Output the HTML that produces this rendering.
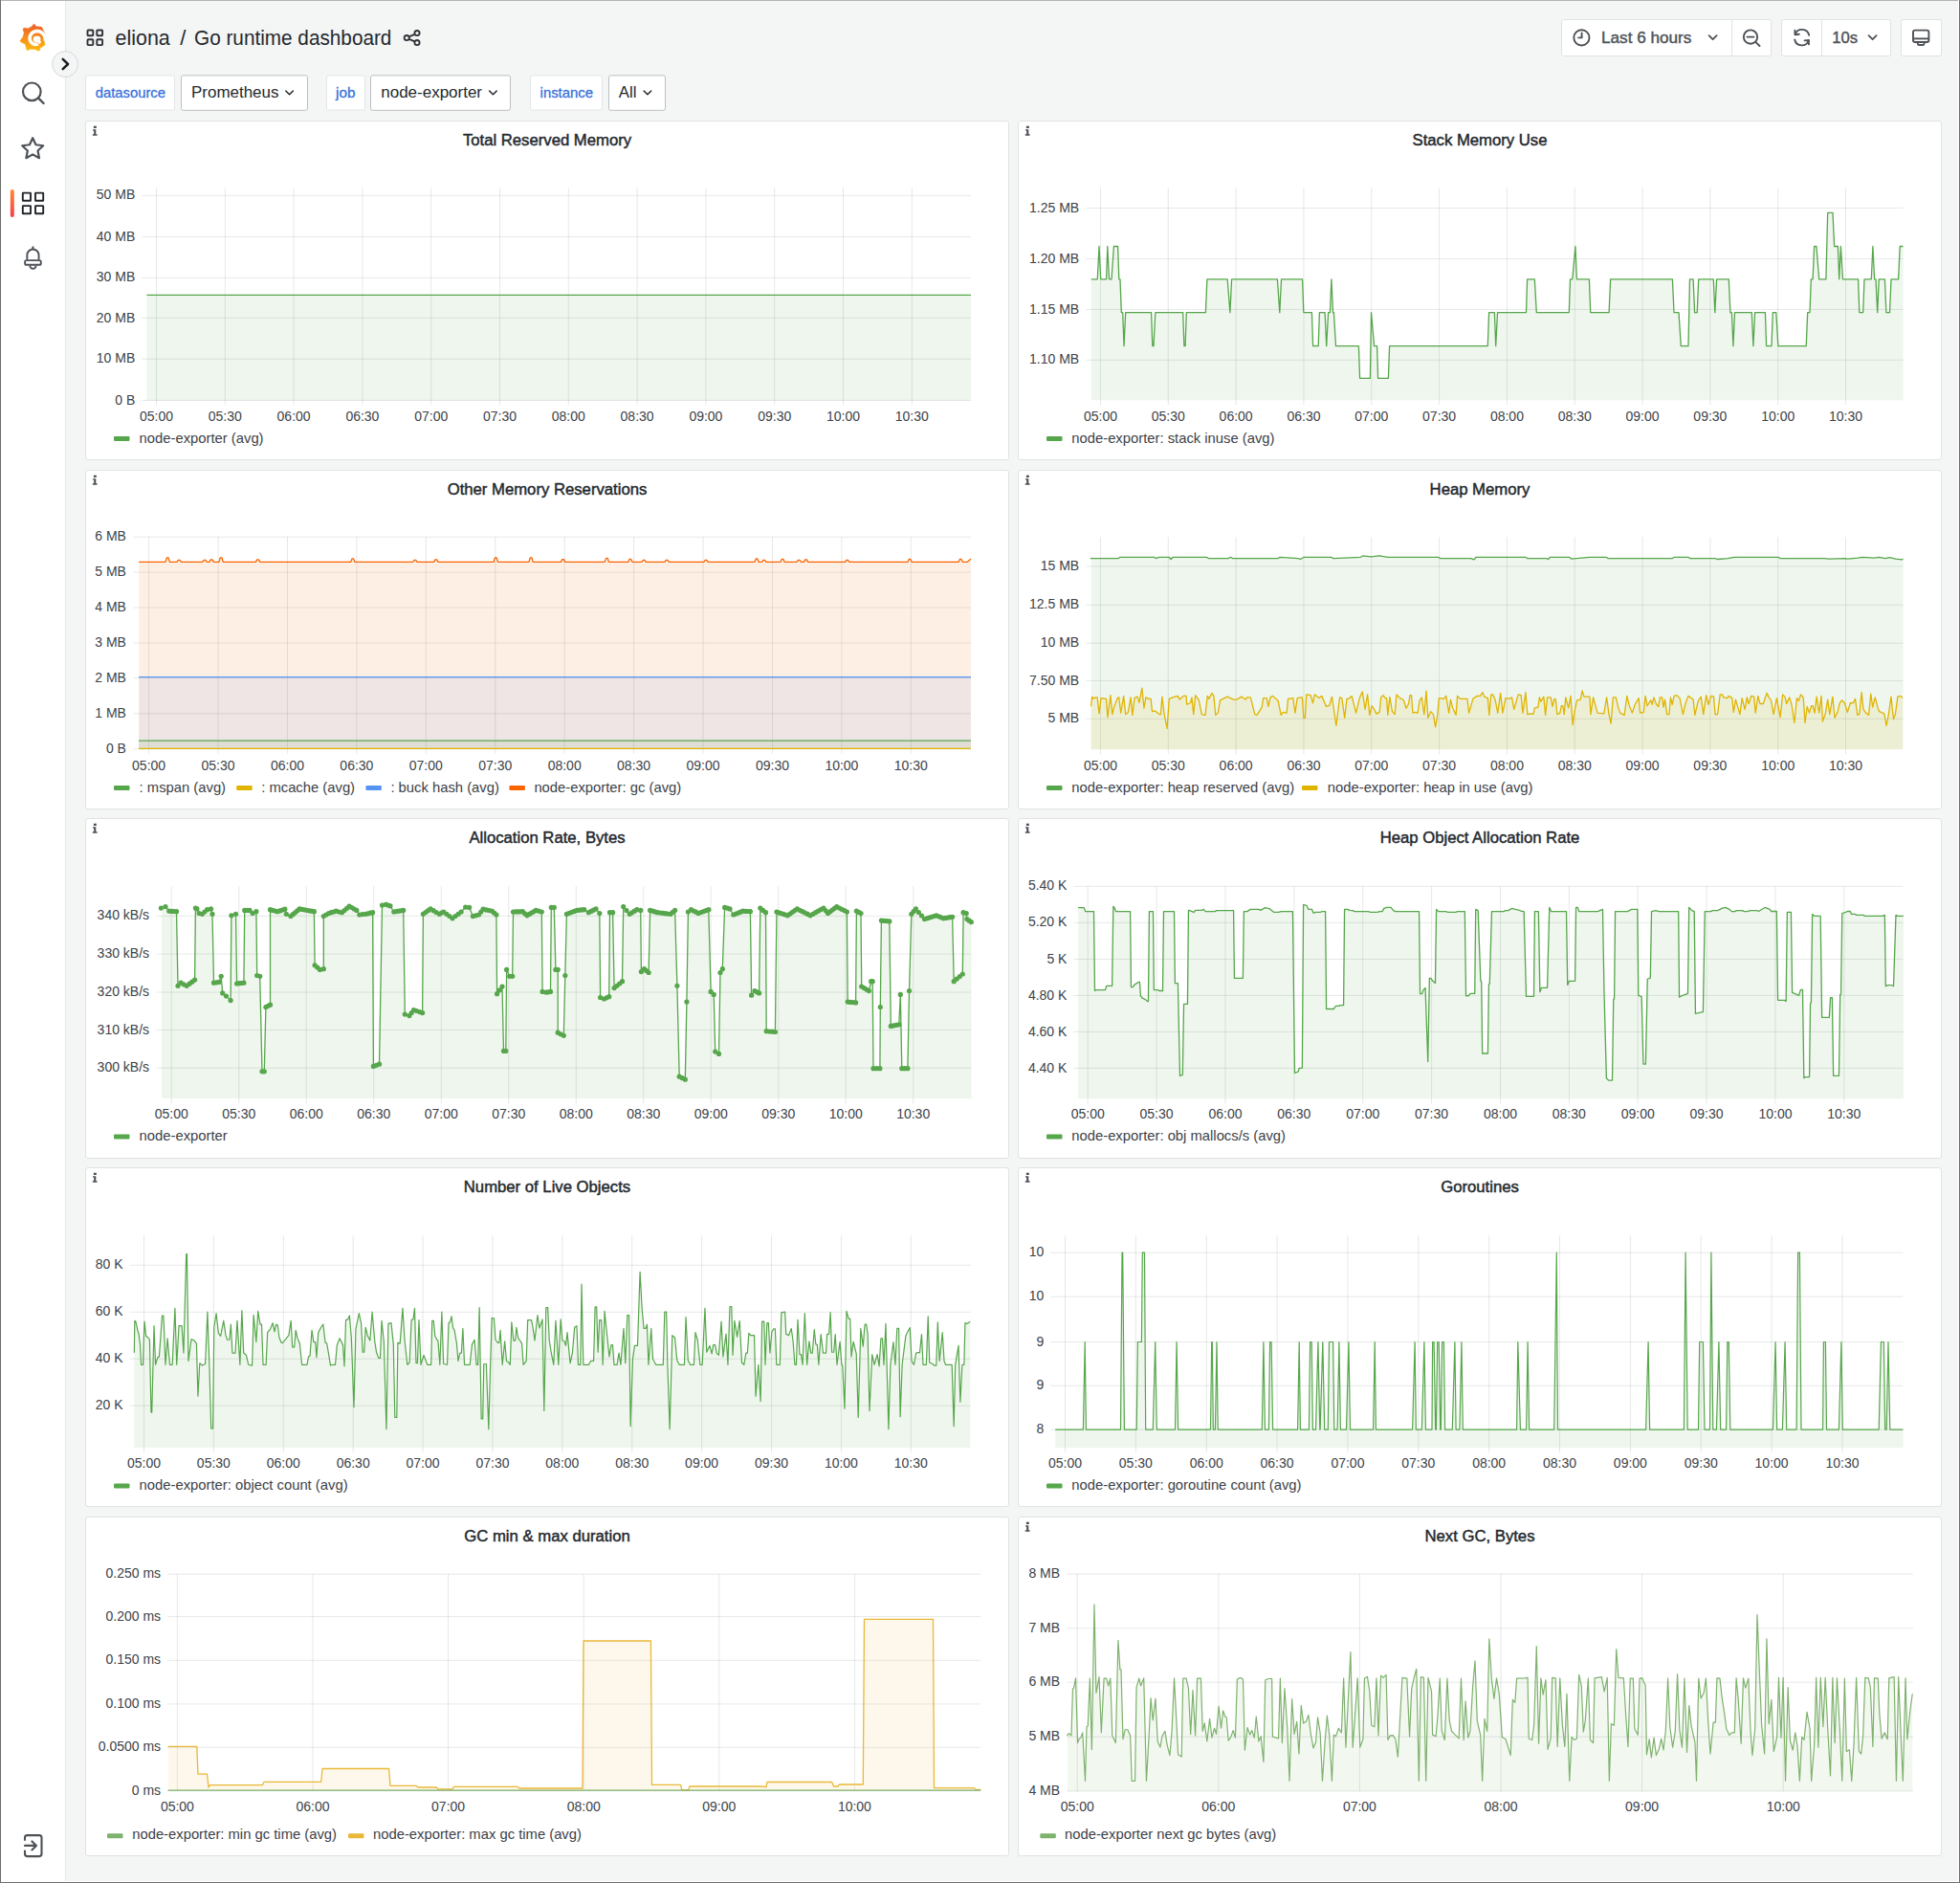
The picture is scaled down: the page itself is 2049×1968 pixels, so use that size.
<!DOCTYPE html>
<html><head><meta charset="utf-8"><title>Go runtime dashboard</title>
<style>html,body{margin:0;padding:0;background:#f4f5f5;width:2049px;height:1968px;overflow:hidden}svg{display:block}</style>
</head><body><svg width="2049" height="1968" viewBox="0 0 2049 1968" shape-rendering="auto">
<rect x="0" y="0" width="2049" height="1968" fill="#f4f5f5"/>
<rect x="0" y="0" width="68" height="1968" fill="#ffffff"/>
<rect x="68" y="0" width="1" height="1968" fill="#e4e6e9"/>
<defs><linearGradient id="lg" x1="0" y1="1" x2="0" y2="0"><stop offset="0" stop-color="#fcbc0c"/><stop offset="1" stop-color="#f05a28"/></linearGradient></defs>
<polygon points="35.5,24.9 37.9,27.8 42.4,28.1 43.8,28.5 44.7,31 46.5,34.3 47.7,38.0 47.4,40.6 46.2,44.2 47.1,46.4 45,48.5 42,50 41.5,52.7 39.3,53 37,51.6 31.9,51.2 28.3,52.7 27.4,50.2 26.5,46.2 21.6,43.7 21.1,42.4 24,38.8 25.2,34.6 24,30.1 25.8,29.2 29.2,29.9 33.3,27.8" fill="url(#lg)" stroke="url(#lg)" stroke-width="0.6" stroke-linejoin="round"/>
<path d="M47.22 43.00 L47.30 42.37 L47.34 41.75 L47.34 41.12 L47.29 40.51 L47.21 39.89 L47.08 39.29 L46.92 38.71 L46.72 38.13 L46.48 37.58 L46.21 37.05 L45.90 36.53 L45.56 36.05 L45.20 35.58 L44.80 35.15 L44.38 34.75 L43.94 34.38 L43.47 34.04 L42.99 33.73 L42.49 33.46 L41.98 33.22 L41.45 33.02 L40.92 32.86 L40.38 32.73 L39.83 32.64 L39.28 32.59 L38.74 32.57 L38.20 32.59 L37.66 32.65 L37.14 32.74 L36.62 32.87 L36.11 33.02 L35.63 33.22 L35.15 33.44 L34.70 33.69 L34.27 33.97 L33.86 34.27 L33.47 34.60 L33.11 34.96 L32.78 35.33 L32.47 35.72 L32.19 36.13 L31.95 36.56 L31.73 36.99 L31.54 37.44 L31.39 37.89 L31.27 38.36 L31.18 38.82 L31.12 39.29 L31.09 39.75 L31.09 40.22 L31.13 40.68 L31.19 41.13 L31.29 41.57 L31.41 42.00 L31.56 42.43 L31.74 42.83 L31.94 43.22 L32.17 43.60 L32.42 43.95 L32.69 44.28 L32.98 44.60 L33.28 44.89 L33.61 45.15 L33.95 45.40 L34.30 45.61 L34.66 45.80 L35.03 45.97 L35.41 46.11 L35.79 46.22 L36.18 46.31 L36.57 46.36 L36.95 46.40 L37.34 46.40 L37.72 46.38 L38.10 46.34 L38.47 46.27 L38.83 46.17 L39.18 46.05 L39.52 45.91 L39.84 45.75" fill="none" stroke="#fff" stroke-width="3.6" stroke-linecap="butt"/>
<ellipse cx="38.55" cy="40.9" rx="3.9" ry="3.35" fill="#fff"/>
<path d="M41.0 45.6 L41.8 42.6" fill="none" stroke="#fff" stroke-width="2.4"/>
<circle cx="68.05" cy="67.0" r="13.5" fill="#f4f5f5" stroke="#d6d8db" stroke-width="1"/>
<path d="M65.7 61.9 L71.1 67 L65.7 72.1" fill="none" stroke="#1b1e22" stroke-width="2.5" stroke-linecap="round" stroke-linejoin="round"/>
<circle cx="33.3" cy="95.8" r="9.3" fill="none" stroke="#4d5257" stroke-width="2.2"/>
<path d="M40.2 102.6 L45.6 108" stroke="#4d5257" stroke-width="2.4" stroke-linecap="round"/>
<polygon points="34.20,144.20 37.49,151.27 45.23,152.22 39.53,157.53 41.02,165.18 34.20,161.40 27.38,165.18 28.87,157.53 23.17,152.22 30.91,151.27" fill="none" stroke="#4d5257" stroke-width="2.2" stroke-linejoin="round"/>
<rect x="23.8" y="201.6" width="8.2" height="8.2" rx="0.4" fill="none" stroke="#202428" stroke-width="1.9"/>
<rect x="37.0" y="201.6" width="8.2" height="8.2" rx="0.4" fill="none" stroke="#202428" stroke-width="1.9"/>
<rect x="23.8" y="215.1" width="8.2" height="8.2" rx="0.4" fill="none" stroke="#202428" stroke-width="1.9"/>
<rect x="37.0" y="215.1" width="8.2" height="8.2" rx="0.4" fill="none" stroke="#202428" stroke-width="1.9"/>
<defs><linearGradient id="ab" x1="0" y1="0" x2="0" y2="1"><stop offset="0" stop-color="#ff8833"/><stop offset="1" stop-color="#f53e4c"/></linearGradient></defs>
<rect x="10.8" y="198" width="4" height="29" rx="2" fill="url(#ab)"/>
<path d="M34.45 258.2 L34.45 260.2" stroke="#4d5257" stroke-width="1.9" stroke-linecap="round"/>
<path d="M28.35 271.4 L28.35 266.6 A6.1 6.1 0 0 1 40.55 266.6 L40.55 271.4" fill="none" stroke="#4d5257" stroke-width="1.9"/>
<rect x="26.1" y="272.1" width="16.7" height="4.7" rx="1.6" fill="none" stroke="#4d5257" stroke-width="1.9"/>
<path d="M31.2 277.6 A3.25 3.25 0 0 0 37.7 277.6" fill="none" stroke="#4d5257" stroke-width="1.9"/>
<path d="M26 1923 L26 1920.6 A2.5 2.5 0 0 1 28.5 1918.1 L41 1918.1 A2.5 2.5 0 0 1 43.5 1920.6 L43.5 1937.6 A2.5 2.5 0 0 1 41 1940.1 L28.5 1940.1 A2.5 2.5 0 0 1 26 1937.6 L26 1934.6" fill="none" stroke="#4d5257" stroke-width="2.1" stroke-linecap="round"/>
<path d="M26 1928.9 L38 1928.9 M33.4 1924.4 L38 1928.9 L33.4 1933.4" fill="none" stroke="#4d5257" stroke-width="2.1" stroke-linecap="round" stroke-linejoin="round"/>
<rect x="91.5" y="31.5" width="5.8" height="5.8" rx="0.8" fill="none" stroke="#2f3338" stroke-width="1.9"/>
<rect x="101.3" y="31.5" width="5.8" height="5.8" rx="0.8" fill="none" stroke="#2f3338" stroke-width="1.9"/>
<rect x="91.5" y="41.3" width="5.8" height="5.8" rx="0.8" fill="none" stroke="#2f3338" stroke-width="1.9"/>
<rect x="101.3" y="41.3" width="5.8" height="5.8" rx="0.8" fill="none" stroke="#2f3338" stroke-width="1.9"/>
<text x="120.60" y="46.70" font-family='"Liberation Sans", sans-serif' font-size="22" font-weight="400" fill="#24292e" text-anchor="start" textLength="57.2" lengthAdjust="spacingAndGlyphs">eliona</text>
<text x="188.30" y="46.70" font-family='"Liberation Sans", sans-serif' font-size="22" font-weight="400" fill="#24292e" text-anchor="start">/</text>
<text x="203.00" y="46.70" font-family='"Liberation Sans", sans-serif' font-size="22" font-weight="400" fill="#24292e" text-anchor="start" textLength="206.4" lengthAdjust="spacingAndGlyphs">Go runtime dashboard</text>
<circle cx="436" cy="34.6" r="2.6" fill="none" stroke="#2f3338" stroke-width="1.8"/>
<circle cx="436" cy="44.6" r="2.6" fill="none" stroke="#2f3338" stroke-width="1.8"/>
<circle cx="425.2" cy="39.6" r="2.6" fill="none" stroke="#2f3338" stroke-width="1.8"/>
<path d="M427.6 38.4 L433.6 35.8 M427.6 40.8 L433.6 43.4" stroke="#2f3338" stroke-width="1.8"/>
<rect x="1632.5" y="20.5" width="219.0" height="38.0" rx="2" fill="#fff" stroke="#dfe1e4" stroke-width="1"/>
<rect x="1810" y="21" width="1" height="37" fill="#dfe1e4"/>
<circle cx="1653.4" cy="39.4" r="8.1" fill="none" stroke="#4d5257" stroke-width="1.9"/>
<path d="M1653.6 34.4 L1653.6 39.4 L1650.2 39.4" fill="none" stroke="#4d5257" stroke-width="1.9" stroke-linecap="round"/>
<text x="1674.00" y="45.20" font-family='"Liberation Sans", sans-serif' font-size="17.2" font-weight="400" fill="#4d5257" text-anchor="start" textLength="94.4" lengthAdjust="spacingAndGlyphs" stroke="#4d5257" stroke-width="0.4">Last 6 hours</text>
<path d="M1786.6 37.2 L1790.6 41.2 L1794.6 37.2" fill="none" stroke="#4d5257" stroke-width="1.8" stroke-linecap="round" stroke-linejoin="round"/>
<circle cx="1830" cy="38.6" r="7.2" fill="none" stroke="#4d5257" stroke-width="1.9"/>
<path d="M1826.4 38.6 L1833.6 38.6 M1835.3 43.9 L1839.5 48" stroke="#4d5257" stroke-width="1.9" stroke-linecap="round"/>
<rect x="1862.5" y="20.5" width="114.0" height="38.0" rx="2" fill="#fff" stroke="#dfe1e4" stroke-width="1"/>
<rect x="1904" y="21" width="1" height="37" fill="#dfe1e4"/>
<path d="M1876.2 41.5 A7.6 7.6 0 0 0 1890.8 42.2 M1891.2 36.8 A7.6 7.6 0 0 0 1876.6 36" fill="none" stroke="#4d5257" stroke-width="1.9" stroke-linecap="round"/>
<path d="M1876.4 31.8 L1876.6 36.2 L1880.8 35.8 M1891 46.4 L1890.8 42 L1886.6 42.4" fill="none" stroke="#4d5257" stroke-width="1.9" stroke-linecap="round" stroke-linejoin="round"/>
<text x="1915.30" y="45.20" font-family='"Liberation Sans", sans-serif' font-size="17.2" font-weight="400" fill="#4d5257" text-anchor="start" textLength="26.8" lengthAdjust="spacingAndGlyphs" stroke="#4d5257" stroke-width="0.4">10s</text>
<path d="M1953.6 37.2 L1957.6 41.2 L1961.6 37.2" fill="none" stroke="#4d5257" stroke-width="1.8" stroke-linecap="round" stroke-linejoin="round"/>
<rect x="1987.5" y="20.5" width="42.0" height="38.0" rx="2" fill="#fff" stroke="#dfe1e4" stroke-width="1"/>
<rect x="2000" y="31.6" width="16.4" height="12.4" rx="2" fill="none" stroke="#4d5257" stroke-width="1.9"/>
<path d="M2000 40.4 L2016.4 40.4" stroke="#4d5257" stroke-width="1.9"/>
<rect x="2004.8" y="44" width="6.8" height="3" rx="1.2" fill="none" stroke="#4d5257" stroke-width="1.8"/>
<rect x="89.5" y="79.0" width="93.0" height="36.0" rx="2" fill="#fff" stroke="#e3e5e8" stroke-width="1"/>
<text x="99.80" y="101.80" font-family='"Liberation Sans", sans-serif' font-size="14.8" font-weight="400" fill="#3871dc" text-anchor="start" textLength="73.2" lengthAdjust="spacingAndGlyphs" stroke="#3871dc" stroke-width="0.3">datasource</text>
<rect x="189.5" y="78.9" width="132" height="36.4" rx="2" fill="#fff" stroke="#bcbfc3" stroke-width="1"/>
<text x="200.00" y="102.00" font-family='"Liberation Sans", sans-serif' font-size="17" font-weight="400" fill="#24292e" text-anchor="start" textLength="91.4" lengthAdjust="spacingAndGlyphs">Prometheus</text>
<path d="M298.8 95 L302.6 98.8 L306.4 95" fill="none" stroke="#24292e" stroke-width="1.5" stroke-linecap="round" stroke-linejoin="round"/>
<rect x="341.5" y="79.0" width="40.0" height="36.0" rx="2" fill="#fff" stroke="#e3e5e8" stroke-width="1"/>
<text x="351.10" y="101.80" font-family='"Liberation Sans", sans-serif' font-size="14.8" font-weight="400" fill="#3871dc" text-anchor="start" textLength="20.4" lengthAdjust="spacingAndGlyphs" stroke="#3871dc" stroke-width="0.3">job</text>
<rect x="387.5" y="78.9" width="146" height="36.4" rx="2" fill="#fff" stroke="#bcbfc3" stroke-width="1"/>
<text x="398.30" y="102.00" font-family='"Liberation Sans", sans-serif' font-size="17" font-weight="400" fill="#24292e" text-anchor="start" textLength="105.7" lengthAdjust="spacingAndGlyphs">node-exporter</text>
<path d="M511.6 95 L515.4 98.8 L519.2 95" fill="none" stroke="#24292e" stroke-width="1.5" stroke-linecap="round" stroke-linejoin="round"/>
<rect x="554.5" y="79.0" width="75.0" height="36.0" rx="2" fill="#fff" stroke="#e3e5e8" stroke-width="1"/>
<text x="564.60" y="101.80" font-family='"Liberation Sans", sans-serif' font-size="14.8" font-weight="400" fill="#3871dc" text-anchor="start" textLength="55.4" lengthAdjust="spacingAndGlyphs" stroke="#3871dc" stroke-width="0.3">instance</text>
<rect x="636.5" y="78.9" width="59" height="36.4" rx="2" fill="#fff" stroke="#bcbfc3" stroke-width="1"/>
<text x="646.80" y="102.00" font-family='"Liberation Sans", sans-serif' font-size="17" font-weight="400" fill="#24292e" text-anchor="start" textLength="18.7" lengthAdjust="spacingAndGlyphs">All</text>
<path d="M673.1 95 L676.9 98.8 L680.7 95" fill="none" stroke="#24292e" stroke-width="1.5" stroke-linecap="round" stroke-linejoin="round"/>
<rect x="89.5" y="126.5" width="965" height="354" rx="2.5" fill="#fff" stroke="#e0e2e5" stroke-width="1"/>
<text x="572.00" y="151.80" font-family='"Liberation Sans", sans-serif' font-size="16.7" font-weight="400" fill="#24292e" text-anchor="middle" stroke="#24292e" stroke-width="0.45">Total Reserved Memory</text>
<rect x="97.90" y="131.70" width="2.9" height="2.3" fill="#4a4f55"/>
<path d="M97.00 135.20 H100.30 V140.20 H101.60 V141.80 H96.80 V140.20 H98.20 V136.60 H97.00 Z" fill="#4a4f55"/>
<rect x="148.2" y="203.80" width="866.8" height="1" fill="rgba(36,41,46,0.11)"/>
<text x="141.30" y="208.40" font-family='"Liberation Sans", sans-serif' font-size="14" font-weight="400" fill="#3d4248" text-anchor="end">50 MB</text>
<rect x="148.2" y="246.90" width="866.8" height="1" fill="rgba(36,41,46,0.11)"/>
<text x="141.30" y="251.50" font-family='"Liberation Sans", sans-serif' font-size="14" font-weight="400" fill="#3d4248" text-anchor="end">40 MB</text>
<rect x="148.2" y="289.80" width="866.8" height="1" fill="rgba(36,41,46,0.11)"/>
<text x="141.30" y="294.40" font-family='"Liberation Sans", sans-serif' font-size="14" font-weight="400" fill="#3d4248" text-anchor="end">30 MB</text>
<rect x="148.2" y="331.90" width="866.8" height="1" fill="rgba(36,41,46,0.11)"/>
<text x="141.30" y="336.50" font-family='"Liberation Sans", sans-serif' font-size="14" font-weight="400" fill="#3d4248" text-anchor="end">20 MB</text>
<rect x="148.2" y="374.70" width="866.8" height="1" fill="rgba(36,41,46,0.11)"/>
<text x="141.30" y="379.30" font-family='"Liberation Sans", sans-serif' font-size="14" font-weight="400" fill="#3d4248" text-anchor="end">10 MB</text>
<rect x="148.2" y="417.90" width="866.8" height="1" fill="rgba(36,41,46,0.11)"/>
<text x="141.30" y="422.50" font-family='"Liberation Sans", sans-serif' font-size="14" font-weight="400" fill="#3d4248" text-anchor="end">0 B</text>
<rect x="163.00" y="196.2" width="1" height="227.2" fill="rgba(36,41,46,0.11)"/>
<text x="163.50" y="439.90" font-family='"Liberation Sans", sans-serif' font-size="14" font-weight="400" fill="#3d4248" text-anchor="middle">05:00</text>
<rect x="234.80" y="196.2" width="1" height="227.2" fill="rgba(36,41,46,0.11)"/>
<text x="235.30" y="439.90" font-family='"Liberation Sans", sans-serif' font-size="14" font-weight="400" fill="#3d4248" text-anchor="middle">05:30</text>
<rect x="306.60" y="196.2" width="1" height="227.2" fill="rgba(36,41,46,0.11)"/>
<text x="307.10" y="439.90" font-family='"Liberation Sans", sans-serif' font-size="14" font-weight="400" fill="#3d4248" text-anchor="middle">06:00</text>
<rect x="378.40" y="196.2" width="1" height="227.2" fill="rgba(36,41,46,0.11)"/>
<text x="378.90" y="439.90" font-family='"Liberation Sans", sans-serif' font-size="14" font-weight="400" fill="#3d4248" text-anchor="middle">06:30</text>
<rect x="450.20" y="196.2" width="1" height="227.2" fill="rgba(36,41,46,0.11)"/>
<text x="450.70" y="439.90" font-family='"Liberation Sans", sans-serif' font-size="14" font-weight="400" fill="#3d4248" text-anchor="middle">07:00</text>
<rect x="522.00" y="196.2" width="1" height="227.2" fill="rgba(36,41,46,0.11)"/>
<text x="522.50" y="439.90" font-family='"Liberation Sans", sans-serif' font-size="14" font-weight="400" fill="#3d4248" text-anchor="middle">07:30</text>
<rect x="593.80" y="196.2" width="1" height="227.2" fill="rgba(36,41,46,0.11)"/>
<text x="594.30" y="439.90" font-family='"Liberation Sans", sans-serif' font-size="14" font-weight="400" fill="#3d4248" text-anchor="middle">08:00</text>
<rect x="665.60" y="196.2" width="1" height="227.2" fill="rgba(36,41,46,0.11)"/>
<text x="666.10" y="439.90" font-family='"Liberation Sans", sans-serif' font-size="14" font-weight="400" fill="#3d4248" text-anchor="middle">08:30</text>
<rect x="737.40" y="196.2" width="1" height="227.2" fill="rgba(36,41,46,0.11)"/>
<text x="737.90" y="439.90" font-family='"Liberation Sans", sans-serif' font-size="14" font-weight="400" fill="#3d4248" text-anchor="middle">09:00</text>
<rect x="809.20" y="196.2" width="1" height="227.2" fill="rgba(36,41,46,0.11)"/>
<text x="809.70" y="439.90" font-family='"Liberation Sans", sans-serif' font-size="14" font-weight="400" fill="#3d4248" text-anchor="middle">09:30</text>
<rect x="881.00" y="196.2" width="1" height="227.2" fill="rgba(36,41,46,0.11)"/>
<text x="881.50" y="439.90" font-family='"Liberation Sans", sans-serif' font-size="14" font-weight="400" fill="#3d4248" text-anchor="middle">10:00</text>
<rect x="952.80" y="196.2" width="1" height="227.2" fill="rgba(36,41,46,0.11)"/>
<text x="953.30" y="439.90" font-family='"Liberation Sans", sans-serif' font-size="14" font-weight="400" fill="#3d4248" text-anchor="middle">10:30</text>
<path d="M153.50 308.40 L1015.00 308.40 L1015.00 418.40 L153.50 418.40 Z" fill="rgba(86,166,75,0.1)" stroke="none"/>
<path d="M153.50 308.40 L1015.00 308.40" fill="none" stroke="#56a64b" stroke-width="1.3" stroke-linejoin="round"/>
<rect x="119.0" y="455.9" width="16.5" height="5" rx="1.2" fill="#56a64b"/>
<text x="145.60" y="462.80" font-family='"Liberation Sans", sans-serif' font-size="14.8" font-weight="400" fill="#3d4248" text-anchor="start">node-exporter (avg)</text>
<rect x="1064.5" y="126.5" width="965" height="354" rx="2.5" fill="#fff" stroke="#e0e2e5" stroke-width="1"/>
<text x="1547.00" y="151.80" font-family='"Liberation Sans", sans-serif' font-size="16.7" font-weight="400" fill="#24292e" text-anchor="middle" stroke="#24292e" stroke-width="0.45">Stack Memory Use</text>
<rect x="1072.90" y="131.70" width="2.9" height="2.3" fill="#4a4f55"/>
<path d="M1072.00 135.20 H1075.30 V140.20 H1076.60 V141.80 H1071.80 V140.20 H1073.20 V136.60 H1072.00 Z" fill="#4a4f55"/>
<rect x="1135.5" y="216.90" width="854.0" height="1" fill="rgba(36,41,46,0.11)"/>
<text x="1128.20" y="221.50" font-family='"Liberation Sans", sans-serif' font-size="14" font-weight="400" fill="#3d4248" text-anchor="end">1.25 MB</text>
<rect x="1135.5" y="270.00" width="854.0" height="1" fill="rgba(36,41,46,0.11)"/>
<text x="1128.20" y="274.60" font-family='"Liberation Sans", sans-serif' font-size="14" font-weight="400" fill="#3d4248" text-anchor="end">1.20 MB</text>
<rect x="1135.5" y="322.90" width="854.0" height="1" fill="rgba(36,41,46,0.11)"/>
<text x="1128.20" y="327.50" font-family='"Liberation Sans", sans-serif' font-size="14" font-weight="400" fill="#3d4248" text-anchor="end">1.15 MB</text>
<rect x="1135.5" y="375.80" width="854.0" height="1" fill="rgba(36,41,46,0.11)"/>
<text x="1128.20" y="380.40" font-family='"Liberation Sans", sans-serif' font-size="14" font-weight="400" fill="#3d4248" text-anchor="end">1.10 MB</text>
<rect x="1150.00" y="196.3" width="1" height="226.9" fill="rgba(36,41,46,0.11)"/>
<text x="1150.50" y="439.90" font-family='"Liberation Sans", sans-serif' font-size="14" font-weight="400" fill="#3d4248" text-anchor="middle">05:00</text>
<rect x="1220.82" y="196.3" width="1" height="226.9" fill="rgba(36,41,46,0.11)"/>
<text x="1221.32" y="439.90" font-family='"Liberation Sans", sans-serif' font-size="14" font-weight="400" fill="#3d4248" text-anchor="middle">05:30</text>
<rect x="1291.64" y="196.3" width="1" height="226.9" fill="rgba(36,41,46,0.11)"/>
<text x="1292.14" y="439.90" font-family='"Liberation Sans", sans-serif' font-size="14" font-weight="400" fill="#3d4248" text-anchor="middle">06:00</text>
<rect x="1362.46" y="196.3" width="1" height="226.9" fill="rgba(36,41,46,0.11)"/>
<text x="1362.96" y="439.90" font-family='"Liberation Sans", sans-serif' font-size="14" font-weight="400" fill="#3d4248" text-anchor="middle">06:30</text>
<rect x="1433.28" y="196.3" width="1" height="226.9" fill="rgba(36,41,46,0.11)"/>
<text x="1433.78" y="439.90" font-family='"Liberation Sans", sans-serif' font-size="14" font-weight="400" fill="#3d4248" text-anchor="middle">07:00</text>
<rect x="1504.10" y="196.3" width="1" height="226.9" fill="rgba(36,41,46,0.11)"/>
<text x="1504.60" y="439.90" font-family='"Liberation Sans", sans-serif' font-size="14" font-weight="400" fill="#3d4248" text-anchor="middle">07:30</text>
<rect x="1574.92" y="196.3" width="1" height="226.9" fill="rgba(36,41,46,0.11)"/>
<text x="1575.42" y="439.90" font-family='"Liberation Sans", sans-serif' font-size="14" font-weight="400" fill="#3d4248" text-anchor="middle">08:00</text>
<rect x="1645.74" y="196.3" width="1" height="226.9" fill="rgba(36,41,46,0.11)"/>
<text x="1646.24" y="439.90" font-family='"Liberation Sans", sans-serif' font-size="14" font-weight="400" fill="#3d4248" text-anchor="middle">08:30</text>
<rect x="1716.56" y="196.3" width="1" height="226.9" fill="rgba(36,41,46,0.11)"/>
<text x="1717.06" y="439.90" font-family='"Liberation Sans", sans-serif' font-size="14" font-weight="400" fill="#3d4248" text-anchor="middle">09:00</text>
<rect x="1787.38" y="196.3" width="1" height="226.9" fill="rgba(36,41,46,0.11)"/>
<text x="1787.88" y="439.90" font-family='"Liberation Sans", sans-serif' font-size="14" font-weight="400" fill="#3d4248" text-anchor="middle">09:30</text>
<rect x="1858.20" y="196.3" width="1" height="226.9" fill="rgba(36,41,46,0.11)"/>
<text x="1858.70" y="439.90" font-family='"Liberation Sans", sans-serif' font-size="14" font-weight="400" fill="#3d4248" text-anchor="middle">10:00</text>
<rect x="1929.02" y="196.3" width="1" height="226.9" fill="rgba(36,41,46,0.11)"/>
<text x="1929.52" y="439.90" font-family='"Liberation Sans", sans-serif' font-size="14" font-weight="400" fill="#3d4248" text-anchor="middle">10:30</text>
<path d="M1140.70 291.80 L1147.30 291.80 L1149.00 257.50 L1150.70 291.80 L1156.60 291.80 L1157.80 257.50 L1159.50 291.80 L1162.00 291.80 L1164.40 257.50 L1168.60 257.50 L1169.80 291.80 L1171.00 291.80 L1172.30 326.60 L1173.70 326.60 L1175.00 361.60 L1176.70 326.60 L1203.60 326.60 L1204.80 361.60 L1206.00 361.60 L1207.80 326.60 L1236.70 326.60 L1237.90 361.60 L1239.10 361.60 L1240.30 326.60 L1260.40 326.60 L1261.90 291.80 L1283.20 291.80 L1285.90 326.60 L1287.60 291.80 L1335.40 291.80 L1337.80 326.60 L1339.50 291.80 L1361.60 291.80 L1362.80 326.60 L1371.40 326.60 L1372.60 361.60 L1378.20 361.60 L1379.40 326.60 L1385.10 326.60 L1386.70 361.60 L1388.60 326.60 L1390.40 326.60 L1391.90 291.80 L1393.50 326.60 L1394.40 326.60 L1396.50 361.60 L1420.40 361.60 L1421.60 395.40 L1432.40 395.40 L1433.50 326.60 L1436.60 361.60 L1439.60 361.60 L1440.60 395.40 L1451.40 395.40 L1452.60 361.60 L1555.30 361.60 L1556.60 326.60 L1562.40 326.60 L1563.70 361.60 L1565.50 326.60 L1595.50 326.60 L1596.60 291.80 L1604.30 291.80 L1606.30 326.60 L1640.30 326.60 L1641.50 291.80 L1643.80 291.80 L1646.90 257.50 L1648.40 291.80 L1661.40 291.80 L1662.70 326.60 L1682.10 326.60 L1683.60 291.80 L1748.40 291.80 L1750.00 326.60 L1755.00 326.60 L1757.30 361.60 L1765.00 361.60 L1766.50 291.80 L1770.10 291.80 L1771.60 326.60 L1774.20 326.60 L1775.70 291.80 L1791.30 291.80 L1792.80 326.60 L1794.60 291.80 L1807.30 291.80 L1808.90 326.60 L1810.40 326.60 L1811.90 361.60 L1813.50 326.60 L1831.30 326.60 L1832.90 361.60 L1834.60 326.60 L1845.40 326.60 L1846.60 361.60 L1852.00 361.60 L1853.30 326.60 L1856.80 326.60 L1858.90 361.60 L1888.20 361.60 L1889.70 326.60 L1892.00 326.60 L1893.30 291.80 L1895.10 291.80 L1896.60 257.50 L1898.90 257.50 L1901.70 291.80 L1908.90 291.80 L1910.70 222.40 L1916.00 222.40 L1917.60 257.50 L1921.40 257.50 L1922.70 291.80 L1924.40 257.50 L1926.50 291.80 L1942.60 291.80 L1943.80 326.60 L1947.70 326.60 L1949.00 291.80 L1956.30 291.80 L1957.90 257.50 L1959.60 291.80 L1961.00 291.80 L1962.70 326.60 L1964.20 291.80 L1970.40 291.80 L1971.90 326.60 L1975.50 326.60 L1977.00 291.80 L1984.60 291.80 L1986.20 257.50 L1989.50 257.50 L1989.50 418.20 L1140.70 418.20 Z" fill="rgba(86,166,75,0.1)" stroke="none"/>
<path d="M1140.70 291.80 L1147.30 291.80 L1149.00 257.50 L1150.70 291.80 L1156.60 291.80 L1157.80 257.50 L1159.50 291.80 L1162.00 291.80 L1164.40 257.50 L1168.60 257.50 L1169.80 291.80 L1171.00 291.80 L1172.30 326.60 L1173.70 326.60 L1175.00 361.60 L1176.70 326.60 L1203.60 326.60 L1204.80 361.60 L1206.00 361.60 L1207.80 326.60 L1236.70 326.60 L1237.90 361.60 L1239.10 361.60 L1240.30 326.60 L1260.40 326.60 L1261.90 291.80 L1283.20 291.80 L1285.90 326.60 L1287.60 291.80 L1335.40 291.80 L1337.80 326.60 L1339.50 291.80 L1361.60 291.80 L1362.80 326.60 L1371.40 326.60 L1372.60 361.60 L1378.20 361.60 L1379.40 326.60 L1385.10 326.60 L1386.70 361.60 L1388.60 326.60 L1390.40 326.60 L1391.90 291.80 L1393.50 326.60 L1394.40 326.60 L1396.50 361.60 L1420.40 361.60 L1421.60 395.40 L1432.40 395.40 L1433.50 326.60 L1436.60 361.60 L1439.60 361.60 L1440.60 395.40 L1451.40 395.40 L1452.60 361.60 L1555.30 361.60 L1556.60 326.60 L1562.40 326.60 L1563.70 361.60 L1565.50 326.60 L1595.50 326.60 L1596.60 291.80 L1604.30 291.80 L1606.30 326.60 L1640.30 326.60 L1641.50 291.80 L1643.80 291.80 L1646.90 257.50 L1648.40 291.80 L1661.40 291.80 L1662.70 326.60 L1682.10 326.60 L1683.60 291.80 L1748.40 291.80 L1750.00 326.60 L1755.00 326.60 L1757.30 361.60 L1765.00 361.60 L1766.50 291.80 L1770.10 291.80 L1771.60 326.60 L1774.20 326.60 L1775.70 291.80 L1791.30 291.80 L1792.80 326.60 L1794.60 291.80 L1807.30 291.80 L1808.90 326.60 L1810.40 326.60 L1811.90 361.60 L1813.50 326.60 L1831.30 326.60 L1832.90 361.60 L1834.60 326.60 L1845.40 326.60 L1846.60 361.60 L1852.00 361.60 L1853.30 326.60 L1856.80 326.60 L1858.90 361.60 L1888.20 361.60 L1889.70 326.60 L1892.00 326.60 L1893.30 291.80 L1895.10 291.80 L1896.60 257.50 L1898.90 257.50 L1901.70 291.80 L1908.90 291.80 L1910.70 222.40 L1916.00 222.40 L1917.60 257.50 L1921.40 257.50 L1922.70 291.80 L1924.40 257.50 L1926.50 291.80 L1942.60 291.80 L1943.80 326.60 L1947.70 326.60 L1949.00 291.80 L1956.30 291.80 L1957.90 257.50 L1959.60 291.80 L1961.00 291.80 L1962.70 326.60 L1964.20 291.80 L1970.40 291.80 L1971.90 326.60 L1975.50 326.60 L1977.00 291.80 L1984.60 291.80 L1986.20 257.50 L1989.50 257.50" fill="none" stroke="#56a64b" stroke-width="1.3" stroke-linejoin="round"/>
<rect x="1094.0" y="455.9" width="16.5" height="5" rx="1.2" fill="#56a64b"/>
<text x="1120.30" y="462.80" font-family='"Liberation Sans", sans-serif' font-size="14.8" font-weight="400" fill="#3d4248" text-anchor="start">node-exporter: stack inuse (avg)</text>
<rect x="89.5" y="491.5" width="965" height="354" rx="2.5" fill="#fff" stroke="#e0e2e5" stroke-width="1"/>
<text x="572.00" y="516.80" font-family='"Liberation Sans", sans-serif' font-size="16.7" font-weight="400" fill="#24292e" text-anchor="middle" stroke="#24292e" stroke-width="0.45">Other Memory Reservations</text>
<rect x="97.90" y="496.70" width="2.9" height="2.3" fill="#4a4f55"/>
<path d="M97.00 500.20 H100.30 V505.20 H101.60 V506.80 H96.80 V505.20 H98.20 V501.60 H97.00 Z" fill="#4a4f55"/>
<rect x="139.5" y="560.70" width="875.5" height="1" fill="rgba(36,41,46,0.11)"/>
<text x="131.90" y="565.30" font-family='"Liberation Sans", sans-serif' font-size="14" font-weight="400" fill="#3d4248" text-anchor="end">6 MB</text>
<rect x="139.5" y="597.60" width="875.5" height="1" fill="rgba(36,41,46,0.11)"/>
<text x="131.90" y="602.20" font-family='"Liberation Sans", sans-serif' font-size="14" font-weight="400" fill="#3d4248" text-anchor="end">5 MB</text>
<rect x="139.5" y="634.60" width="875.5" height="1" fill="rgba(36,41,46,0.11)"/>
<text x="131.90" y="639.20" font-family='"Liberation Sans", sans-serif' font-size="14" font-weight="400" fill="#3d4248" text-anchor="end">4 MB</text>
<rect x="139.5" y="671.60" width="875.5" height="1" fill="rgba(36,41,46,0.11)"/>
<text x="131.90" y="676.20" font-family='"Liberation Sans", sans-serif' font-size="14" font-weight="400" fill="#3d4248" text-anchor="end">3 MB</text>
<rect x="139.5" y="708.10" width="875.5" height="1" fill="rgba(36,41,46,0.11)"/>
<text x="131.90" y="712.70" font-family='"Liberation Sans", sans-serif' font-size="14" font-weight="400" fill="#3d4248" text-anchor="end">2 MB</text>
<rect x="139.5" y="745.30" width="875.5" height="1" fill="rgba(36,41,46,0.11)"/>
<text x="131.90" y="749.90" font-family='"Liberation Sans", sans-serif' font-size="14" font-weight="400" fill="#3d4248" text-anchor="end">1 MB</text>
<rect x="139.5" y="782.30" width="875.5" height="1" fill="rgba(36,41,46,0.11)"/>
<text x="131.90" y="786.90" font-family='"Liberation Sans", sans-serif' font-size="14" font-weight="400" fill="#3d4248" text-anchor="end">0 B</text>
<rect x="155.10" y="561.2" width="1" height="226.6" fill="rgba(36,41,46,0.11)"/>
<text x="155.60" y="804.90" font-family='"Liberation Sans", sans-serif' font-size="14" font-weight="400" fill="#3d4248" text-anchor="middle">05:00</text>
<rect x="227.53" y="561.2" width="1" height="226.6" fill="rgba(36,41,46,0.11)"/>
<text x="228.03" y="804.90" font-family='"Liberation Sans", sans-serif' font-size="14" font-weight="400" fill="#3d4248" text-anchor="middle">05:30</text>
<rect x="299.96" y="561.2" width="1" height="226.6" fill="rgba(36,41,46,0.11)"/>
<text x="300.46" y="804.90" font-family='"Liberation Sans", sans-serif' font-size="14" font-weight="400" fill="#3d4248" text-anchor="middle">06:00</text>
<rect x="372.39" y="561.2" width="1" height="226.6" fill="rgba(36,41,46,0.11)"/>
<text x="372.89" y="804.90" font-family='"Liberation Sans", sans-serif' font-size="14" font-weight="400" fill="#3d4248" text-anchor="middle">06:30</text>
<rect x="444.82" y="561.2" width="1" height="226.6" fill="rgba(36,41,46,0.11)"/>
<text x="445.32" y="804.90" font-family='"Liberation Sans", sans-serif' font-size="14" font-weight="400" fill="#3d4248" text-anchor="middle">07:00</text>
<rect x="517.25" y="561.2" width="1" height="226.6" fill="rgba(36,41,46,0.11)"/>
<text x="517.75" y="804.90" font-family='"Liberation Sans", sans-serif' font-size="14" font-weight="400" fill="#3d4248" text-anchor="middle">07:30</text>
<rect x="589.68" y="561.2" width="1" height="226.6" fill="rgba(36,41,46,0.11)"/>
<text x="590.18" y="804.90" font-family='"Liberation Sans", sans-serif' font-size="14" font-weight="400" fill="#3d4248" text-anchor="middle">08:00</text>
<rect x="662.11" y="561.2" width="1" height="226.6" fill="rgba(36,41,46,0.11)"/>
<text x="662.61" y="804.90" font-family='"Liberation Sans", sans-serif' font-size="14" font-weight="400" fill="#3d4248" text-anchor="middle">08:30</text>
<rect x="734.54" y="561.2" width="1" height="226.6" fill="rgba(36,41,46,0.11)"/>
<text x="735.04" y="804.90" font-family='"Liberation Sans", sans-serif' font-size="14" font-weight="400" fill="#3d4248" text-anchor="middle">09:00</text>
<rect x="806.97" y="561.2" width="1" height="226.6" fill="rgba(36,41,46,0.11)"/>
<text x="807.47" y="804.90" font-family='"Liberation Sans", sans-serif' font-size="14" font-weight="400" fill="#3d4248" text-anchor="middle">09:30</text>
<rect x="879.40" y="561.2" width="1" height="226.6" fill="rgba(36,41,46,0.11)"/>
<text x="879.90" y="804.90" font-family='"Liberation Sans", sans-serif' font-size="14" font-weight="400" fill="#3d4248" text-anchor="middle">10:00</text>
<rect x="951.83" y="561.2" width="1" height="226.6" fill="rgba(36,41,46,0.11)"/>
<text x="952.33" y="804.90" font-family='"Liberation Sans", sans-serif' font-size="14" font-weight="400" fill="#3d4248" text-anchor="middle">10:30</text>
<path d="M145.10 782.30 L1015.00 782.30 L1015.00 782.80 L145.10 782.80 Z" fill="rgba(224,180,0,0.1)" stroke="none"/>
<path d="M145.10 774.20 L1015.00 774.20 L1015.00 782.80 L145.10 782.80 Z" fill="rgba(86,166,75,0.1)" stroke="none"/>
<path d="M145.10 707.60 L1015.00 707.60 L1015.00 782.80 L145.10 782.80 Z" fill="rgba(87,148,242,0.1)" stroke="none"/>
<path d="M145.10 587.40 L173.00 587.40 L174.40 582.80 L176.00 582.80 L177.40 587.40 L185.00 587.40 L186.40 585.40 L188.00 585.40 L189.40 587.40 L211.80 587.40 L213.20 585.40 L214.80 585.40 L216.20 587.40 L218.90 587.40 L220.30 584.90 L221.90 584.90 L223.30 587.40 L228.90 587.40 L230.30 582.80 L231.90 582.80 L233.30 587.40 L267.40 587.40 L268.80 584.90 L270.40 584.90 L271.80 587.40 L366.60 587.40 L368.00 583.90 L369.60 583.90 L371.00 587.40 L431.70 587.40 L433.10 585.40 L434.70 585.40 L436.10 587.40 L453.60 587.40 L455.00 584.90 L456.60 584.90 L458.00 587.40 L516.10 587.40 L517.50 582.80 L519.10 582.80 L520.50 587.40 L552.90 587.40 L554.30 582.80 L555.90 582.80 L557.30 587.40 L586.40 587.40 L587.80 584.60 L589.40 584.60 L590.80 587.40 L632.20 587.40 L633.60 583.40 L635.20 583.40 L636.60 587.40 L656.70 587.40 L658.10 584.40 L659.70 584.40 L661.10 587.40 L670.90 587.40 L672.30 585.40 L673.90 585.40 L675.30 587.40 L694.90 587.40 L696.30 585.40 L697.90 585.40 L699.30 587.40 L735.80 587.40 L737.20 585.40 L738.80 585.40 L740.20 587.40 L788.90 587.40 L790.30 583.90 L791.90 583.90 L793.30 587.40 L796.50 587.40 L797.90 585.40 L799.50 585.40 L800.90 587.40 L815.90 587.40 L817.30 584.40 L818.90 584.40 L820.30 587.40 L833.00 587.40 L834.40 585.40 L836.00 585.40 L837.40 587.40 L840.40 587.40 L841.80 584.90 L843.40 584.90 L844.80 587.40 L883.50 587.40 L884.90 585.40 L886.50 585.40 L887.90 587.40 L948.90 587.40 L950.30 584.40 L951.90 584.40 L953.30 587.40 L1002.00 587.40 L1003.40 584.40 L1005.00 584.40 L1006.40 587.40 L1011.00 587.40 L1014.00 584.90 L1015.00 583.90 L1015.00 782.80 L145.10 782.80 Z" fill="rgba(250,100,0,0.1)" stroke="none"/>
<path d="M145.10 782.30 L1015.00 782.30" fill="none" stroke="#e0b400" stroke-width="1.3" stroke-linejoin="round"/>
<path d="M145.10 774.20 L1015.00 774.20" fill="none" stroke="#56a64b" stroke-width="1.3" stroke-linejoin="round"/>
<path d="M145.10 707.60 L1015.00 707.60" fill="none" stroke="#5794f2" stroke-width="1.3" stroke-linejoin="round"/>
<path d="M145.10 587.40 L173.00 587.40 L174.40 582.80 L176.00 582.80 L177.40 587.40 L185.00 587.40 L186.40 585.40 L188.00 585.40 L189.40 587.40 L211.80 587.40 L213.20 585.40 L214.80 585.40 L216.20 587.40 L218.90 587.40 L220.30 584.90 L221.90 584.90 L223.30 587.40 L228.90 587.40 L230.30 582.80 L231.90 582.80 L233.30 587.40 L267.40 587.40 L268.80 584.90 L270.40 584.90 L271.80 587.40 L366.60 587.40 L368.00 583.90 L369.60 583.90 L371.00 587.40 L431.70 587.40 L433.10 585.40 L434.70 585.40 L436.10 587.40 L453.60 587.40 L455.00 584.90 L456.60 584.90 L458.00 587.40 L516.10 587.40 L517.50 582.80 L519.10 582.80 L520.50 587.40 L552.90 587.40 L554.30 582.80 L555.90 582.80 L557.30 587.40 L586.40 587.40 L587.80 584.60 L589.40 584.60 L590.80 587.40 L632.20 587.40 L633.60 583.40 L635.20 583.40 L636.60 587.40 L656.70 587.40 L658.10 584.40 L659.70 584.40 L661.10 587.40 L670.90 587.40 L672.30 585.40 L673.90 585.40 L675.30 587.40 L694.90 587.40 L696.30 585.40 L697.90 585.40 L699.30 587.40 L735.80 587.40 L737.20 585.40 L738.80 585.40 L740.20 587.40 L788.90 587.40 L790.30 583.90 L791.90 583.90 L793.30 587.40 L796.50 587.40 L797.90 585.40 L799.50 585.40 L800.90 587.40 L815.90 587.40 L817.30 584.40 L818.90 584.40 L820.30 587.40 L833.00 587.40 L834.40 585.40 L836.00 585.40 L837.40 587.40 L840.40 587.40 L841.80 584.90 L843.40 584.90 L844.80 587.40 L883.50 587.40 L884.90 585.40 L886.50 585.40 L887.90 587.40 L948.90 587.40 L950.30 584.40 L951.90 584.40 L953.30 587.40 L1002.00 587.40 L1003.40 584.40 L1005.00 584.40 L1006.40 587.40 L1011.00 587.40 L1014.00 584.90 L1015.00 583.90" fill="none" stroke="#fa6400" stroke-width="1.3" stroke-linejoin="round"/>
<rect x="119.0" y="820.9" width="16.5" height="5" rx="1.2" fill="#56a64b"/>
<text x="145.60" y="827.80" font-family='"Liberation Sans", sans-serif' font-size="14.8" font-weight="400" fill="#3d4248" text-anchor="start">: mspan (avg)</text>
<rect x="247.2" y="820.9" width="16.5" height="5" rx="1.2" fill="#e0b400"/>
<text x="273.20" y="827.80" font-family='"Liberation Sans", sans-serif' font-size="14.8" font-weight="400" fill="#3d4248" text-anchor="start">: mcache (avg)</text>
<rect x="382.4" y="820.9" width="16.5" height="5" rx="1.2" fill="#5794f2"/>
<text x="408.40" y="827.80" font-family='"Liberation Sans", sans-serif' font-size="14.8" font-weight="400" fill="#3d4248" text-anchor="start">: buck hash (avg)</text>
<rect x="532.4" y="820.9" width="16.5" height="5" rx="1.2" fill="#fa6400"/>
<text x="558.40" y="827.80" font-family='"Liberation Sans", sans-serif' font-size="14.8" font-weight="400" fill="#3d4248" text-anchor="start">node-exporter: gc (avg)</text>
<rect x="1064.5" y="491.5" width="965" height="354" rx="2.5" fill="#fff" stroke="#e0e2e5" stroke-width="1"/>
<text x="1547.00" y="516.80" font-family='"Liberation Sans", sans-serif' font-size="16.7" font-weight="400" fill="#24292e" text-anchor="middle" stroke="#24292e" stroke-width="0.45">Heap Memory</text>
<rect x="1072.90" y="496.70" width="2.9" height="2.3" fill="#4a4f55"/>
<path d="M1072.00 500.20 H1075.30 V505.20 H1076.60 V506.80 H1071.80 V505.20 H1073.20 V501.60 H1072.00 Z" fill="#4a4f55"/>
<rect x="1135.5" y="591.40" width="854.0" height="1" fill="rgba(36,41,46,0.11)"/>
<text x="1128.20" y="596.00" font-family='"Liberation Sans", sans-serif' font-size="14" font-weight="400" fill="#3d4248" text-anchor="end">15 MB</text>
<rect x="1135.5" y="631.80" width="854.0" height="1" fill="rgba(36,41,46,0.11)"/>
<text x="1128.20" y="636.40" font-family='"Liberation Sans", sans-serif' font-size="14" font-weight="400" fill="#3d4248" text-anchor="end">12.5 MB</text>
<rect x="1135.5" y="671.70" width="854.0" height="1" fill="rgba(36,41,46,0.11)"/>
<text x="1128.20" y="676.30" font-family='"Liberation Sans", sans-serif' font-size="14" font-weight="400" fill="#3d4248" text-anchor="end">10 MB</text>
<rect x="1135.5" y="710.90" width="854.0" height="1" fill="rgba(36,41,46,0.11)"/>
<text x="1128.20" y="715.50" font-family='"Liberation Sans", sans-serif' font-size="14" font-weight="400" fill="#3d4248" text-anchor="end">7.50 MB</text>
<rect x="1135.5" y="750.80" width="854.0" height="1" fill="rgba(36,41,46,0.11)"/>
<text x="1128.20" y="755.40" font-family='"Liberation Sans", sans-serif' font-size="14" font-weight="400" fill="#3d4248" text-anchor="end">5 MB</text>
<rect x="1150.00" y="561.3" width="1" height="226.9" fill="rgba(36,41,46,0.11)"/>
<text x="1150.50" y="804.90" font-family='"Liberation Sans", sans-serif' font-size="14" font-weight="400" fill="#3d4248" text-anchor="middle">05:00</text>
<rect x="1220.82" y="561.3" width="1" height="226.9" fill="rgba(36,41,46,0.11)"/>
<text x="1221.32" y="804.90" font-family='"Liberation Sans", sans-serif' font-size="14" font-weight="400" fill="#3d4248" text-anchor="middle">05:30</text>
<rect x="1291.64" y="561.3" width="1" height="226.9" fill="rgba(36,41,46,0.11)"/>
<text x="1292.14" y="804.90" font-family='"Liberation Sans", sans-serif' font-size="14" font-weight="400" fill="#3d4248" text-anchor="middle">06:00</text>
<rect x="1362.46" y="561.3" width="1" height="226.9" fill="rgba(36,41,46,0.11)"/>
<text x="1362.96" y="804.90" font-family='"Liberation Sans", sans-serif' font-size="14" font-weight="400" fill="#3d4248" text-anchor="middle">06:30</text>
<rect x="1433.28" y="561.3" width="1" height="226.9" fill="rgba(36,41,46,0.11)"/>
<text x="1433.78" y="804.90" font-family='"Liberation Sans", sans-serif' font-size="14" font-weight="400" fill="#3d4248" text-anchor="middle">07:00</text>
<rect x="1504.10" y="561.3" width="1" height="226.9" fill="rgba(36,41,46,0.11)"/>
<text x="1504.60" y="804.90" font-family='"Liberation Sans", sans-serif' font-size="14" font-weight="400" fill="#3d4248" text-anchor="middle">07:30</text>
<rect x="1574.92" y="561.3" width="1" height="226.9" fill="rgba(36,41,46,0.11)"/>
<text x="1575.42" y="804.90" font-family='"Liberation Sans", sans-serif' font-size="14" font-weight="400" fill="#3d4248" text-anchor="middle">08:00</text>
<rect x="1645.74" y="561.3" width="1" height="226.9" fill="rgba(36,41,46,0.11)"/>
<text x="1646.24" y="804.90" font-family='"Liberation Sans", sans-serif' font-size="14" font-weight="400" fill="#3d4248" text-anchor="middle">08:30</text>
<rect x="1716.56" y="561.3" width="1" height="226.9" fill="rgba(36,41,46,0.11)"/>
<text x="1717.06" y="804.90" font-family='"Liberation Sans", sans-serif' font-size="14" font-weight="400" fill="#3d4248" text-anchor="middle">09:00</text>
<rect x="1787.38" y="561.3" width="1" height="226.9" fill="rgba(36,41,46,0.11)"/>
<text x="1787.88" y="804.90" font-family='"Liberation Sans", sans-serif' font-size="14" font-weight="400" fill="#3d4248" text-anchor="middle">09:30</text>
<rect x="1858.20" y="561.3" width="1" height="226.9" fill="rgba(36,41,46,0.11)"/>
<text x="1858.70" y="804.90" font-family='"Liberation Sans", sans-serif' font-size="14" font-weight="400" fill="#3d4248" text-anchor="middle">10:00</text>
<rect x="1929.02" y="561.3" width="1" height="226.9" fill="rgba(36,41,46,0.11)"/>
<text x="1929.52" y="804.90" font-family='"Liberation Sans", sans-serif' font-size="14" font-weight="400" fill="#3d4248" text-anchor="middle">10:30</text>
<path d="M1140.70 583.60 L1140.27 583.60 L1169.23 583.60 L1170.98 582.29 L1206.52 582.29 L1208.28 583.60 L1211.79 582.29 L1221.88 582.29 L1224.07 584.48 L1226.27 582.29 L1261.37 582.29 L1263.13 583.60 L1284.19 583.60 L1286.38 582.29 L1288.58 583.60 L1335.97 583.60 L1338.16 582.29 L1357.03 583.60 L1359.66 584.48 L1363.17 582.29 L1391.69 582.29 L1393.89 583.60 L1422.41 582.29 L1424.60 580.97 L1433.38 581.85 L1442.15 580.97 L1450.93 582.29 L1503.58 582.29 L1505.78 583.60 L1537.81 583.60 L1540.88 584.92 L1543.07 582.29 L1594.85 582.29 L1596.61 583.60 L1604.50 583.60 L1616.79 583.60 L1618.55 584.48 L1620.30 582.29 L1640.48 582.29 L1642.68 584.04 L1661.55 582.29 L1679.10 582.29 L1681.29 583.60 L1748.43 583.60 L1750.18 582.29 L1764.66 582.29 L1766.86 583.60 L1775.63 583.60 L1793.18 583.60 L1795.38 584.48 L1806.35 583.60 L1812.93 582.29 L1859.00 582.29 L1861.20 583.60 L1907.27 583.60 L1911.66 584.04 L1929.21 583.60 L1931.40 584.04 L1942.37 583.16 L1946.76 582.29 L1959.92 583.16 L1964.31 582.29 L1970.89 583.60 L1975.28 582.72 L1981.86 584.04 L1988.44 584.92 L1989.50 584.00 L1989.50 783.20 L1140.70 783.20 Z" fill="rgba(86,166,75,0.1)" stroke="none"/>
<path d="M1140.70 737.00 L1140.62 737.73 L1141.66 728.11 L1143.14 730.33 L1145.36 728.85 L1147.13 728.85 L1149.06 745.86 L1150.98 729.59 L1156.45 730.33 L1157.93 749.56 L1160.89 726.63 L1162.81 746.60 L1164.59 739.21 L1168.29 729.59 L1169.77 728.85 L1171.69 745.13 L1174.65 727.37 L1176.72 746.60 L1179.39 744.39 L1182.05 728.85 L1183.82 747.34 L1186.04 729.59 L1189.00 728.11 L1190.93 734.32 L1193.88 719.23 L1195.96 740.24 L1197.88 728.85 L1200.84 730.33 L1203.06 730.33 L1204.54 743.65 L1207.50 742.91 L1211.93 746.60 L1213.41 746.60 L1214.89 728.11 L1217.11 746.60 L1220.07 761.40 L1222.29 730.33 L1225.99 728.85 L1231.17 727.37 L1233.39 731.07 L1237.09 727.37 L1240.05 727.37 L1240.78 736.25 L1244.48 734.77 L1245.96 728.85 L1247.74 746.60 L1249.66 726.63 L1253.36 731.81 L1256.32 746.60 L1260.02 747.34 L1262.24 727.37 L1263.72 730.33 L1266.97 724.41 L1268.90 727.37 L1270.82 747.34 L1273.33 745.13 L1275.55 731.81 L1282.95 728.11 L1289.61 731.07 L1293.31 731.07 L1297.75 728.11 L1302.18 731.07 L1303.66 728.85 L1307.36 728.85 L1311.80 746.60 L1314.02 747.34 L1319.20 739.21 L1320.68 729.59 L1324.38 729.59 L1325.86 738.47 L1328.08 728.85 L1330.59 727.37 L1336.21 732.55 L1339.17 747.34 L1341.39 744.39 L1345.09 745.13 L1346.57 730.33 L1351.75 729.59 L1353.97 745.13 L1356.19 729.59 L1359.89 728.85 L1361.36 728.85 L1362.84 750.30 L1364.32 750.30 L1365.80 725.89 L1370.24 726.63 L1372.46 734.77 L1374.38 725.89 L1379.12 729.59 L1381.78 727.37 L1386.52 738.47 L1389.77 737.28 L1392.43 728.11 L1396.87 758.44 L1400.57 728.85 L1402.79 729.59 L1405.75 750.30 L1407.97 730.33 L1410.19 730.33 L1413.15 727.37 L1417.59 745.13 L1421.28 729.59 L1424.24 722.93 L1427.10 741.43 L1429.62 725.89 L1431.84 747.34 L1434.06 737.73 L1436.27 740.69 L1438.94 746.16 L1442.19 744.09 L1443.67 728.85 L1445.89 726.63 L1448.11 729.59 L1449.59 729.59 L1450.77 747.34 L1452.85 728.41 L1455.51 743.65 L1458.17 746.60 L1459.95 725.89 L1463.65 729.59 L1467.34 731.81 L1470.01 740.24 L1472.52 735.51 L1474.00 726.63 L1475.48 726.63 L1476.96 745.13 L1479.18 744.39 L1482.14 745.13 L1483.91 732.55 L1486.28 728.85 L1488.80 746.60 L1491.02 722.19 L1492.79 750.30 L1495.75 743.65 L1498.41 746.60 L1500.63 759.92 L1502.85 746.60 L1504.33 729.59 L1509.51 730.33 L1511.73 727.37 L1514.69 745.13 L1516.46 731.07 L1518.39 739.21 L1522.09 747.34 L1523.57 727.37 L1526.52 730.33 L1533.92 730.33 L1535.70 745.13 L1539.84 730.33 L1544.28 727.37 L1547.53 727.37 L1549.90 723.67 L1551.68 728.11 L1555.38 729.59 L1556.85 747.34 L1558.78 725.89 L1560.55 725.89 L1563.22 731.81 L1565.73 745.13 L1568.69 724.41 L1570.91 745.13 L1573.87 729.59 L1578.31 730.33 L1580.53 728.85 L1582.75 741.43 L1587.18 725.89 L1590.14 726.63 L1591.92 745.13 L1594.88 723.67 L1596.80 746.60 L1600.50 745.86 L1603.16 746.16 L1604.20 740.24 L1607.90 739.21 L1609.38 728.85 L1610.86 733.29 L1613.82 728.11 L1615.59 747.34 L1617.51 728.85 L1621.21 728.85 L1622.99 738.47 L1624.91 730.33 L1626.39 731.07 L1627.87 746.60 L1630.83 745.13 L1632.31 737.73 L1633.79 737.73 L1635.27 746.60 L1636.75 728.85 L1639.71 739.95 L1641.93 727.37 L1644.15 757.70 L1646.36 742.17 L1648.58 731.81 L1652.28 731.07 L1654.06 721.90 L1655.98 728.11 L1661.90 728.11 L1662.94 746.60 L1665.60 728.85 L1670.04 745.13 L1676.69 745.86 L1679.65 728.85 L1681.87 745.86 L1684.09 756.22 L1686.31 728.85 L1689.27 728.85 L1691.49 738.47 L1693.71 745.13 L1698.15 747.34 L1700.81 727.37 L1703.33 737.73 L1706.28 745.13 L1709.24 736.25 L1713.14 729.59 L1714.62 745.13 L1718.32 744.39 L1720.09 727.37 L1722.01 737.73 L1725.71 731.81 L1727.19 736.25 L1728.97 728.85 L1731.63 736.25 L1733.85 738.47 L1735.33 728.85 L1737.55 728.85 L1739.03 739.21 L1740.51 731.07 L1742.73 746.60 L1744.95 746.60 L1746.43 728.85 L1748.20 736.25 L1750.13 727.37 L1753.08 726.63 L1756.04 729.59 L1759.45 746.60 L1761.96 735.51 L1764.92 727.37 L1770.10 731.07 L1771.87 747.34 L1775.28 732.55 L1778.24 728.11 L1780.75 746.60 L1783.71 726.63 L1786.08 736.25 L1788.59 727.37 L1791.55 728.11 L1793.03 746.60 L1795.55 746.60 L1798.21 725.89 L1800.43 725.89 L1801.91 728.85 L1805.61 729.59 L1807.09 727.37 L1810.78 729.59 L1812.26 744.39 L1814.48 731.07 L1818.92 746.60 L1821.14 729.59 L1824.10 741.43 L1826.32 728.85 L1828.10 735.51 L1830.76 727.37 L1833.72 728.11 L1835.20 745.13 L1837.86 727.37 L1839.93 735.51 L1843.33 735.51 L1847.03 724.41 L1849.25 728.85 L1851.47 731.81 L1854.13 746.60 L1857.39 729.59 L1861.09 749.56 L1863.60 725.89 L1865.97 728.11 L1867.75 735.51 L1870.70 728.85 L1872.92 736.25 L1875.88 755.48 L1878.40 729.59 L1880.32 732.55 L1882.54 725.89 L1885.20 728.85 L1886.98 755.48 L1889.20 738.47 L1891.42 745.13 L1893.64 737.73 L1895.12 737.73 L1897.04 745.13 L1899.11 728.11 L1901.77 745.13 L1903.99 727.37 L1905.47 754.00 L1908.43 745.13 L1910.65 731.07 L1912.87 746.60 L1915.83 728.11 L1918.05 750.30 L1921.01 744.39 L1923.23 734.77 L1925.45 731.81 L1928.41 734.77 L1931.36 744.39 L1934.32 734.77 L1937.28 734.77 L1939.50 730.33 L1941.72 747.34 L1943.94 745.86 L1946.16 723.67 L1947.94 741.43 L1950.60 745.13 L1953.56 747.34 L1955.78 725.15 L1957.70 739.21 L1960.22 728.85 L1963.17 739.95 L1964.65 743.65 L1969.83 745.86 L1972.05 758.44 L1974.27 747.34 L1976.93 728.11 L1979.45 751.78 L1981.37 746.60 L1983.89 728.11 L1986.85 727.37 L1989.07 729.59 L1989.07 783.20 L1140.70 783.20 Z" fill="rgba(224,180,0,0.1)" stroke="none"/>
<path d="M1140.70 583.60 L1140.27 583.60 L1169.23 583.60 L1170.98 582.29 L1206.52 582.29 L1208.28 583.60 L1211.79 582.29 L1221.88 582.29 L1224.07 584.48 L1226.27 582.29 L1261.37 582.29 L1263.13 583.60 L1284.19 583.60 L1286.38 582.29 L1288.58 583.60 L1335.97 583.60 L1338.16 582.29 L1357.03 583.60 L1359.66 584.48 L1363.17 582.29 L1391.69 582.29 L1393.89 583.60 L1422.41 582.29 L1424.60 580.97 L1433.38 581.85 L1442.15 580.97 L1450.93 582.29 L1503.58 582.29 L1505.78 583.60 L1537.81 583.60 L1540.88 584.92 L1543.07 582.29 L1594.85 582.29 L1596.61 583.60 L1604.50 583.60 L1616.79 583.60 L1618.55 584.48 L1620.30 582.29 L1640.48 582.29 L1642.68 584.04 L1661.55 582.29 L1679.10 582.29 L1681.29 583.60 L1748.43 583.60 L1750.18 582.29 L1764.66 582.29 L1766.86 583.60 L1775.63 583.60 L1793.18 583.60 L1795.38 584.48 L1806.35 583.60 L1812.93 582.29 L1859.00 582.29 L1861.20 583.60 L1907.27 583.60 L1911.66 584.04 L1929.21 583.60 L1931.40 584.04 L1942.37 583.16 L1946.76 582.29 L1959.92 583.16 L1964.31 582.29 L1970.89 583.60 L1975.28 582.72 L1981.86 584.04 L1988.44 584.92 L1989.50 584.00" fill="none" stroke="#56a64b" stroke-width="1.3" stroke-linejoin="round"/>
<path d="M1140.70 737.00 L1140.62 737.73 L1141.66 728.11 L1143.14 730.33 L1145.36 728.85 L1147.13 728.85 L1149.06 745.86 L1150.98 729.59 L1156.45 730.33 L1157.93 749.56 L1160.89 726.63 L1162.81 746.60 L1164.59 739.21 L1168.29 729.59 L1169.77 728.85 L1171.69 745.13 L1174.65 727.37 L1176.72 746.60 L1179.39 744.39 L1182.05 728.85 L1183.82 747.34 L1186.04 729.59 L1189.00 728.11 L1190.93 734.32 L1193.88 719.23 L1195.96 740.24 L1197.88 728.85 L1200.84 730.33 L1203.06 730.33 L1204.54 743.65 L1207.50 742.91 L1211.93 746.60 L1213.41 746.60 L1214.89 728.11 L1217.11 746.60 L1220.07 761.40 L1222.29 730.33 L1225.99 728.85 L1231.17 727.37 L1233.39 731.07 L1237.09 727.37 L1240.05 727.37 L1240.78 736.25 L1244.48 734.77 L1245.96 728.85 L1247.74 746.60 L1249.66 726.63 L1253.36 731.81 L1256.32 746.60 L1260.02 747.34 L1262.24 727.37 L1263.72 730.33 L1266.97 724.41 L1268.90 727.37 L1270.82 747.34 L1273.33 745.13 L1275.55 731.81 L1282.95 728.11 L1289.61 731.07 L1293.31 731.07 L1297.75 728.11 L1302.18 731.07 L1303.66 728.85 L1307.36 728.85 L1311.80 746.60 L1314.02 747.34 L1319.20 739.21 L1320.68 729.59 L1324.38 729.59 L1325.86 738.47 L1328.08 728.85 L1330.59 727.37 L1336.21 732.55 L1339.17 747.34 L1341.39 744.39 L1345.09 745.13 L1346.57 730.33 L1351.75 729.59 L1353.97 745.13 L1356.19 729.59 L1359.89 728.85 L1361.36 728.85 L1362.84 750.30 L1364.32 750.30 L1365.80 725.89 L1370.24 726.63 L1372.46 734.77 L1374.38 725.89 L1379.12 729.59 L1381.78 727.37 L1386.52 738.47 L1389.77 737.28 L1392.43 728.11 L1396.87 758.44 L1400.57 728.85 L1402.79 729.59 L1405.75 750.30 L1407.97 730.33 L1410.19 730.33 L1413.15 727.37 L1417.59 745.13 L1421.28 729.59 L1424.24 722.93 L1427.10 741.43 L1429.62 725.89 L1431.84 747.34 L1434.06 737.73 L1436.27 740.69 L1438.94 746.16 L1442.19 744.09 L1443.67 728.85 L1445.89 726.63 L1448.11 729.59 L1449.59 729.59 L1450.77 747.34 L1452.85 728.41 L1455.51 743.65 L1458.17 746.60 L1459.95 725.89 L1463.65 729.59 L1467.34 731.81 L1470.01 740.24 L1472.52 735.51 L1474.00 726.63 L1475.48 726.63 L1476.96 745.13 L1479.18 744.39 L1482.14 745.13 L1483.91 732.55 L1486.28 728.85 L1488.80 746.60 L1491.02 722.19 L1492.79 750.30 L1495.75 743.65 L1498.41 746.60 L1500.63 759.92 L1502.85 746.60 L1504.33 729.59 L1509.51 730.33 L1511.73 727.37 L1514.69 745.13 L1516.46 731.07 L1518.39 739.21 L1522.09 747.34 L1523.57 727.37 L1526.52 730.33 L1533.92 730.33 L1535.70 745.13 L1539.84 730.33 L1544.28 727.37 L1547.53 727.37 L1549.90 723.67 L1551.68 728.11 L1555.38 729.59 L1556.85 747.34 L1558.78 725.89 L1560.55 725.89 L1563.22 731.81 L1565.73 745.13 L1568.69 724.41 L1570.91 745.13 L1573.87 729.59 L1578.31 730.33 L1580.53 728.85 L1582.75 741.43 L1587.18 725.89 L1590.14 726.63 L1591.92 745.13 L1594.88 723.67 L1596.80 746.60 L1600.50 745.86 L1603.16 746.16 L1604.20 740.24 L1607.90 739.21 L1609.38 728.85 L1610.86 733.29 L1613.82 728.11 L1615.59 747.34 L1617.51 728.85 L1621.21 728.85 L1622.99 738.47 L1624.91 730.33 L1626.39 731.07 L1627.87 746.60 L1630.83 745.13 L1632.31 737.73 L1633.79 737.73 L1635.27 746.60 L1636.75 728.85 L1639.71 739.95 L1641.93 727.37 L1644.15 757.70 L1646.36 742.17 L1648.58 731.81 L1652.28 731.07 L1654.06 721.90 L1655.98 728.11 L1661.90 728.11 L1662.94 746.60 L1665.60 728.85 L1670.04 745.13 L1676.69 745.86 L1679.65 728.85 L1681.87 745.86 L1684.09 756.22 L1686.31 728.85 L1689.27 728.85 L1691.49 738.47 L1693.71 745.13 L1698.15 747.34 L1700.81 727.37 L1703.33 737.73 L1706.28 745.13 L1709.24 736.25 L1713.14 729.59 L1714.62 745.13 L1718.32 744.39 L1720.09 727.37 L1722.01 737.73 L1725.71 731.81 L1727.19 736.25 L1728.97 728.85 L1731.63 736.25 L1733.85 738.47 L1735.33 728.85 L1737.55 728.85 L1739.03 739.21 L1740.51 731.07 L1742.73 746.60 L1744.95 746.60 L1746.43 728.85 L1748.20 736.25 L1750.13 727.37 L1753.08 726.63 L1756.04 729.59 L1759.45 746.60 L1761.96 735.51 L1764.92 727.37 L1770.10 731.07 L1771.87 747.34 L1775.28 732.55 L1778.24 728.11 L1780.75 746.60 L1783.71 726.63 L1786.08 736.25 L1788.59 727.37 L1791.55 728.11 L1793.03 746.60 L1795.55 746.60 L1798.21 725.89 L1800.43 725.89 L1801.91 728.85 L1805.61 729.59 L1807.09 727.37 L1810.78 729.59 L1812.26 744.39 L1814.48 731.07 L1818.92 746.60 L1821.14 729.59 L1824.10 741.43 L1826.32 728.85 L1828.10 735.51 L1830.76 727.37 L1833.72 728.11 L1835.20 745.13 L1837.86 727.37 L1839.93 735.51 L1843.33 735.51 L1847.03 724.41 L1849.25 728.85 L1851.47 731.81 L1854.13 746.60 L1857.39 729.59 L1861.09 749.56 L1863.60 725.89 L1865.97 728.11 L1867.75 735.51 L1870.70 728.85 L1872.92 736.25 L1875.88 755.48 L1878.40 729.59 L1880.32 732.55 L1882.54 725.89 L1885.20 728.85 L1886.98 755.48 L1889.20 738.47 L1891.42 745.13 L1893.64 737.73 L1895.12 737.73 L1897.04 745.13 L1899.11 728.11 L1901.77 745.13 L1903.99 727.37 L1905.47 754.00 L1908.43 745.13 L1910.65 731.07 L1912.87 746.60 L1915.83 728.11 L1918.05 750.30 L1921.01 744.39 L1923.23 734.77 L1925.45 731.81 L1928.41 734.77 L1931.36 744.39 L1934.32 734.77 L1937.28 734.77 L1939.50 730.33 L1941.72 747.34 L1943.94 745.86 L1946.16 723.67 L1947.94 741.43 L1950.60 745.13 L1953.56 747.34 L1955.78 725.15 L1957.70 739.21 L1960.22 728.85 L1963.17 739.95 L1964.65 743.65 L1969.83 745.86 L1972.05 758.44 L1974.27 747.34 L1976.93 728.11 L1979.45 751.78 L1981.37 746.60 L1983.89 728.11 L1986.85 727.37 L1989.07 729.59" fill="none" stroke="#e0b400" stroke-width="1.3" stroke-linejoin="round"/>
<rect x="1094.0" y="820.9" width="16.5" height="5" rx="1.2" fill="#56a64b"/>
<text x="1120.30" y="827.80" font-family='"Liberation Sans", sans-serif' font-size="14.8" font-weight="400" fill="#3d4248" text-anchor="start">node-exporter: heap reserved (avg)</text>
<rect x="1361.0" y="820.9" width="16.5" height="5" rx="1.2" fill="#e0b400"/>
<text x="1387.80" y="827.80" font-family='"Liberation Sans", sans-serif' font-size="14.8" font-weight="400" fill="#3d4248" text-anchor="start">node-exporter: heap in use (avg)</text>
<rect x="89.5" y="855.5" width="965" height="355" rx="2.5" fill="#fff" stroke="#e0e2e5" stroke-width="1"/>
<text x="572.00" y="880.80" font-family='"Liberation Sans", sans-serif' font-size="16.7" font-weight="400" fill="#24292e" text-anchor="middle" stroke="#24292e" stroke-width="0.45">Allocation Rate, Bytes</text>
<rect x="97.90" y="860.70" width="2.9" height="2.3" fill="#4a4f55"/>
<path d="M97.00 864.20 H100.30 V869.20 H101.60 V870.80 H96.80 V869.20 H98.20 V865.60 H97.00 Z" fill="#4a4f55"/>
<rect x="163.5" y="956.80" width="851.5" height="1" fill="rgba(36,41,46,0.11)"/>
<text x="156.10" y="961.40" font-family='"Liberation Sans", sans-serif' font-size="14" font-weight="400" fill="#3d4248" text-anchor="end">340 kB/s</text>
<rect x="163.5" y="996.60" width="851.5" height="1" fill="rgba(36,41,46,0.11)"/>
<text x="156.10" y="1001.20" font-family='"Liberation Sans", sans-serif' font-size="14" font-weight="400" fill="#3d4248" text-anchor="end">330 kB/s</text>
<rect x="163.5" y="1036.60" width="851.5" height="1" fill="rgba(36,41,46,0.11)"/>
<text x="156.10" y="1041.20" font-family='"Liberation Sans", sans-serif' font-size="14" font-weight="400" fill="#3d4248" text-anchor="end">320 kB/s</text>
<rect x="163.5" y="1075.90" width="851.5" height="1" fill="rgba(36,41,46,0.11)"/>
<text x="156.10" y="1080.50" font-family='"Liberation Sans", sans-serif' font-size="14" font-weight="400" fill="#3d4248" text-anchor="end">310 kB/s</text>
<rect x="163.5" y="1115.70" width="851.5" height="1" fill="rgba(36,41,46,0.11)"/>
<text x="156.10" y="1120.30" font-family='"Liberation Sans", sans-serif' font-size="14" font-weight="400" fill="#3d4248" text-anchor="end">300 kB/s</text>
<rect x="178.80" y="926.2" width="1" height="226.9" fill="rgba(36,41,46,0.11)"/>
<text x="179.30" y="1169.40" font-family='"Liberation Sans", sans-serif' font-size="14" font-weight="400" fill="#3d4248" text-anchor="middle">05:00</text>
<rect x="249.29" y="926.2" width="1" height="226.9" fill="rgba(36,41,46,0.11)"/>
<text x="249.79" y="1169.40" font-family='"Liberation Sans", sans-serif' font-size="14" font-weight="400" fill="#3d4248" text-anchor="middle">05:30</text>
<rect x="319.78" y="926.2" width="1" height="226.9" fill="rgba(36,41,46,0.11)"/>
<text x="320.28" y="1169.40" font-family='"Liberation Sans", sans-serif' font-size="14" font-weight="400" fill="#3d4248" text-anchor="middle">06:00</text>
<rect x="390.27" y="926.2" width="1" height="226.9" fill="rgba(36,41,46,0.11)"/>
<text x="390.77" y="1169.40" font-family='"Liberation Sans", sans-serif' font-size="14" font-weight="400" fill="#3d4248" text-anchor="middle">06:30</text>
<rect x="460.76" y="926.2" width="1" height="226.9" fill="rgba(36,41,46,0.11)"/>
<text x="461.26" y="1169.40" font-family='"Liberation Sans", sans-serif' font-size="14" font-weight="400" fill="#3d4248" text-anchor="middle">07:00</text>
<rect x="531.25" y="926.2" width="1" height="226.9" fill="rgba(36,41,46,0.11)"/>
<text x="531.75" y="1169.40" font-family='"Liberation Sans", sans-serif' font-size="14" font-weight="400" fill="#3d4248" text-anchor="middle">07:30</text>
<rect x="601.74" y="926.2" width="1" height="226.9" fill="rgba(36,41,46,0.11)"/>
<text x="602.24" y="1169.40" font-family='"Liberation Sans", sans-serif' font-size="14" font-weight="400" fill="#3d4248" text-anchor="middle">08:00</text>
<rect x="672.23" y="926.2" width="1" height="226.9" fill="rgba(36,41,46,0.11)"/>
<text x="672.73" y="1169.40" font-family='"Liberation Sans", sans-serif' font-size="14" font-weight="400" fill="#3d4248" text-anchor="middle">08:30</text>
<rect x="742.72" y="926.2" width="1" height="226.9" fill="rgba(36,41,46,0.11)"/>
<text x="743.22" y="1169.40" font-family='"Liberation Sans", sans-serif' font-size="14" font-weight="400" fill="#3d4248" text-anchor="middle">09:00</text>
<rect x="813.21" y="926.2" width="1" height="226.9" fill="rgba(36,41,46,0.11)"/>
<text x="813.71" y="1169.40" font-family='"Liberation Sans", sans-serif' font-size="14" font-weight="400" fill="#3d4248" text-anchor="middle">09:30</text>
<rect x="883.70" y="926.2" width="1" height="226.9" fill="rgba(36,41,46,0.11)"/>
<text x="884.20" y="1169.40" font-family='"Liberation Sans", sans-serif' font-size="14" font-weight="400" fill="#3d4248" text-anchor="middle">10:00</text>
<rect x="954.19" y="926.2" width="1" height="226.9" fill="rgba(36,41,46,0.11)"/>
<text x="954.69" y="1169.40" font-family='"Liberation Sans", sans-serif' font-size="14" font-weight="400" fill="#3d4248" text-anchor="middle">10:30</text>
<path d="M169.10 949.50 L168.40 949.10 L173.00 947.60 L176.80 952.20 L184.50 952.70 L186.00 1030.30 L189.10 1027.20 L195.20 1030.30 L203.60 1024.10 L204.40 949.10 L205.90 949.90 L208.20 954.50 L211.30 955.30 L216.60 950.70 L220.50 949.90 L222.00 955.30 L223.50 1027.20 L228.90 1026.40 L231.20 1020.30 L232.70 1037.90 L236.50 1041.00 L241.10 1045.60 L241.90 956.80 L246.50 955.30 L247.60 1028.00 L254.90 1027.20 L255.70 951.40 L261.00 951.40 L264.10 954.50 L267.90 952.70 L268.70 1019.50 L271.70 1020.30 L274.00 1119.80 L276.30 1119.80 L277.90 1052.50 L282.50 1050.20 L282.50 950.70 L290.10 952.70 L297.80 950.20 L299.30 955.30 L303.90 957.60 L313.10 949.90 L328.40 952.70 L329.10 1008.80 L334.50 1013.40 L338.30 1012.70 L338.30 957.60 L343.70 954.50 L351.30 952.20 L357.50 953.70 L365.10 947.10 L372.80 951.40 L375.80 956.00 L382.00 955.30 L389.60 953.70 L390.40 1114.40 L396.50 1112.20 L399.50 946.10 L403.40 945.30 L408.00 946.80 L411.80 953.00 L421.70 951.40 L423.30 1060.10 L427.90 1061.60 L432.50 1055.50 L441.60 1058.60 L442.40 955.30 L450.00 949.90 L459.20 955.30 L463.80 953.00 L473.00 959.80 L482.10 953.00 L486.70 948.10 L490.60 948.40 L494.40 957.60 L500.50 956.00 L505.10 950.20 L514.30 952.20 L518.90 956.00 L519.60 1038.70 L525.00 1031.00 L526.50 1098.40 L528.80 1098.40 L529.60 1013.40 L532.70 1020.30 L535.70 1020.30 L536.50 953.00 L546.40 952.70 L551.00 956.80 L560.20 951.40 L566.30 953.00 L567.10 1036.40 L570.90 1037.10 L575.50 1036.40 L576.30 948.40 L579.30 948.40 L580.90 1013.40 L583.20 1013.40 L583.20 1079.20 L589.30 1082.30 L590.80 1019.50 L592.40 955.30 L603.10 951.40 L610.70 950.70 L615.30 953.70 L623.00 949.90 L626.80 954.50 L627.60 1042.50 L631.40 1044.00 L636.70 1041.70 L637.50 953.70 L640.60 953.70 L642.10 1032.60 L650.50 1025.70 L651.70 947.60 L658.20 955.30 L665.80 950.70 L669.70 951.40 L670.40 1015.70 L673.50 1012.70 L678.10 1016.50 L679.60 951.40 L687.30 953.70 L701.00 955.30 L705.60 951.40 L707.90 1030.30 L710.20 1125.20 L716.30 1128.20 L717.90 1047.10 L719.40 953.00 L722.50 950.70 L730.10 954.50 L740.80 950.70 L743.10 1036.40 L746.20 1039.40 L747.70 1099.10 L751.50 1101.40 L753.00 1016.50 L755.30 1012.70 L757.60 948.40 L763.00 949.90 L766.80 956.00 L776.70 952.20 L784.40 952.70 L785.60 1040.20 L789.00 1035.60 L793.60 1037.90 L794.80 949.10 L800.50 953.70 L801.20 1077.70 L810.40 1078.50 L811.90 953.00 L823.40 956.80 L833.40 949.90 L847.10 956.80 L860.90 949.10 L865.50 954.50 L874.70 947.60 L885.40 953.00 L886.20 1047.10 L894.60 1047.90 L895.40 952.20 L900.00 954.50 L900.70 1031.00 L908.40 1035.60 L910.70 1025.70 L912.20 1025.70 L913.00 1116.70 L919.90 1116.70 L920.30 1052.50 L921.40 962.10 L929.80 962.90 L931.30 1072.40 L939.80 1070.80 L941.30 1039.40 L942.80 1116.70 L948.90 1116.70 L950.50 1035.60 L952.80 955.30 L957.40 949.90 L966.50 960.60 L978.80 956.80 L986.40 959.80 L995.60 958.30 L997.20 1025.70 L1006.30 1018.00 L1007.10 953.70 L1010.20 954.50 L1010.90 960.60 L1015.50 963.70 L1015.50 1148.10 L169.10 1148.10 Z" fill="rgba(86,166,75,0.1)" stroke="none"/>
<path d="M169.10 949.50 L168.40 949.10 L173.00 947.60 L176.80 952.20 L184.50 952.70 L186.00 1030.30 L189.10 1027.20 L195.20 1030.30 L203.60 1024.10 L204.40 949.10 L205.90 949.90 L208.20 954.50 L211.30 955.30 L216.60 950.70 L220.50 949.90 L222.00 955.30 L223.50 1027.20 L228.90 1026.40 L231.20 1020.30 L232.70 1037.90 L236.50 1041.00 L241.10 1045.60 L241.90 956.80 L246.50 955.30 L247.60 1028.00 L254.90 1027.20 L255.70 951.40 L261.00 951.40 L264.10 954.50 L267.90 952.70 L268.70 1019.50 L271.70 1020.30 L274.00 1119.80 L276.30 1119.80 L277.90 1052.50 L282.50 1050.20 L282.50 950.70 L290.10 952.70 L297.80 950.20 L299.30 955.30 L303.90 957.60 L313.10 949.90 L328.40 952.70 L329.10 1008.80 L334.50 1013.40 L338.30 1012.70 L338.30 957.60 L343.70 954.50 L351.30 952.20 L357.50 953.70 L365.10 947.10 L372.80 951.40 L375.80 956.00 L382.00 955.30 L389.60 953.70 L390.40 1114.40 L396.50 1112.20 L399.50 946.10 L403.40 945.30 L408.00 946.80 L411.80 953.00 L421.70 951.40 L423.30 1060.10 L427.90 1061.60 L432.50 1055.50 L441.60 1058.60 L442.40 955.30 L450.00 949.90 L459.20 955.30 L463.80 953.00 L473.00 959.80 L482.10 953.00 L486.70 948.10 L490.60 948.40 L494.40 957.60 L500.50 956.00 L505.10 950.20 L514.30 952.20 L518.90 956.00 L519.60 1038.70 L525.00 1031.00 L526.50 1098.40 L528.80 1098.40 L529.60 1013.40 L532.70 1020.30 L535.70 1020.30 L536.50 953.00 L546.40 952.70 L551.00 956.80 L560.20 951.40 L566.30 953.00 L567.10 1036.40 L570.90 1037.10 L575.50 1036.40 L576.30 948.40 L579.30 948.40 L580.90 1013.40 L583.20 1013.40 L583.20 1079.20 L589.30 1082.30 L590.80 1019.50 L592.40 955.30 L603.10 951.40 L610.70 950.70 L615.30 953.70 L623.00 949.90 L626.80 954.50 L627.60 1042.50 L631.40 1044.00 L636.70 1041.70 L637.50 953.70 L640.60 953.70 L642.10 1032.60 L650.50 1025.70 L651.70 947.60 L658.20 955.30 L665.80 950.70 L669.70 951.40 L670.40 1015.70 L673.50 1012.70 L678.10 1016.50 L679.60 951.40 L687.30 953.70 L701.00 955.30 L705.60 951.40 L707.90 1030.30 L710.20 1125.20 L716.30 1128.20 L717.90 1047.10 L719.40 953.00 L722.50 950.70 L730.10 954.50 L740.80 950.70 L743.10 1036.40 L746.20 1039.40 L747.70 1099.10 L751.50 1101.40 L753.00 1016.50 L755.30 1012.70 L757.60 948.40 L763.00 949.90 L766.80 956.00 L776.70 952.20 L784.40 952.70 L785.60 1040.20 L789.00 1035.60 L793.60 1037.90 L794.80 949.10 L800.50 953.70 L801.20 1077.70 L810.40 1078.50 L811.90 953.00 L823.40 956.80 L833.40 949.90 L847.10 956.80 L860.90 949.10 L865.50 954.50 L874.70 947.60 L885.40 953.00 L886.20 1047.10 L894.60 1047.90 L895.40 952.20 L900.00 954.50 L900.70 1031.00 L908.40 1035.60 L910.70 1025.70 L912.20 1025.70 L913.00 1116.70 L919.90 1116.70 L920.30 1052.50 L921.40 962.10 L929.80 962.90 L931.30 1072.40 L939.80 1070.80 L941.30 1039.40 L942.80 1116.70 L948.90 1116.70 L950.50 1035.60 L952.80 955.30 L957.40 949.90 L966.50 960.60 L978.80 956.80 L986.40 959.80 L995.60 958.30 L997.20 1025.70 L1006.30 1018.00 L1007.10 953.70 L1010.20 954.50 L1010.90 960.60 L1015.50 963.70" fill="none" stroke="#56a64b" stroke-width="1.3" stroke-linejoin="round"/>
<g fill="#56a64b"><circle cx="168.4" cy="949.1" r="2.6"/><circle cx="173.0" cy="947.6" r="2.6"/><circle cx="176.8" cy="952.2" r="2.6"/><circle cx="179.4" cy="952.4" r="2.6"/><circle cx="181.9" cy="952.5" r="2.6"/><circle cx="184.5" cy="952.7" r="2.6"/><circle cx="186.0" cy="1030.3" r="2.6"/><circle cx="189.1" cy="1027.2" r="2.6"/><circle cx="192.1" cy="1028.8" r="2.6"/><circle cx="195.2" cy="1030.3" r="2.6"/><circle cx="198.0" cy="1028.2" r="2.6"/><circle cx="200.8" cy="1026.2" r="2.6"/><circle cx="203.6" cy="1024.1" r="2.6"/><circle cx="204.4" cy="949.1" r="2.6"/><circle cx="205.9" cy="949.9" r="2.6"/><circle cx="208.2" cy="954.5" r="2.6"/><circle cx="211.3" cy="955.3" r="2.6"/><circle cx="213.9" cy="953.0" r="2.6"/><circle cx="216.6" cy="950.7" r="2.6"/><circle cx="220.5" cy="949.9" r="2.6"/><circle cx="222.0" cy="955.3" r="2.6"/><circle cx="223.5" cy="1027.2" r="2.6"/><circle cx="226.2" cy="1026.8" r="2.6"/><circle cx="228.9" cy="1026.4" r="2.6"/><circle cx="231.2" cy="1020.3" r="2.6"/><circle cx="232.7" cy="1037.9" r="2.6"/><circle cx="236.5" cy="1041.0" r="2.6"/><circle cx="241.1" cy="1045.6" r="2.6"/><circle cx="241.9" cy="956.8" r="2.6"/><circle cx="246.5" cy="955.3" r="2.6"/><circle cx="247.6" cy="1028.0" r="2.6"/><circle cx="250.0" cy="1027.7" r="2.6"/><circle cx="252.5" cy="1027.5" r="2.6"/><circle cx="254.9" cy="1027.2" r="2.6"/><circle cx="255.7" cy="951.4" r="2.6"/><circle cx="258.4" cy="951.4" r="2.6"/><circle cx="261.0" cy="951.4" r="2.6"/><circle cx="264.1" cy="954.5" r="2.6"/><circle cx="267.9" cy="952.7" r="2.6"/><circle cx="268.7" cy="1019.5" r="2.6"/><circle cx="271.7" cy="1020.3" r="2.6"/><circle cx="274.0" cy="1119.8" r="2.6"/><circle cx="276.3" cy="1119.8" r="2.6"/><circle cx="277.9" cy="1052.5" r="2.6"/><circle cx="280.2" cy="1051.3" r="2.6"/><circle cx="282.5" cy="1050.2" r="2.6"/><circle cx="282.5" cy="950.7" r="2.6"/><circle cx="285.0" cy="951.4" r="2.6"/><circle cx="287.6" cy="952.0" r="2.6"/><circle cx="290.1" cy="952.7" r="2.6"/><circle cx="292.7" cy="951.9" r="2.6"/><circle cx="295.2" cy="951.0" r="2.6"/><circle cx="297.8" cy="950.2" r="2.6"/><circle cx="299.3" cy="955.3" r="2.6"/><circle cx="303.9" cy="957.6" r="2.6"/><circle cx="306.2" cy="955.7" r="2.6"/><circle cx="308.5" cy="953.8" r="2.6"/><circle cx="310.8" cy="951.8" r="2.6"/><circle cx="313.1" cy="949.9" r="2.6"/><circle cx="315.7" cy="950.4" r="2.6"/><circle cx="318.2" cy="950.8" r="2.6"/><circle cx="320.8" cy="951.3" r="2.6"/><circle cx="323.3" cy="951.8" r="2.6"/><circle cx="325.8" cy="952.2" r="2.6"/><circle cx="328.4" cy="952.7" r="2.6"/><circle cx="329.1" cy="1008.8" r="2.6"/><circle cx="331.8" cy="1011.1" r="2.6"/><circle cx="334.5" cy="1013.4" r="2.6"/><circle cx="338.3" cy="1012.7" r="2.6"/><circle cx="338.3" cy="957.6" r="2.6"/><circle cx="341.0" cy="956.0" r="2.6"/><circle cx="343.7" cy="954.5" r="2.6"/><circle cx="346.2" cy="953.7" r="2.6"/><circle cx="348.8" cy="953.0" r="2.6"/><circle cx="351.3" cy="952.2" r="2.6"/><circle cx="354.4" cy="953.0" r="2.6"/><circle cx="357.5" cy="953.7" r="2.6"/><circle cx="360.0" cy="951.5" r="2.6"/><circle cx="362.6" cy="949.3" r="2.6"/><circle cx="365.1" cy="947.1" r="2.6"/><circle cx="367.7" cy="948.5" r="2.6"/><circle cx="370.2" cy="950.0" r="2.6"/><circle cx="372.8" cy="951.4" r="2.6"/><circle cx="375.8" cy="956.0" r="2.6"/><circle cx="378.9" cy="955.6" r="2.6"/><circle cx="382.0" cy="955.3" r="2.6"/><circle cx="384.5" cy="954.8" r="2.6"/><circle cx="387.1" cy="954.2" r="2.6"/><circle cx="389.6" cy="953.7" r="2.6"/><circle cx="390.4" cy="1114.4" r="2.6"/><circle cx="393.4" cy="1113.3" r="2.6"/><circle cx="396.5" cy="1112.2" r="2.6"/><circle cx="399.5" cy="946.1" r="2.6"/><circle cx="403.4" cy="945.3" r="2.6"/><circle cx="405.7" cy="946.0" r="2.6"/><circle cx="408.0" cy="946.8" r="2.6"/><circle cx="411.8" cy="953.0" r="2.6"/><circle cx="414.3" cy="952.6" r="2.6"/><circle cx="416.8" cy="952.2" r="2.6"/><circle cx="419.2" cy="951.8" r="2.6"/><circle cx="421.7" cy="951.4" r="2.6"/><circle cx="423.3" cy="1060.1" r="2.6"/><circle cx="427.9" cy="1061.6" r="2.6"/><circle cx="430.2" cy="1058.5" r="2.6"/><circle cx="432.5" cy="1055.5" r="2.6"/><circle cx="435.5" cy="1056.5" r="2.6"/><circle cx="438.6" cy="1057.6" r="2.6"/><circle cx="441.6" cy="1058.6" r="2.6"/><circle cx="442.4" cy="955.3" r="2.6"/><circle cx="444.9" cy="953.5" r="2.6"/><circle cx="447.5" cy="951.7" r="2.6"/><circle cx="450.0" cy="949.9" r="2.6"/><circle cx="453.1" cy="951.7" r="2.6"/><circle cx="456.1" cy="953.5" r="2.6"/><circle cx="459.2" cy="955.3" r="2.6"/><circle cx="461.5" cy="954.1" r="2.6"/><circle cx="463.8" cy="953.0" r="2.6"/><circle cx="466.9" cy="955.3" r="2.6"/><circle cx="469.9" cy="957.5" r="2.6"/><circle cx="473.0" cy="959.8" r="2.6"/><circle cx="476.0" cy="957.5" r="2.6"/><circle cx="479.1" cy="955.3" r="2.6"/><circle cx="482.1" cy="953.0" r="2.6"/><circle cx="486.7" cy="948.1" r="2.6"/><circle cx="490.6" cy="948.4" r="2.6"/><circle cx="494.4" cy="957.6" r="2.6"/><circle cx="497.4" cy="956.8" r="2.6"/><circle cx="500.5" cy="956.0" r="2.6"/><circle cx="502.8" cy="953.1" r="2.6"/><circle cx="505.1" cy="950.2" r="2.6"/><circle cx="508.2" cy="950.9" r="2.6"/><circle cx="511.2" cy="951.5" r="2.6"/><circle cx="514.3" cy="952.2" r="2.6"/><circle cx="516.6" cy="954.1" r="2.6"/><circle cx="518.9" cy="956.0" r="2.6"/><circle cx="519.6" cy="1038.7" r="2.6"/><circle cx="522.3" cy="1034.8" r="2.6"/><circle cx="525.0" cy="1031.0" r="2.6"/><circle cx="526.5" cy="1098.4" r="2.6"/><circle cx="528.8" cy="1098.4" r="2.6"/><circle cx="529.6" cy="1013.4" r="2.6"/><circle cx="532.7" cy="1020.3" r="2.6"/><circle cx="535.7" cy="1020.3" r="2.6"/><circle cx="536.5" cy="953.0" r="2.6"/><circle cx="539.0" cy="952.9" r="2.6"/><circle cx="541.5" cy="952.9" r="2.6"/><circle cx="543.9" cy="952.8" r="2.6"/><circle cx="546.4" cy="952.7" r="2.6"/><circle cx="548.7" cy="954.8" r="2.6"/><circle cx="551.0" cy="956.8" r="2.6"/><circle cx="553.3" cy="955.4" r="2.6"/><circle cx="555.6" cy="954.1" r="2.6"/><circle cx="557.9" cy="952.8" r="2.6"/><circle cx="560.2" cy="951.4" r="2.6"/><circle cx="563.2" cy="952.2" r="2.6"/><circle cx="566.3" cy="953.0" r="2.6"/><circle cx="567.1" cy="1036.4" r="2.6"/><circle cx="570.9" cy="1037.1" r="2.6"/><circle cx="573.2" cy="1036.8" r="2.6"/><circle cx="575.5" cy="1036.4" r="2.6"/><circle cx="576.3" cy="948.4" r="2.6"/><circle cx="579.3" cy="948.4" r="2.6"/><circle cx="580.9" cy="1013.4" r="2.6"/><circle cx="583.2" cy="1013.4" r="2.6"/><circle cx="583.2" cy="1079.2" r="2.6"/><circle cx="586.2" cy="1080.8" r="2.6"/><circle cx="589.3" cy="1082.3" r="2.6"/><circle cx="590.8" cy="1019.5" r="2.6"/><circle cx="592.4" cy="955.3" r="2.6"/><circle cx="595.1" cy="954.3" r="2.6"/><circle cx="597.8" cy="953.3" r="2.6"/><circle cx="600.4" cy="952.4" r="2.6"/><circle cx="603.1" cy="951.4" r="2.6"/><circle cx="605.6" cy="951.2" r="2.6"/><circle cx="608.2" cy="950.9" r="2.6"/><circle cx="610.7" cy="950.7" r="2.6"/><circle cx="615.3" cy="953.7" r="2.6"/><circle cx="617.9" cy="952.4" r="2.6"/><circle cx="620.4" cy="951.2" r="2.6"/><circle cx="623.0" cy="949.9" r="2.6"/><circle cx="626.8" cy="954.5" r="2.6"/><circle cx="627.6" cy="1042.5" r="2.6"/><circle cx="631.4" cy="1044.0" r="2.6"/><circle cx="634.0" cy="1042.8" r="2.6"/><circle cx="636.7" cy="1041.7" r="2.6"/><circle cx="637.5" cy="953.7" r="2.6"/><circle cx="640.6" cy="953.7" r="2.6"/><circle cx="642.1" cy="1032.6" r="2.6"/><circle cx="644.9" cy="1030.3" r="2.6"/><circle cx="647.7" cy="1028.0" r="2.6"/><circle cx="650.5" cy="1025.7" r="2.6"/><circle cx="651.7" cy="947.6" r="2.6"/><circle cx="655.0" cy="951.5" r="2.6"/><circle cx="658.2" cy="955.3" r="2.6"/><circle cx="660.7" cy="953.8" r="2.6"/><circle cx="663.3" cy="952.2" r="2.6"/><circle cx="665.8" cy="950.7" r="2.6"/><circle cx="669.7" cy="951.4" r="2.6"/><circle cx="670.4" cy="1015.7" r="2.6"/><circle cx="673.5" cy="1012.7" r="2.6"/><circle cx="675.8" cy="1014.6" r="2.6"/><circle cx="678.1" cy="1016.5" r="2.6"/><circle cx="679.6" cy="951.4" r="2.6"/><circle cx="682.2" cy="952.2" r="2.6"/><circle cx="684.7" cy="952.9" r="2.6"/><circle cx="687.3" cy="953.7" r="2.6"/><circle cx="690.0" cy="954.0" r="2.6"/><circle cx="692.8" cy="954.3" r="2.6"/><circle cx="695.5" cy="954.7" r="2.6"/><circle cx="698.3" cy="955.0" r="2.6"/><circle cx="701.0" cy="955.3" r="2.6"/><circle cx="703.3" cy="953.3" r="2.6"/><circle cx="705.6" cy="951.4" r="2.6"/><circle cx="707.9" cy="1030.3" r="2.6"/><circle cx="710.2" cy="1125.2" r="2.6"/><circle cx="713.2" cy="1126.7" r="2.6"/><circle cx="716.3" cy="1128.2" r="2.6"/><circle cx="717.9" cy="1047.1" r="2.6"/><circle cx="719.4" cy="953.0" r="2.6"/><circle cx="722.5" cy="950.7" r="2.6"/><circle cx="725.0" cy="952.0" r="2.6"/><circle cx="727.6" cy="953.2" r="2.6"/><circle cx="730.1" cy="954.5" r="2.6"/><circle cx="732.8" cy="953.5" r="2.6"/><circle cx="735.5" cy="952.6" r="2.6"/><circle cx="738.1" cy="951.7" r="2.6"/><circle cx="740.8" cy="950.7" r="2.6"/><circle cx="743.1" cy="1036.4" r="2.6"/><circle cx="746.2" cy="1039.4" r="2.6"/><circle cx="747.7" cy="1099.1" r="2.6"/><circle cx="751.5" cy="1101.4" r="2.6"/><circle cx="753.0" cy="1016.5" r="2.6"/><circle cx="755.3" cy="1012.7" r="2.6"/><circle cx="757.6" cy="948.4" r="2.6"/><circle cx="760.3" cy="949.1" r="2.6"/><circle cx="763.0" cy="949.9" r="2.6"/><circle cx="766.8" cy="956.0" r="2.6"/><circle cx="769.3" cy="955.0" r="2.6"/><circle cx="771.8" cy="954.1" r="2.6"/><circle cx="774.2" cy="953.2" r="2.6"/><circle cx="776.7" cy="952.2" r="2.6"/><circle cx="779.3" cy="952.4" r="2.6"/><circle cx="781.8" cy="952.5" r="2.6"/><circle cx="784.4" cy="952.7" r="2.6"/><circle cx="785.6" cy="1040.2" r="2.6"/><circle cx="789.0" cy="1035.6" r="2.6"/><circle cx="791.3" cy="1036.8" r="2.6"/><circle cx="793.6" cy="1037.9" r="2.6"/><circle cx="794.8" cy="949.1" r="2.6"/><circle cx="797.6" cy="951.4" r="2.6"/><circle cx="800.5" cy="953.7" r="2.6"/><circle cx="801.2" cy="1077.7" r="2.6"/><circle cx="804.3" cy="1078.0" r="2.6"/><circle cx="807.3" cy="1078.2" r="2.6"/><circle cx="810.4" cy="1078.5" r="2.6"/><circle cx="811.9" cy="953.0" r="2.6"/><circle cx="814.2" cy="953.8" r="2.6"/><circle cx="816.5" cy="954.5" r="2.6"/><circle cx="818.8" cy="955.3" r="2.6"/><circle cx="821.1" cy="956.0" r="2.6"/><circle cx="823.4" cy="956.8" r="2.6"/><circle cx="825.9" cy="955.1" r="2.6"/><circle cx="828.4" cy="953.3" r="2.6"/><circle cx="830.9" cy="951.6" r="2.6"/><circle cx="833.4" cy="949.9" r="2.6"/><circle cx="836.1" cy="951.3" r="2.6"/><circle cx="838.9" cy="952.7" r="2.6"/><circle cx="841.6" cy="954.0" r="2.6"/><circle cx="844.4" cy="955.4" r="2.6"/><circle cx="847.1" cy="956.8" r="2.6"/><circle cx="849.9" cy="955.3" r="2.6"/><circle cx="852.6" cy="953.7" r="2.6"/><circle cx="855.4" cy="952.2" r="2.6"/><circle cx="858.1" cy="950.6" r="2.6"/><circle cx="860.9" cy="949.1" r="2.6"/><circle cx="863.2" cy="951.8" r="2.6"/><circle cx="865.5" cy="954.5" r="2.6"/><circle cx="867.8" cy="952.8" r="2.6"/><circle cx="870.1" cy="951.0" r="2.6"/><circle cx="872.4" cy="949.3" r="2.6"/><circle cx="874.7" cy="947.6" r="2.6"/><circle cx="877.4" cy="949.0" r="2.6"/><circle cx="880.0" cy="950.3" r="2.6"/><circle cx="882.7" cy="951.6" r="2.6"/><circle cx="885.4" cy="953.0" r="2.6"/><circle cx="886.2" cy="1047.1" r="2.6"/><circle cx="889.0" cy="1047.4" r="2.6"/><circle cx="891.8" cy="1047.6" r="2.6"/><circle cx="894.6" cy="1047.9" r="2.6"/><circle cx="895.4" cy="952.2" r="2.6"/><circle cx="897.7" cy="953.4" r="2.6"/><circle cx="900.0" cy="954.5" r="2.6"/><circle cx="900.7" cy="1031.0" r="2.6"/><circle cx="903.3" cy="1032.5" r="2.6"/><circle cx="905.8" cy="1034.1" r="2.6"/><circle cx="908.4" cy="1035.6" r="2.6"/><circle cx="910.7" cy="1025.7" r="2.6"/><circle cx="912.2" cy="1025.7" r="2.6"/><circle cx="913.0" cy="1116.7" r="2.6"/><circle cx="916.5" cy="1116.7" r="2.6"/><circle cx="919.9" cy="1116.7" r="2.6"/><circle cx="920.3" cy="1052.5" r="2.6"/><circle cx="921.4" cy="962.1" r="2.6"/><circle cx="924.2" cy="962.4" r="2.6"/><circle cx="927.0" cy="962.6" r="2.6"/><circle cx="929.8" cy="962.9" r="2.6"/><circle cx="931.3" cy="1072.4" r="2.6"/><circle cx="934.1" cy="1071.9" r="2.6"/><circle cx="937.0" cy="1071.3" r="2.6"/><circle cx="939.8" cy="1070.8" r="2.6"/><circle cx="941.3" cy="1039.4" r="2.6"/><circle cx="942.8" cy="1116.7" r="2.6"/><circle cx="945.8" cy="1116.7" r="2.6"/><circle cx="948.9" cy="1116.7" r="2.6"/><circle cx="950.5" cy="1035.6" r="2.6"/><circle cx="952.8" cy="955.3" r="2.6"/><circle cx="955.1" cy="952.6" r="2.6"/><circle cx="957.4" cy="949.9" r="2.6"/><circle cx="960.4" cy="953.5" r="2.6"/><circle cx="963.5" cy="957.0" r="2.6"/><circle cx="966.5" cy="960.6" r="2.6"/><circle cx="969.0" cy="959.8" r="2.6"/><circle cx="971.4" cy="959.1" r="2.6"/><circle cx="973.9" cy="958.3" r="2.6"/><circle cx="976.3" cy="957.6" r="2.6"/><circle cx="978.8" cy="956.8" r="2.6"/><circle cx="981.3" cy="957.8" r="2.6"/><circle cx="983.9" cy="958.8" r="2.6"/><circle cx="986.4" cy="959.8" r="2.6"/><circle cx="988.7" cy="959.4" r="2.6"/><circle cx="991.0" cy="959.0" r="2.6"/><circle cx="993.3" cy="958.7" r="2.6"/><circle cx="995.6" cy="958.3" r="2.6"/><circle cx="997.2" cy="1025.7" r="2.6"/><circle cx="1000.2" cy="1023.1" r="2.6"/><circle cx="1003.3" cy="1020.6" r="2.6"/><circle cx="1006.3" cy="1018.0" r="2.6"/><circle cx="1007.1" cy="953.7" r="2.6"/><circle cx="1010.2" cy="954.5" r="2.6"/><circle cx="1010.9" cy="960.6" r="2.6"/><circle cx="1013.2" cy="962.2" r="2.6"/><circle cx="1015.5" cy="963.7" r="2.6"/></g>
<rect x="119.0" y="1185.4" width="16.5" height="5" rx="1.2" fill="#56a64b"/>
<text x="145.60" y="1192.30" font-family='"Liberation Sans", sans-serif' font-size="14.8" font-weight="400" fill="#3d4248" text-anchor="start">node-exporter</text>
<rect x="1064.5" y="855.5" width="965" height="355" rx="2.5" fill="#fff" stroke="#e0e2e5" stroke-width="1"/>
<text x="1547.00" y="880.80" font-family='"Liberation Sans", sans-serif' font-size="16.7" font-weight="400" fill="#24292e" text-anchor="middle" stroke="#24292e" stroke-width="0.45">Heap Object Allocation Rate</text>
<rect x="1072.90" y="860.70" width="2.9" height="2.3" fill="#4a4f55"/>
<path d="M1072.00 864.20 H1075.30 V869.20 H1076.60 V870.80 H1071.80 V869.20 H1073.20 V865.60 H1072.00 Z" fill="#4a4f55"/>
<rect x="1122.3" y="925.80" width="867.2" height="1" fill="rgba(36,41,46,0.11)"/>
<text x="1115.40" y="930.40" font-family='"Liberation Sans", sans-serif' font-size="14" font-weight="400" fill="#3d4248" text-anchor="end">5.40 K</text>
<rect x="1122.3" y="963.80" width="867.2" height="1" fill="rgba(36,41,46,0.11)"/>
<text x="1115.40" y="968.40" font-family='"Liberation Sans", sans-serif' font-size="14" font-weight="400" fill="#3d4248" text-anchor="end">5.20 K</text>
<rect x="1122.3" y="1002.00" width="867.2" height="1" fill="rgba(36,41,46,0.11)"/>
<text x="1115.40" y="1006.60" font-family='"Liberation Sans", sans-serif' font-size="14" font-weight="400" fill="#3d4248" text-anchor="end">5 K</text>
<rect x="1122.3" y="1039.90" width="867.2" height="1" fill="rgba(36,41,46,0.11)"/>
<text x="1115.40" y="1044.50" font-family='"Liberation Sans", sans-serif' font-size="14" font-weight="400" fill="#3d4248" text-anchor="end">4.80 K</text>
<rect x="1122.3" y="1077.90" width="867.2" height="1" fill="rgba(36,41,46,0.11)"/>
<text x="1115.40" y="1082.50" font-family='"Liberation Sans", sans-serif' font-size="14" font-weight="400" fill="#3d4248" text-anchor="end">4.60 K</text>
<rect x="1122.3" y="1115.90" width="867.2" height="1" fill="rgba(36,41,46,0.11)"/>
<text x="1115.40" y="1120.50" font-family='"Liberation Sans", sans-serif' font-size="14" font-weight="400" fill="#3d4248" text-anchor="end">4.40 K</text>
<rect x="1136.70" y="926.3" width="1" height="226.9" fill="rgba(36,41,46,0.11)"/>
<text x="1137.20" y="1169.40" font-family='"Liberation Sans", sans-serif' font-size="14" font-weight="400" fill="#3d4248" text-anchor="middle">05:00</text>
<rect x="1208.58" y="926.3" width="1" height="226.9" fill="rgba(36,41,46,0.11)"/>
<text x="1209.08" y="1169.40" font-family='"Liberation Sans", sans-serif' font-size="14" font-weight="400" fill="#3d4248" text-anchor="middle">05:30</text>
<rect x="1280.45" y="926.3" width="1" height="226.9" fill="rgba(36,41,46,0.11)"/>
<text x="1280.95" y="1169.40" font-family='"Liberation Sans", sans-serif' font-size="14" font-weight="400" fill="#3d4248" text-anchor="middle">06:00</text>
<rect x="1352.33" y="926.3" width="1" height="226.9" fill="rgba(36,41,46,0.11)"/>
<text x="1352.83" y="1169.40" font-family='"Liberation Sans", sans-serif' font-size="14" font-weight="400" fill="#3d4248" text-anchor="middle">06:30</text>
<rect x="1424.20" y="926.3" width="1" height="226.9" fill="rgba(36,41,46,0.11)"/>
<text x="1424.70" y="1169.40" font-family='"Liberation Sans", sans-serif' font-size="14" font-weight="400" fill="#3d4248" text-anchor="middle">07:00</text>
<rect x="1496.08" y="926.3" width="1" height="226.9" fill="rgba(36,41,46,0.11)"/>
<text x="1496.58" y="1169.40" font-family='"Liberation Sans", sans-serif' font-size="14" font-weight="400" fill="#3d4248" text-anchor="middle">07:30</text>
<rect x="1567.95" y="926.3" width="1" height="226.9" fill="rgba(36,41,46,0.11)"/>
<text x="1568.45" y="1169.40" font-family='"Liberation Sans", sans-serif' font-size="14" font-weight="400" fill="#3d4248" text-anchor="middle">08:00</text>
<rect x="1639.83" y="926.3" width="1" height="226.9" fill="rgba(36,41,46,0.11)"/>
<text x="1640.33" y="1169.40" font-family='"Liberation Sans", sans-serif' font-size="14" font-weight="400" fill="#3d4248" text-anchor="middle">08:30</text>
<rect x="1711.70" y="926.3" width="1" height="226.9" fill="rgba(36,41,46,0.11)"/>
<text x="1712.20" y="1169.40" font-family='"Liberation Sans", sans-serif' font-size="14" font-weight="400" fill="#3d4248" text-anchor="middle">09:00</text>
<rect x="1783.58" y="926.3" width="1" height="226.9" fill="rgba(36,41,46,0.11)"/>
<text x="1784.08" y="1169.40" font-family='"Liberation Sans", sans-serif' font-size="14" font-weight="400" fill="#3d4248" text-anchor="middle">09:30</text>
<rect x="1855.45" y="926.3" width="1" height="226.9" fill="rgba(36,41,46,0.11)"/>
<text x="1855.95" y="1169.40" font-family='"Liberation Sans", sans-serif' font-size="14" font-weight="400" fill="#3d4248" text-anchor="middle">10:00</text>
<rect x="1927.33" y="926.3" width="1" height="226.9" fill="rgba(36,41,46,0.11)"/>
<text x="1927.83" y="1169.40" font-family='"Liberation Sans", sans-serif' font-size="14" font-weight="400" fill="#3d4248" text-anchor="middle">10:30</text>
<path d="M1127.10 948.57 L1133.22 948.57 L1134.69 952.61 L1143.51 952.61 L1144.49 1035.51 L1146.33 1034.65 L1155.51 1034.65 L1156.73 1030.36 L1162.61 1030.36 L1163.83 947.35 L1164.69 947.96 L1166.53 952.61 L1181.59 952.61 L1182.45 1031.59 L1184.28 1031.59 L1185.75 1029.38 L1190.41 1026.32 L1191.38 1026.32 L1192.49 1041.02 L1194.69 1043.46 L1196.53 1044.08 L1199.59 1046.53 L1200.45 1046.53 L1201.43 952.61 L1205.47 952.61 L1206.32 1034.65 L1210.61 1034.65 L1211.83 1035.51 L1215.51 1035.51 L1216.49 952.61 L1227.51 952.61 L1228.36 1027.55 L1231.42 1027.55 L1233.51 1124.52 L1236.32 1123.30 L1237.55 1049.34 L1241.46 1049.34 L1242.44 951.39 L1243.67 951.63 L1247.95 953.47 L1249.79 951.39 L1256.53 951.39 L1258.36 950.41 L1260.20 952.61 L1269.99 952.61 L1271.83 951.63 L1289.58 951.63 L1290.44 1022.40 L1299.38 1022.40 L1300.36 952.61 L1303.67 952.61 L1307.34 950.41 L1315.91 950.41 L1317.75 951.39 L1322.64 948.57 L1326.93 949.55 L1331.83 953.47 L1336.73 953.47 L1339.17 952.61 L1351.42 952.61 L1353.50 1121.34 L1357.17 1119.99 L1358.15 1116.32 L1359.99 1116.32 L1361.37 1116.32 L1362.59 945.51 L1366.02 946.49 L1367.86 950.41 L1371.53 950.41 L1373.12 954.32 L1375.20 953.47 L1380.10 953.47 L1381.94 952.61 L1385.61 952.61 L1386.59 1054.48 L1394.18 1054.48 L1396.63 1051.42 L1399.69 1051.42 L1400.92 1050.57 L1404.59 1050.57 L1405.57 950.41 L1408.88 950.41 L1410.71 951.39 L1414.39 951.63 L1415.61 952.61 L1430.30 952.61 L1432.75 953.47 L1440.10 953.47 L1441.94 952.61 L1445.00 952.61 L1446.83 949.43 L1449.89 948.32 L1454.18 948.32 L1456.63 951.63 L1458.83 952.61 L1483.57 952.61 L1484.55 1038.57 L1486.63 1038.57 L1487.85 1034.89 L1490.06 1032.44 L1492.75 1109.58 L1494.34 1022.40 L1495.81 1022.40 L1497.65 1025.10 L1500.46 1027.55 L1501.57 950.41 L1503.77 952.61 L1511.73 952.61 L1513.56 953.47 L1521.52 953.47 L1523.97 952.61 L1531.32 952.61 L1532.54 1040.77 L1534.99 1040.77 L1537.44 1038.32 L1541.73 1038.32 L1542.71 950.41 L1545.16 951.63 L1547.85 1025.10 L1548.71 1025.71 L1549.69 1101.01 L1555.44 1101.01 L1556.42 1028.77 L1557.28 1028.16 L1559.48 952.61 L1571.73 952.61 L1574.17 951.63 L1576.62 951.63 L1580.91 949.43 L1583.97 950.41 L1587.64 951.02 L1590.09 952.24 L1593.15 952.61 L1595.51 1041.38 L1603.47 1041.38 L1604.45 952.61 L1608.37 952.61 L1609.84 1036.73 L1611.43 1032.44 L1617.55 1032.44 L1619.75 948.32 L1621.59 952.61 L1637.51 952.61 L1638.73 1029.38 L1640.45 1025.34 L1646.57 1025.34 L1647.55 948.32 L1649.39 948.32 L1650.61 952.61 L1670.20 952.61 L1675.47 950.41 L1676.94 1034.89 L1679.38 1126.73 L1681.59 1129.17 L1685.51 1129.17 L1686.73 1044.44 L1687.59 1044.08 L1688.57 952.61 L1701.42 952.61 L1705.71 950.41 L1711.83 950.41 L1712.81 1040.40 L1716.12 1041.63 L1717.95 1112.03 L1720.40 1112.03 L1722.24 1023.26 L1725.30 1022.04 L1726.53 952.61 L1730.81 951.63 L1734.48 952.61 L1754.69 952.61 L1755.54 1042.24 L1757.75 1040.77 L1764.48 1038.32 L1765.71 948.32 L1768.77 951.63 L1771.22 952.61 L1772.44 1059.38 L1780.40 1057.54 L1782.24 952.61 L1788.36 952.61 L1790.20 951.63 L1795.71 951.63 L1800.60 949.18 L1803.66 948.32 L1807.95 950.41 L1810.40 952.61 L1814.07 952.61 L1815.30 951.63 L1821.42 951.63 L1823.26 952.61 L1826.32 952.61 L1829.99 951.63 L1836.60 951.53 L1838.44 952.51 L1842.10 950.31 L1845.15 948.48 L1850.04 950.31 L1851.87 952.51 L1857.37 952.51 L1858.59 1045.34 L1865.31 1045.34 L1867.14 1046.56 L1868.36 953.36 L1872.39 953.36 L1873.61 1037.40 L1880.58 1040.45 L1882.41 1034.34 L1884.48 1034.34 L1885.83 1126.81 L1887.29 1125.59 L1891.57 1125.59 L1892.55 1048.39 L1893.40 1048.02 L1894.62 955.44 L1897.07 957.39 L1903.17 957.39 L1904.64 1063.29 L1912.33 1063.29 L1913.56 1042.53 L1915.39 1042.53 L1916.61 1124.36 L1922.47 1124.36 L1923.69 1039.47 L1924.55 1039.23 L1925.77 954.58 L1928.21 953.97 L1931.27 952.51 L1934.32 952.51 L1935.54 955.44 L1939.21 955.44 L1941.04 956.42 L1948.37 956.42 L1949.59 957.39 L1967.91 957.39 L1970.35 956.42 L1971.33 1030.68 L1973.41 1029.70 L1977.68 1029.70 L1979.51 1030.68 L1981.96 956.42 L1983.79 957.39 L1989.90 957.39 L1989.90 1148.20 L1127.10 1148.20 Z" fill="rgba(86,166,75,0.1)" stroke="none"/>
<path d="M1127.10 948.57 L1133.22 948.57 L1134.69 952.61 L1143.51 952.61 L1144.49 1035.51 L1146.33 1034.65 L1155.51 1034.65 L1156.73 1030.36 L1162.61 1030.36 L1163.83 947.35 L1164.69 947.96 L1166.53 952.61 L1181.59 952.61 L1182.45 1031.59 L1184.28 1031.59 L1185.75 1029.38 L1190.41 1026.32 L1191.38 1026.32 L1192.49 1041.02 L1194.69 1043.46 L1196.53 1044.08 L1199.59 1046.53 L1200.45 1046.53 L1201.43 952.61 L1205.47 952.61 L1206.32 1034.65 L1210.61 1034.65 L1211.83 1035.51 L1215.51 1035.51 L1216.49 952.61 L1227.51 952.61 L1228.36 1027.55 L1231.42 1027.55 L1233.51 1124.52 L1236.32 1123.30 L1237.55 1049.34 L1241.46 1049.34 L1242.44 951.39 L1243.67 951.63 L1247.95 953.47 L1249.79 951.39 L1256.53 951.39 L1258.36 950.41 L1260.20 952.61 L1269.99 952.61 L1271.83 951.63 L1289.58 951.63 L1290.44 1022.40 L1299.38 1022.40 L1300.36 952.61 L1303.67 952.61 L1307.34 950.41 L1315.91 950.41 L1317.75 951.39 L1322.64 948.57 L1326.93 949.55 L1331.83 953.47 L1336.73 953.47 L1339.17 952.61 L1351.42 952.61 L1353.50 1121.34 L1357.17 1119.99 L1358.15 1116.32 L1359.99 1116.32 L1361.37 1116.32 L1362.59 945.51 L1366.02 946.49 L1367.86 950.41 L1371.53 950.41 L1373.12 954.32 L1375.20 953.47 L1380.10 953.47 L1381.94 952.61 L1385.61 952.61 L1386.59 1054.48 L1394.18 1054.48 L1396.63 1051.42 L1399.69 1051.42 L1400.92 1050.57 L1404.59 1050.57 L1405.57 950.41 L1408.88 950.41 L1410.71 951.39 L1414.39 951.63 L1415.61 952.61 L1430.30 952.61 L1432.75 953.47 L1440.10 953.47 L1441.94 952.61 L1445.00 952.61 L1446.83 949.43 L1449.89 948.32 L1454.18 948.32 L1456.63 951.63 L1458.83 952.61 L1483.57 952.61 L1484.55 1038.57 L1486.63 1038.57 L1487.85 1034.89 L1490.06 1032.44 L1492.75 1109.58 L1494.34 1022.40 L1495.81 1022.40 L1497.65 1025.10 L1500.46 1027.55 L1501.57 950.41 L1503.77 952.61 L1511.73 952.61 L1513.56 953.47 L1521.52 953.47 L1523.97 952.61 L1531.32 952.61 L1532.54 1040.77 L1534.99 1040.77 L1537.44 1038.32 L1541.73 1038.32 L1542.71 950.41 L1545.16 951.63 L1547.85 1025.10 L1548.71 1025.71 L1549.69 1101.01 L1555.44 1101.01 L1556.42 1028.77 L1557.28 1028.16 L1559.48 952.61 L1571.73 952.61 L1574.17 951.63 L1576.62 951.63 L1580.91 949.43 L1583.97 950.41 L1587.64 951.02 L1590.09 952.24 L1593.15 952.61 L1595.51 1041.38 L1603.47 1041.38 L1604.45 952.61 L1608.37 952.61 L1609.84 1036.73 L1611.43 1032.44 L1617.55 1032.44 L1619.75 948.32 L1621.59 952.61 L1637.51 952.61 L1638.73 1029.38 L1640.45 1025.34 L1646.57 1025.34 L1647.55 948.32 L1649.39 948.32 L1650.61 952.61 L1670.20 952.61 L1675.47 950.41 L1676.94 1034.89 L1679.38 1126.73 L1681.59 1129.17 L1685.51 1129.17 L1686.73 1044.44 L1687.59 1044.08 L1688.57 952.61 L1701.42 952.61 L1705.71 950.41 L1711.83 950.41 L1712.81 1040.40 L1716.12 1041.63 L1717.95 1112.03 L1720.40 1112.03 L1722.24 1023.26 L1725.30 1022.04 L1726.53 952.61 L1730.81 951.63 L1734.48 952.61 L1754.69 952.61 L1755.54 1042.24 L1757.75 1040.77 L1764.48 1038.32 L1765.71 948.32 L1768.77 951.63 L1771.22 952.61 L1772.44 1059.38 L1780.40 1057.54 L1782.24 952.61 L1788.36 952.61 L1790.20 951.63 L1795.71 951.63 L1800.60 949.18 L1803.66 948.32 L1807.95 950.41 L1810.40 952.61 L1814.07 952.61 L1815.30 951.63 L1821.42 951.63 L1823.26 952.61 L1826.32 952.61 L1829.99 951.63 L1836.60 951.53 L1838.44 952.51 L1842.10 950.31 L1845.15 948.48 L1850.04 950.31 L1851.87 952.51 L1857.37 952.51 L1858.59 1045.34 L1865.31 1045.34 L1867.14 1046.56 L1868.36 953.36 L1872.39 953.36 L1873.61 1037.40 L1880.58 1040.45 L1882.41 1034.34 L1884.48 1034.34 L1885.83 1126.81 L1887.29 1125.59 L1891.57 1125.59 L1892.55 1048.39 L1893.40 1048.02 L1894.62 955.44 L1897.07 957.39 L1903.17 957.39 L1904.64 1063.29 L1912.33 1063.29 L1913.56 1042.53 L1915.39 1042.53 L1916.61 1124.36 L1922.47 1124.36 L1923.69 1039.47 L1924.55 1039.23 L1925.77 954.58 L1928.21 953.97 L1931.27 952.51 L1934.32 952.51 L1935.54 955.44 L1939.21 955.44 L1941.04 956.42 L1948.37 956.42 L1949.59 957.39 L1967.91 957.39 L1970.35 956.42 L1971.33 1030.68 L1973.41 1029.70 L1977.68 1029.70 L1979.51 1030.68 L1981.96 956.42 L1983.79 957.39 L1989.90 957.39" fill="none" stroke="#56a64b" stroke-width="1.3" stroke-linejoin="round"/>
<rect x="1094.0" y="1185.4" width="16.5" height="5" rx="1.2" fill="#56a64b"/>
<text x="1120.30" y="1192.30" font-family='"Liberation Sans", sans-serif' font-size="14.8" font-weight="400" fill="#3d4248" text-anchor="start">node-exporter: obj mallocs/s (avg)</text>
<rect x="89.5" y="1220.5" width="965" height="354" rx="2.5" fill="#fff" stroke="#e0e2e5" stroke-width="1"/>
<text x="572.00" y="1245.80" font-family='"Liberation Sans", sans-serif' font-size="16.7" font-weight="400" fill="#24292e" text-anchor="middle" stroke="#24292e" stroke-width="0.45">Number of Live Objects</text>
<rect x="97.90" y="1225.70" width="2.9" height="2.3" fill="#4a4f55"/>
<path d="M97.00 1229.20 H100.30 V1234.20 H101.60 V1235.80 H96.80 V1234.20 H98.20 V1230.60 H97.00 Z" fill="#4a4f55"/>
<rect x="135.7" y="1321.80" width="879.3" height="1" fill="rgba(36,41,46,0.11)"/>
<text x="128.50" y="1326.40" font-family='"Liberation Sans", sans-serif' font-size="14" font-weight="400" fill="#3d4248" text-anchor="end">80 K</text>
<rect x="135.7" y="1370.80" width="879.3" height="1" fill="rgba(36,41,46,0.11)"/>
<text x="128.50" y="1375.40" font-family='"Liberation Sans", sans-serif' font-size="14" font-weight="400" fill="#3d4248" text-anchor="end">60 K</text>
<rect x="135.7" y="1419.70" width="879.3" height="1" fill="rgba(36,41,46,0.11)"/>
<text x="128.50" y="1424.30" font-family='"Liberation Sans", sans-serif' font-size="14" font-weight="400" fill="#3d4248" text-anchor="end">40 K</text>
<rect x="135.7" y="1468.70" width="879.3" height="1" fill="rgba(36,41,46,0.11)"/>
<text x="128.50" y="1473.30" font-family='"Liberation Sans", sans-serif' font-size="14" font-weight="400" fill="#3d4248" text-anchor="end">20 K</text>
<rect x="150.00" y="1291.2" width="1" height="226.9" fill="rgba(36,41,46,0.11)"/>
<text x="150.50" y="1534.40" font-family='"Liberation Sans", sans-serif' font-size="14" font-weight="400" fill="#3d4248" text-anchor="middle">05:00</text>
<rect x="222.89" y="1291.2" width="1" height="226.9" fill="rgba(36,41,46,0.11)"/>
<text x="223.39" y="1534.40" font-family='"Liberation Sans", sans-serif' font-size="14" font-weight="400" fill="#3d4248" text-anchor="middle">05:30</text>
<rect x="295.78" y="1291.2" width="1" height="226.9" fill="rgba(36,41,46,0.11)"/>
<text x="296.28" y="1534.40" font-family='"Liberation Sans", sans-serif' font-size="14" font-weight="400" fill="#3d4248" text-anchor="middle">06:00</text>
<rect x="368.67" y="1291.2" width="1" height="226.9" fill="rgba(36,41,46,0.11)"/>
<text x="369.17" y="1534.40" font-family='"Liberation Sans", sans-serif' font-size="14" font-weight="400" fill="#3d4248" text-anchor="middle">06:30</text>
<rect x="441.56" y="1291.2" width="1" height="226.9" fill="rgba(36,41,46,0.11)"/>
<text x="442.06" y="1534.40" font-family='"Liberation Sans", sans-serif' font-size="14" font-weight="400" fill="#3d4248" text-anchor="middle">07:00</text>
<rect x="514.45" y="1291.2" width="1" height="226.9" fill="rgba(36,41,46,0.11)"/>
<text x="514.95" y="1534.40" font-family='"Liberation Sans", sans-serif' font-size="14" font-weight="400" fill="#3d4248" text-anchor="middle">07:30</text>
<rect x="587.34" y="1291.2" width="1" height="226.9" fill="rgba(36,41,46,0.11)"/>
<text x="587.84" y="1534.40" font-family='"Liberation Sans", sans-serif' font-size="14" font-weight="400" fill="#3d4248" text-anchor="middle">08:00</text>
<rect x="660.23" y="1291.2" width="1" height="226.9" fill="rgba(36,41,46,0.11)"/>
<text x="660.73" y="1534.40" font-family='"Liberation Sans", sans-serif' font-size="14" font-weight="400" fill="#3d4248" text-anchor="middle">08:30</text>
<rect x="733.12" y="1291.2" width="1" height="226.9" fill="rgba(36,41,46,0.11)"/>
<text x="733.62" y="1534.40" font-family='"Liberation Sans", sans-serif' font-size="14" font-weight="400" fill="#3d4248" text-anchor="middle">09:00</text>
<rect x="806.01" y="1291.2" width="1" height="226.9" fill="rgba(36,41,46,0.11)"/>
<text x="806.51" y="1534.40" font-family='"Liberation Sans", sans-serif' font-size="14" font-weight="400" fill="#3d4248" text-anchor="middle">09:30</text>
<rect x="878.90" y="1291.2" width="1" height="226.9" fill="rgba(36,41,46,0.11)"/>
<text x="879.40" y="1534.40" font-family='"Liberation Sans", sans-serif' font-size="14" font-weight="400" fill="#3d4248" text-anchor="middle">10:00</text>
<rect x="951.79" y="1291.2" width="1" height="226.9" fill="rgba(36,41,46,0.11)"/>
<text x="952.29" y="1534.40" font-family='"Liberation Sans", sans-serif' font-size="14" font-weight="400" fill="#3d4248" text-anchor="middle">10:30</text>
<path d="M140.30 1413.00 L140.36 1413.27 L140.82 1380.36 L141.89 1381.13 L144.18 1391.84 L144.95 1393.37 L146.48 1404.85 L147.55 1426.28 L149.54 1426.28 L150.31 1397.96 L151.07 1381.13 L152.60 1396.43 L154.90 1397.96 L156.43 1400.26 L157.96 1476.03 L158.73 1476.03 L161.02 1385.72 L162.55 1426.28 L164.85 1418.63 L166.38 1417.86 L167.91 1397.20 L169.44 1375.00 L170.97 1375.00 L172.96 1426.28 L175.10 1398.73 L177.55 1426.28 L180.16 1426.28 L182.91 1367.35 L184.75 1426.28 L187.04 1385.72 L190.10 1385.72 L191.94 1414.04 L194.70 1310.71 L195.46 1310.71 L196.99 1422.46 L200.05 1399.49 L203.12 1401.03 L205.41 1404.09 L206.94 1459.19 L208.78 1424.75 L211.53 1427.05 L214.60 1425.52 L216.89 1371.18 L218.88 1426.28 L220.72 1492.87 L222.56 1492.87 L223.78 1387.25 L226.08 1372.71 L228.37 1393.37 L230.67 1396.43 L233.73 1380.36 L236.03 1395.67 L237.56 1400.26 L239.85 1400.26 L241.38 1384.19 L242.91 1414.04 L245.98 1414.04 L247.96 1380.36 L250.87 1426.28 L252.86 1369.65 L254.70 1414.04 L257.46 1416.33 L259.75 1426.28 L263.58 1427.05 L265.11 1374.24 L267.86 1402.56 L269.70 1370.41 L272.00 1384.19 L273.53 1384.19 L275.06 1426.28 L278.12 1426.28 L279.65 1392.61 L282.71 1388.78 L285.01 1382.66 L287.00 1391.84 L288.53 1384.19 L290.37 1384.95 L291.90 1397.96 L294.19 1403.32 L295.72 1403.32 L298.02 1400.26 L301.85 1395.67 L304.14 1380.36 L305.67 1407.91 L307.66 1407.91 L309.19 1390.31 L311.03 1398.73 L313.33 1404.09 L315.62 1426.28 L320.98 1426.28 L322.51 1417.86 L324.04 1417.10 L326.03 1390.31 L327.87 1402.56 L329.70 1402.56 L330.93 1418.63 L332.77 1392.61 L335.52 1387.25 L337.82 1384.19 L340.11 1403.32 L341.64 1403.78 L343.94 1417.10 L345.47 1427.05 L347.77 1426.28 L350.52 1426.28 L352.36 1405.62 L355.11 1398.73 L358.48 1405.62 L360.01 1427.81 L361.54 1379.60 L363.84 1378.83 L365.37 1375.00 L367.36 1398.73 L369.96 1470.67 L371.95 1388.78 L375.32 1372.71 L377.61 1383.42 L379.15 1413.27 L380.68 1413.27 L382.21 1387.25 L384.20 1395.67 L386.80 1401.03 L389.09 1371.18 L391.85 1402.56 L393.69 1414.04 L395.98 1419.39 L397.51 1419.39 L399.04 1380.36 L401.34 1402.56 L403.94 1493.63 L405.93 1383.42 L408.99 1382.66 L411.29 1404.85 L412.82 1481.39 L414.81 1481.39 L415.88 1403.32 L418.18 1404.09 L420.93 1367.35 L423.08 1401.03 L425.83 1426.28 L428.13 1423.99 L430.12 1379.60 L431.95 1378.83 L433.48 1367.35 L435.02 1424.75 L436.43 1424.75 L437.96 1379.60 L439.95 1426.28 L443.01 1416.33 L445.31 1422.46 L446.84 1426.28 L450.66 1426.28 L451.74 1380.36 L453.27 1380.36 L454.80 1396.43 L456.79 1400.26 L457.86 1401.03 L459.85 1426.28 L461.84 1371.18 L463.68 1425.52 L467.50 1426.28 L469.03 1382.66 L470.56 1381.89 L472.09 1375.77 L473.62 1388.01 L475.16 1390.31 L477.45 1404.09 L478.98 1422.46 L480.82 1414.04 L482.35 1414.04 L483.88 1388.47 L485.56 1426.28 L491.23 1426.28 L493.52 1404.85 L496.13 1400.26 L498.12 1426.28 L499.65 1426.28 L501.18 1366.59 L503.17 1482.92 L504.70 1482.92 L505.77 1425.52 L508.37 1425.52 L510.82 1493.63 L512.66 1426.28 L514.19 1377.30 L516.48 1378.07 L518.01 1400.26 L520.31 1403.32 L521.84 1403.32 L523.07 1390.31 L525.21 1426.28 L527.66 1401.79 L529.49 1422.46 L531.03 1423.22 L533.32 1426.28 L534.85 1381.89 L536.84 1401.03 L538.68 1401.03 L539.90 1387.25 L541.74 1398.73 L543.58 1401.03 L545.57 1404.09 L547.10 1426.28 L550.16 1422.46 L551.69 1379.60 L555.52 1379.60 L557.05 1387.25 L559.04 1401.03 L561.95 1374.70 L563.94 1388.01 L567.00 1378.83 L568.83 1474.50 L570.82 1366.59 L572.66 1366.59 L574.19 1400.26 L576.18 1413.27 L578.78 1426.28 L580.93 1380.36 L583.83 1426.28 L586.13 1378.83 L587.97 1401.03 L589.96 1401.79 L591.49 1406.38 L593.02 1392.61 L596.08 1424.75 L598.38 1414.04 L600.67 1387.25 L602.97 1385.72 L604.50 1426.28 L606.79 1426.28 L608.02 1342.09 L609.86 1426.28 L615.52 1426.28 L617.51 1422.46 L620.57 1422.46 L622.10 1365.82 L623.63 1365.82 L625.16 1413.27 L626.69 1379.60 L628.68 1379.60 L630.21 1426.28 L632.05 1370.41 L634.81 1397.20 L636.95 1417.86 L638.94 1405.62 L640.47 1405.62 L642.00 1426.28 L645.06 1426.28 L647.05 1414.04 L648.89 1426.28 L651.95 1388.47 L653.79 1424.75 L655.78 1374.70 L657.61 1374.70 L659.14 1490.57 L661.44 1420.92 L663.43 1406.38 L666.49 1406.38 L669.09 1329.39 L671.08 1366.59 L673.07 1388.47 L674.91 1388.47 L676.44 1384.19 L677.97 1426.28 L680.73 1388.47 L682.56 1420.16 L685.63 1426.28 L693.28 1426.28 L694.81 1371.18 L696.65 1371.18 L697.87 1426.28 L700.17 1493.63 L702.77 1395.67 L705.52 1397.96 L707.82 1421.69 L710.12 1426.28 L715.47 1426.28 L717.00 1376.53 L719.30 1421.69 L721.60 1426.28 L725.42 1426.28 L726.95 1392.61 L729.25 1400.26 L731.89 1426.28 L734.18 1426.28 L736.94 1367.35 L738.78 1413.27 L741.84 1406.38 L744.13 1414.80 L745.66 1405.62 L747.65 1405.62 L749.18 1414.04 L751.33 1416.33 L754.08 1381.13 L755.92 1417.86 L758.98 1394.14 L760.97 1426.28 L762.96 1365.51 L764.80 1365.51 L766.02 1416.33 L767.86 1380.36 L770.61 1397.20 L773.22 1380.36 L775.51 1423.99 L777.81 1426.28 L779.80 1414.04 L781.33 1414.04 L782.86 1393.37 L784.70 1395.67 L788.52 1395.67 L790.05 1459.19 L792.81 1426.28 L795.11 1464.55 L796.64 1381.13 L798.78 1381.13 L800.00 1426.28 L801.84 1382.66 L803.37 1382.66 L804.90 1414.04 L806.89 1391.84 L808.88 1388.78 L810.41 1388.78 L811.79 1426.28 L815.31 1426.28 L816.84 1371.94 L820.67 1371.18 L821.74 1394.14 L824.49 1395.67 L827.25 1388.47 L829.09 1401.79 L830.92 1426.28 L832.45 1426.28 L833.99 1379.29 L835.98 1415.57 L837.51 1415.57 L839.04 1426.28 L841.33 1372.71 L843.63 1426.28 L845.92 1401.79 L847.76 1414.04 L849.29 1414.04 L851.28 1389.55 L852.81 1404.85 L854.34 1405.31 L855.87 1426.28 L858.17 1394.60 L860.47 1414.04 L863.53 1414.04 L864.60 1394.60 L866.59 1394.14 L868.12 1371.64 L869.65 1413.27 L871.64 1413.27 L873.17 1394.60 L875.01 1426.28 L878.07 1402.25 L879.91 1426.28 L880.82 1427.05 L882.97 1472.20 L884.96 1370.41 L887.25 1378.37 L888.78 1378.37 L890.01 1417.86 L892.15 1402.25 L895.21 1414.80 L897.20 1481.39 L899.80 1388.47 L902.25 1407.15 L904.09 1384.19 L905.62 1384.19 L907.15 1394.14 L908.99 1474.50 L911.74 1415.57 L914.04 1426.28 L917.10 1415.57 L919.09 1427.81 L920.93 1398.73 L922.46 1398.73 L923.99 1426.28 L925.98 1383.42 L928.89 1493.63 L930.88 1426.28 L933.94 1402.56 L935.93 1426.28 L937.77 1388.47 L939.60 1388.47 L941.13 1480.62 L943.12 1426.28 L946.95 1395.67 L951.24 1387.56 L953.07 1422.46 L955.37 1426.28 L957.66 1414.04 L959.96 1413.58 L961.49 1413.58 L963.48 1394.60 L965.01 1426.28 L968.38 1426.28 L970.22 1375.77 L971.75 1423.99 L973.74 1424.75 L976.80 1427.05 L978.79 1427.05 L980.32 1381.89 L982.16 1422.46 L985.22 1392.61 L987.05 1422.46 L988.58 1426.28 L995.17 1426.28 L997.16 1490.57 L998.69 1426.28 L1002.05 1406.38 L1003.89 1465.31 L1005.88 1426.28 L1007.87 1426.28 L1008.94 1382.66 L1011.24 1383.42 L1014.30 1381.13 L1014.30 1513.10 L140.30 1513.10 Z" fill="rgba(86,166,75,0.1)" stroke="none"/>
<path d="M140.30 1413.00 L140.36 1413.27 L140.82 1380.36 L141.89 1381.13 L144.18 1391.84 L144.95 1393.37 L146.48 1404.85 L147.55 1426.28 L149.54 1426.28 L150.31 1397.96 L151.07 1381.13 L152.60 1396.43 L154.90 1397.96 L156.43 1400.26 L157.96 1476.03 L158.73 1476.03 L161.02 1385.72 L162.55 1426.28 L164.85 1418.63 L166.38 1417.86 L167.91 1397.20 L169.44 1375.00 L170.97 1375.00 L172.96 1426.28 L175.10 1398.73 L177.55 1426.28 L180.16 1426.28 L182.91 1367.35 L184.75 1426.28 L187.04 1385.72 L190.10 1385.72 L191.94 1414.04 L194.70 1310.71 L195.46 1310.71 L196.99 1422.46 L200.05 1399.49 L203.12 1401.03 L205.41 1404.09 L206.94 1459.19 L208.78 1424.75 L211.53 1427.05 L214.60 1425.52 L216.89 1371.18 L218.88 1426.28 L220.72 1492.87 L222.56 1492.87 L223.78 1387.25 L226.08 1372.71 L228.37 1393.37 L230.67 1396.43 L233.73 1380.36 L236.03 1395.67 L237.56 1400.26 L239.85 1400.26 L241.38 1384.19 L242.91 1414.04 L245.98 1414.04 L247.96 1380.36 L250.87 1426.28 L252.86 1369.65 L254.70 1414.04 L257.46 1416.33 L259.75 1426.28 L263.58 1427.05 L265.11 1374.24 L267.86 1402.56 L269.70 1370.41 L272.00 1384.19 L273.53 1384.19 L275.06 1426.28 L278.12 1426.28 L279.65 1392.61 L282.71 1388.78 L285.01 1382.66 L287.00 1391.84 L288.53 1384.19 L290.37 1384.95 L291.90 1397.96 L294.19 1403.32 L295.72 1403.32 L298.02 1400.26 L301.85 1395.67 L304.14 1380.36 L305.67 1407.91 L307.66 1407.91 L309.19 1390.31 L311.03 1398.73 L313.33 1404.09 L315.62 1426.28 L320.98 1426.28 L322.51 1417.86 L324.04 1417.10 L326.03 1390.31 L327.87 1402.56 L329.70 1402.56 L330.93 1418.63 L332.77 1392.61 L335.52 1387.25 L337.82 1384.19 L340.11 1403.32 L341.64 1403.78 L343.94 1417.10 L345.47 1427.05 L347.77 1426.28 L350.52 1426.28 L352.36 1405.62 L355.11 1398.73 L358.48 1405.62 L360.01 1427.81 L361.54 1379.60 L363.84 1378.83 L365.37 1375.00 L367.36 1398.73 L369.96 1470.67 L371.95 1388.78 L375.32 1372.71 L377.61 1383.42 L379.15 1413.27 L380.68 1413.27 L382.21 1387.25 L384.20 1395.67 L386.80 1401.03 L389.09 1371.18 L391.85 1402.56 L393.69 1414.04 L395.98 1419.39 L397.51 1419.39 L399.04 1380.36 L401.34 1402.56 L403.94 1493.63 L405.93 1383.42 L408.99 1382.66 L411.29 1404.85 L412.82 1481.39 L414.81 1481.39 L415.88 1403.32 L418.18 1404.09 L420.93 1367.35 L423.08 1401.03 L425.83 1426.28 L428.13 1423.99 L430.12 1379.60 L431.95 1378.83 L433.48 1367.35 L435.02 1424.75 L436.43 1424.75 L437.96 1379.60 L439.95 1426.28 L443.01 1416.33 L445.31 1422.46 L446.84 1426.28 L450.66 1426.28 L451.74 1380.36 L453.27 1380.36 L454.80 1396.43 L456.79 1400.26 L457.86 1401.03 L459.85 1426.28 L461.84 1371.18 L463.68 1425.52 L467.50 1426.28 L469.03 1382.66 L470.56 1381.89 L472.09 1375.77 L473.62 1388.01 L475.16 1390.31 L477.45 1404.09 L478.98 1422.46 L480.82 1414.04 L482.35 1414.04 L483.88 1388.47 L485.56 1426.28 L491.23 1426.28 L493.52 1404.85 L496.13 1400.26 L498.12 1426.28 L499.65 1426.28 L501.18 1366.59 L503.17 1482.92 L504.70 1482.92 L505.77 1425.52 L508.37 1425.52 L510.82 1493.63 L512.66 1426.28 L514.19 1377.30 L516.48 1378.07 L518.01 1400.26 L520.31 1403.32 L521.84 1403.32 L523.07 1390.31 L525.21 1426.28 L527.66 1401.79 L529.49 1422.46 L531.03 1423.22 L533.32 1426.28 L534.85 1381.89 L536.84 1401.03 L538.68 1401.03 L539.90 1387.25 L541.74 1398.73 L543.58 1401.03 L545.57 1404.09 L547.10 1426.28 L550.16 1422.46 L551.69 1379.60 L555.52 1379.60 L557.05 1387.25 L559.04 1401.03 L561.95 1374.70 L563.94 1388.01 L567.00 1378.83 L568.83 1474.50 L570.82 1366.59 L572.66 1366.59 L574.19 1400.26 L576.18 1413.27 L578.78 1426.28 L580.93 1380.36 L583.83 1426.28 L586.13 1378.83 L587.97 1401.03 L589.96 1401.79 L591.49 1406.38 L593.02 1392.61 L596.08 1424.75 L598.38 1414.04 L600.67 1387.25 L602.97 1385.72 L604.50 1426.28 L606.79 1426.28 L608.02 1342.09 L609.86 1426.28 L615.52 1426.28 L617.51 1422.46 L620.57 1422.46 L622.10 1365.82 L623.63 1365.82 L625.16 1413.27 L626.69 1379.60 L628.68 1379.60 L630.21 1426.28 L632.05 1370.41 L634.81 1397.20 L636.95 1417.86 L638.94 1405.62 L640.47 1405.62 L642.00 1426.28 L645.06 1426.28 L647.05 1414.04 L648.89 1426.28 L651.95 1388.47 L653.79 1424.75 L655.78 1374.70 L657.61 1374.70 L659.14 1490.57 L661.44 1420.92 L663.43 1406.38 L666.49 1406.38 L669.09 1329.39 L671.08 1366.59 L673.07 1388.47 L674.91 1388.47 L676.44 1384.19 L677.97 1426.28 L680.73 1388.47 L682.56 1420.16 L685.63 1426.28 L693.28 1426.28 L694.81 1371.18 L696.65 1371.18 L697.87 1426.28 L700.17 1493.63 L702.77 1395.67 L705.52 1397.96 L707.82 1421.69 L710.12 1426.28 L715.47 1426.28 L717.00 1376.53 L719.30 1421.69 L721.60 1426.28 L725.42 1426.28 L726.95 1392.61 L729.25 1400.26 L731.89 1426.28 L734.18 1426.28 L736.94 1367.35 L738.78 1413.27 L741.84 1406.38 L744.13 1414.80 L745.66 1405.62 L747.65 1405.62 L749.18 1414.04 L751.33 1416.33 L754.08 1381.13 L755.92 1417.86 L758.98 1394.14 L760.97 1426.28 L762.96 1365.51 L764.80 1365.51 L766.02 1416.33 L767.86 1380.36 L770.61 1397.20 L773.22 1380.36 L775.51 1423.99 L777.81 1426.28 L779.80 1414.04 L781.33 1414.04 L782.86 1393.37 L784.70 1395.67 L788.52 1395.67 L790.05 1459.19 L792.81 1426.28 L795.11 1464.55 L796.64 1381.13 L798.78 1381.13 L800.00 1426.28 L801.84 1382.66 L803.37 1382.66 L804.90 1414.04 L806.89 1391.84 L808.88 1388.78 L810.41 1388.78 L811.79 1426.28 L815.31 1426.28 L816.84 1371.94 L820.67 1371.18 L821.74 1394.14 L824.49 1395.67 L827.25 1388.47 L829.09 1401.79 L830.92 1426.28 L832.45 1426.28 L833.99 1379.29 L835.98 1415.57 L837.51 1415.57 L839.04 1426.28 L841.33 1372.71 L843.63 1426.28 L845.92 1401.79 L847.76 1414.04 L849.29 1414.04 L851.28 1389.55 L852.81 1404.85 L854.34 1405.31 L855.87 1426.28 L858.17 1394.60 L860.47 1414.04 L863.53 1414.04 L864.60 1394.60 L866.59 1394.14 L868.12 1371.64 L869.65 1413.27 L871.64 1413.27 L873.17 1394.60 L875.01 1426.28 L878.07 1402.25 L879.91 1426.28 L880.82 1427.05 L882.97 1472.20 L884.96 1370.41 L887.25 1378.37 L888.78 1378.37 L890.01 1417.86 L892.15 1402.25 L895.21 1414.80 L897.20 1481.39 L899.80 1388.47 L902.25 1407.15 L904.09 1384.19 L905.62 1384.19 L907.15 1394.14 L908.99 1474.50 L911.74 1415.57 L914.04 1426.28 L917.10 1415.57 L919.09 1427.81 L920.93 1398.73 L922.46 1398.73 L923.99 1426.28 L925.98 1383.42 L928.89 1493.63 L930.88 1426.28 L933.94 1402.56 L935.93 1426.28 L937.77 1388.47 L939.60 1388.47 L941.13 1480.62 L943.12 1426.28 L946.95 1395.67 L951.24 1387.56 L953.07 1422.46 L955.37 1426.28 L957.66 1414.04 L959.96 1413.58 L961.49 1413.58 L963.48 1394.60 L965.01 1426.28 L968.38 1426.28 L970.22 1375.77 L971.75 1423.99 L973.74 1424.75 L976.80 1427.05 L978.79 1427.05 L980.32 1381.89 L982.16 1422.46 L985.22 1392.61 L987.05 1422.46 L988.58 1426.28 L995.17 1426.28 L997.16 1490.57 L998.69 1426.28 L1002.05 1406.38 L1003.89 1465.31 L1005.88 1426.28 L1007.87 1426.28 L1008.94 1382.66 L1011.24 1383.42 L1014.30 1381.13" fill="none" stroke="#56a64b" stroke-width="1.2" stroke-linejoin="round"/>
<rect x="119.0" y="1550.4" width="16.5" height="5" rx="1.2" fill="#56a64b"/>
<text x="145.60" y="1557.30" font-family='"Liberation Sans", sans-serif' font-size="14.8" font-weight="400" fill="#3d4248" text-anchor="start">node-exporter: object count (avg)</text>
<rect x="1064.5" y="1220.5" width="965" height="354" rx="2.5" fill="#fff" stroke="#e0e2e5" stroke-width="1"/>
<text x="1547.00" y="1245.80" font-family='"Liberation Sans", sans-serif' font-size="16.7" font-weight="400" fill="#24292e" text-anchor="middle" stroke="#24292e" stroke-width="0.45">Goroutines</text>
<rect x="1072.90" y="1225.70" width="2.9" height="2.3" fill="#4a4f55"/>
<path d="M1072.00 1229.20 H1075.30 V1234.20 H1076.60 V1235.80 H1071.80 V1234.20 H1073.20 V1230.60 H1072.00 Z" fill="#4a4f55"/>
<rect x="1098.3" y="1308.70" width="891.2" height="1" fill="rgba(36,41,46,0.11)"/>
<text x="1091.40" y="1313.30" font-family='"Liberation Sans", sans-serif' font-size="14" font-weight="400" fill="#3d4248" text-anchor="end">10</text>
<rect x="1098.3" y="1354.70" width="891.2" height="1" fill="rgba(36,41,46,0.11)"/>
<text x="1091.40" y="1359.30" font-family='"Liberation Sans", sans-serif' font-size="14" font-weight="400" fill="#3d4248" text-anchor="end">10</text>
<rect x="1098.3" y="1402.00" width="891.2" height="1" fill="rgba(36,41,46,0.11)"/>
<text x="1091.40" y="1406.60" font-family='"Liberation Sans", sans-serif' font-size="14" font-weight="400" fill="#3d4248" text-anchor="end">9</text>
<rect x="1098.3" y="1447.80" width="891.2" height="1" fill="rgba(36,41,46,0.11)"/>
<text x="1091.40" y="1452.40" font-family='"Liberation Sans", sans-serif' font-size="14" font-weight="400" fill="#3d4248" text-anchor="end">9</text>
<rect x="1098.3" y="1493.60" width="891.2" height="1" fill="rgba(36,41,46,0.11)"/>
<text x="1091.40" y="1498.20" font-family='"Liberation Sans", sans-serif' font-size="14" font-weight="400" fill="#3d4248" text-anchor="end">8</text>
<rect x="1113.00" y="1291.3" width="1" height="226.9" fill="rgba(36,41,46,0.11)"/>
<text x="1113.50" y="1534.40" font-family='"Liberation Sans", sans-serif' font-size="14" font-weight="400" fill="#3d4248" text-anchor="middle">05:00</text>
<rect x="1186.86" y="1291.3" width="1" height="226.9" fill="rgba(36,41,46,0.11)"/>
<text x="1187.36" y="1534.40" font-family='"Liberation Sans", sans-serif' font-size="14" font-weight="400" fill="#3d4248" text-anchor="middle">05:30</text>
<rect x="1260.72" y="1291.3" width="1" height="226.9" fill="rgba(36,41,46,0.11)"/>
<text x="1261.22" y="1534.40" font-family='"Liberation Sans", sans-serif' font-size="14" font-weight="400" fill="#3d4248" text-anchor="middle">06:00</text>
<rect x="1334.58" y="1291.3" width="1" height="226.9" fill="rgba(36,41,46,0.11)"/>
<text x="1335.08" y="1534.40" font-family='"Liberation Sans", sans-serif' font-size="14" font-weight="400" fill="#3d4248" text-anchor="middle">06:30</text>
<rect x="1408.44" y="1291.3" width="1" height="226.9" fill="rgba(36,41,46,0.11)"/>
<text x="1408.94" y="1534.40" font-family='"Liberation Sans", sans-serif' font-size="14" font-weight="400" fill="#3d4248" text-anchor="middle">07:00</text>
<rect x="1482.30" y="1291.3" width="1" height="226.9" fill="rgba(36,41,46,0.11)"/>
<text x="1482.80" y="1534.40" font-family='"Liberation Sans", sans-serif' font-size="14" font-weight="400" fill="#3d4248" text-anchor="middle">07:30</text>
<rect x="1556.16" y="1291.3" width="1" height="226.9" fill="rgba(36,41,46,0.11)"/>
<text x="1556.66" y="1534.40" font-family='"Liberation Sans", sans-serif' font-size="14" font-weight="400" fill="#3d4248" text-anchor="middle">08:00</text>
<rect x="1630.02" y="1291.3" width="1" height="226.9" fill="rgba(36,41,46,0.11)"/>
<text x="1630.52" y="1534.40" font-family='"Liberation Sans", sans-serif' font-size="14" font-weight="400" fill="#3d4248" text-anchor="middle">08:30</text>
<rect x="1703.88" y="1291.3" width="1" height="226.9" fill="rgba(36,41,46,0.11)"/>
<text x="1704.38" y="1534.40" font-family='"Liberation Sans", sans-serif' font-size="14" font-weight="400" fill="#3d4248" text-anchor="middle">09:00</text>
<rect x="1777.74" y="1291.3" width="1" height="226.9" fill="rgba(36,41,46,0.11)"/>
<text x="1778.24" y="1534.40" font-family='"Liberation Sans", sans-serif' font-size="14" font-weight="400" fill="#3d4248" text-anchor="middle">09:30</text>
<rect x="1851.60" y="1291.3" width="1" height="226.9" fill="rgba(36,41,46,0.11)"/>
<text x="1852.10" y="1534.40" font-family='"Liberation Sans", sans-serif' font-size="14" font-weight="400" fill="#3d4248" text-anchor="middle">10:00</text>
<rect x="1925.46" y="1291.3" width="1" height="226.9" fill="rgba(36,41,46,0.11)"/>
<text x="1925.96" y="1534.40" font-family='"Liberation Sans", sans-serif' font-size="14" font-weight="400" fill="#3d4248" text-anchor="middle">10:30</text>
<path d="M1103.20 1494.10 L1132.40 1494.10 L1134.20 1402.50 L1134.20 1402.50 L1135.40 1494.10 L1171.50 1494.10 L1173.00 1309.20 L1173.70 1309.20 L1175.40 1494.10 L1188.20 1494.10 L1189.40 1402.50 L1193.40 1402.50 L1194.30 1309.20 L1196.50 1309.20 L1197.70 1494.10 L1205.30 1494.10 L1207.70 1402.50 L1207.70 1402.50 L1209.30 1494.10 L1228.50 1494.10 L1230.10 1402.50 L1230.10 1402.50 L1231.60 1494.10 L1265.50 1494.10 L1266.70 1402.50 L1267.30 1402.50 L1268.30 1494.10 L1270.40 1494.10 L1272.00 1402.50 L1272.00 1402.50 L1273.20 1494.10 L1319.30 1494.10 L1320.90 1402.50 L1320.90 1402.50 L1322.40 1494.10 L1326.40 1494.10 L1327.60 1402.50 L1329.10 1402.50 L1330.60 1494.10 L1356.60 1494.10 L1358.20 1402.50 L1358.20 1402.50 L1359.40 1494.10 L1368.40 1494.10 L1369.60 1402.50 L1371.20 1402.50 L1372.40 1494.10 L1375.50 1494.10 L1377.90 1402.50 L1377.90 1402.50 L1379.80 1494.10 L1380.10 1494.10 L1382.80 1402.50 L1382.80 1402.50 L1384.70 1494.10 L1388.30 1494.10 L1389.50 1402.50 L1393.60 1402.50 L1394.80 1494.10 L1398.10 1494.10 L1399.90 1402.50 L1399.90 1402.50 L1401.40 1494.10 L1407.50 1494.10 L1409.90 1402.50 L1409.90 1402.50 L1411.50 1494.10 L1435.60 1494.10 L1437.20 1402.50 L1437.20 1402.50 L1438.40 1494.10 L1476.60 1494.10 L1479.10 1402.50 L1479.10 1402.50 L1480.30 1494.10 L1486.40 1494.10 L1488.90 1402.50 L1488.90 1402.50 L1490.40 1494.10 L1497.00 1494.10 L1497.60 1402.50 L1499.10 1402.50 L1500.70 1494.10 L1501.40 1494.10 L1502.70 1402.50 L1504.20 1402.50 L1505.70 1494.10 L1506.30 1494.10 L1507.60 1402.50 L1509.40 1402.50 L1510.60 1494.10 L1518.30 1494.10 L1520.90 1402.50 L1520.90 1402.50 L1522.10 1494.10 L1525.90 1494.10 L1527.90 1402.50 L1527.90 1402.50 L1529.30 1494.10 L1585.60 1494.10 L1586.80 1402.50 L1586.80 1402.50 L1589.40 1494.10 L1595.60 1494.10 L1597.10 1402.50 L1597.10 1402.50 L1598.60 1494.10 L1624.70 1494.10 L1627.30 1309.20 L1627.30 1309.20 L1628.50 1494.10 L1720.60 1494.10 L1723.10 1402.50 L1723.10 1402.50 L1724.60 1494.10 L1760.40 1494.10 L1762.10 1309.20 L1762.10 1309.20 L1764.20 1494.10 L1775.50 1494.10 L1776.70 1402.50 L1780.40 1402.50 L1782.00 1494.10 L1787.50 1494.10 L1788.90 1309.20 L1788.90 1309.20 L1790.80 1494.10 L1794.40 1494.10 L1796.90 1402.50 L1796.90 1402.50 L1798.70 1494.10 L1804.60 1494.10 L1805.80 1402.50 L1807.30 1402.50 L1808.80 1494.10 L1853.40 1494.10 L1856.10 1402.50 L1856.10 1402.50 L1857.60 1494.10 L1863.40 1494.10 L1866.10 1402.50 L1866.10 1402.50 L1867.70 1494.10 L1878.10 1494.10 L1879.60 1309.20 L1881.40 1309.20 L1883.00 1494.10 L1905.60 1494.10 L1906.40 1402.50 L1908.40 1402.50 L1909.50 1494.10 L1922.40 1494.10 L1924.90 1402.50 L1924.90 1402.50 L1926.30 1494.10 L1964.20 1494.10 L1966.40 1402.50 L1969.30 1402.50 L1970.70 1494.10 L1972.20 1494.10 L1974.00 1402.50 L1974.00 1402.50 L1975.80 1494.10 L1989.50 1494.10 L1989.50 1513.20 L1103.20 1513.20 Z" fill="rgba(86,166,75,0.1)" stroke="none"/>
<path d="M1103.20 1494.10 L1132.40 1494.10 L1134.20 1402.50 L1134.20 1402.50 L1135.40 1494.10 L1171.50 1494.10 L1173.00 1309.20 L1173.70 1309.20 L1175.40 1494.10 L1188.20 1494.10 L1189.40 1402.50 L1193.40 1402.50 L1194.30 1309.20 L1196.50 1309.20 L1197.70 1494.10 L1205.30 1494.10 L1207.70 1402.50 L1207.70 1402.50 L1209.30 1494.10 L1228.50 1494.10 L1230.10 1402.50 L1230.10 1402.50 L1231.60 1494.10 L1265.50 1494.10 L1266.70 1402.50 L1267.30 1402.50 L1268.30 1494.10 L1270.40 1494.10 L1272.00 1402.50 L1272.00 1402.50 L1273.20 1494.10 L1319.30 1494.10 L1320.90 1402.50 L1320.90 1402.50 L1322.40 1494.10 L1326.40 1494.10 L1327.60 1402.50 L1329.10 1402.50 L1330.60 1494.10 L1356.60 1494.10 L1358.20 1402.50 L1358.20 1402.50 L1359.40 1494.10 L1368.40 1494.10 L1369.60 1402.50 L1371.20 1402.50 L1372.40 1494.10 L1375.50 1494.10 L1377.90 1402.50 L1377.90 1402.50 L1379.80 1494.10 L1380.10 1494.10 L1382.80 1402.50 L1382.80 1402.50 L1384.70 1494.10 L1388.30 1494.10 L1389.50 1402.50 L1393.60 1402.50 L1394.80 1494.10 L1398.10 1494.10 L1399.90 1402.50 L1399.90 1402.50 L1401.40 1494.10 L1407.50 1494.10 L1409.90 1402.50 L1409.90 1402.50 L1411.50 1494.10 L1435.60 1494.10 L1437.20 1402.50 L1437.20 1402.50 L1438.40 1494.10 L1476.60 1494.10 L1479.10 1402.50 L1479.10 1402.50 L1480.30 1494.10 L1486.40 1494.10 L1488.90 1402.50 L1488.90 1402.50 L1490.40 1494.10 L1497.00 1494.10 L1497.60 1402.50 L1499.10 1402.50 L1500.70 1494.10 L1501.40 1494.10 L1502.70 1402.50 L1504.20 1402.50 L1505.70 1494.10 L1506.30 1494.10 L1507.60 1402.50 L1509.40 1402.50 L1510.60 1494.10 L1518.30 1494.10 L1520.90 1402.50 L1520.90 1402.50 L1522.10 1494.10 L1525.90 1494.10 L1527.90 1402.50 L1527.90 1402.50 L1529.30 1494.10 L1585.60 1494.10 L1586.80 1402.50 L1586.80 1402.50 L1589.40 1494.10 L1595.60 1494.10 L1597.10 1402.50 L1597.10 1402.50 L1598.60 1494.10 L1624.70 1494.10 L1627.30 1309.20 L1627.30 1309.20 L1628.50 1494.10 L1720.60 1494.10 L1723.10 1402.50 L1723.10 1402.50 L1724.60 1494.10 L1760.40 1494.10 L1762.10 1309.20 L1762.10 1309.20 L1764.20 1494.10 L1775.50 1494.10 L1776.70 1402.50 L1780.40 1402.50 L1782.00 1494.10 L1787.50 1494.10 L1788.90 1309.20 L1788.90 1309.20 L1790.80 1494.10 L1794.40 1494.10 L1796.90 1402.50 L1796.90 1402.50 L1798.70 1494.10 L1804.60 1494.10 L1805.80 1402.50 L1807.30 1402.50 L1808.80 1494.10 L1853.40 1494.10 L1856.10 1402.50 L1856.10 1402.50 L1857.60 1494.10 L1863.40 1494.10 L1866.10 1402.50 L1866.10 1402.50 L1867.70 1494.10 L1878.10 1494.10 L1879.60 1309.20 L1881.40 1309.20 L1883.00 1494.10 L1905.60 1494.10 L1906.40 1402.50 L1908.40 1402.50 L1909.50 1494.10 L1922.40 1494.10 L1924.90 1402.50 L1924.90 1402.50 L1926.30 1494.10 L1964.20 1494.10 L1966.40 1402.50 L1969.30 1402.50 L1970.70 1494.10 L1972.20 1494.10 L1974.00 1402.50 L1974.00 1402.50 L1975.80 1494.10 L1989.50 1494.10" fill="none" stroke="#56a64b" stroke-width="1.2" stroke-linejoin="round"/>
<rect x="1094.0" y="1550.4" width="16.5" height="5" rx="1.2" fill="#56a64b"/>
<text x="1120.30" y="1557.30" font-family='"Liberation Sans", sans-serif' font-size="14.8" font-weight="400" fill="#3d4248" text-anchor="start">node-exporter: goroutine count (avg)</text>
<rect x="89.5" y="1585.5" width="965" height="354" rx="2.5" fill="#fff" stroke="#e0e2e5" stroke-width="1"/>
<text x="572.00" y="1610.80" font-family='"Liberation Sans", sans-serif' font-size="16.7" font-weight="400" fill="#24292e" text-anchor="middle" stroke="#24292e" stroke-width="0.45">GC min &amp; max duration</text>
<rect x="175.2" y="1644.70" width="850.1" height="1" fill="rgba(36,41,46,0.11)"/>
<text x="168.10" y="1649.30" font-family='"Liberation Sans", sans-serif' font-size="14" font-weight="400" fill="#3d4248" text-anchor="end">0.250 ms</text>
<rect x="175.2" y="1689.10" width="850.1" height="1" fill="rgba(36,41,46,0.11)"/>
<text x="168.10" y="1693.70" font-family='"Liberation Sans", sans-serif' font-size="14" font-weight="400" fill="#3d4248" text-anchor="end">0.200 ms</text>
<rect x="175.2" y="1734.80" width="850.1" height="1" fill="rgba(36,41,46,0.11)"/>
<text x="168.10" y="1739.40" font-family='"Liberation Sans", sans-serif' font-size="14" font-weight="400" fill="#3d4248" text-anchor="end">0.150 ms</text>
<rect x="175.2" y="1780.40" width="850.1" height="1" fill="rgba(36,41,46,0.11)"/>
<text x="168.10" y="1785.00" font-family='"Liberation Sans", sans-serif' font-size="14" font-weight="400" fill="#3d4248" text-anchor="end">0.100 ms</text>
<rect x="175.2" y="1825.80" width="850.1" height="1" fill="rgba(36,41,46,0.11)"/>
<text x="168.10" y="1830.40" font-family='"Liberation Sans", sans-serif' font-size="14" font-weight="400" fill="#3d4248" text-anchor="end">0.0500 ms</text>
<rect x="175.2" y="1871.20" width="850.1" height="1" fill="rgba(36,41,46,0.11)"/>
<text x="168.10" y="1875.80" font-family='"Liberation Sans", sans-serif' font-size="14" font-weight="400" fill="#3d4248" text-anchor="end">0 ms</text>
<rect x="184.90" y="1645.2" width="1" height="226.5" fill="rgba(36,41,46,0.11)"/>
<text x="185.40" y="1893.00" font-family='"Liberation Sans", sans-serif' font-size="14" font-weight="400" fill="#3d4248" text-anchor="middle">05:00</text>
<rect x="326.50" y="1645.2" width="1" height="226.5" fill="rgba(36,41,46,0.11)"/>
<text x="327.00" y="1893.00" font-family='"Liberation Sans", sans-serif' font-size="14" font-weight="400" fill="#3d4248" text-anchor="middle">06:00</text>
<rect x="468.10" y="1645.2" width="1" height="226.5" fill="rgba(36,41,46,0.11)"/>
<text x="468.60" y="1893.00" font-family='"Liberation Sans", sans-serif' font-size="14" font-weight="400" fill="#3d4248" text-anchor="middle">07:00</text>
<rect x="609.70" y="1645.2" width="1" height="226.5" fill="rgba(36,41,46,0.11)"/>
<text x="610.20" y="1893.00" font-family='"Liberation Sans", sans-serif' font-size="14" font-weight="400" fill="#3d4248" text-anchor="middle">08:00</text>
<rect x="751.30" y="1645.2" width="1" height="226.5" fill="rgba(36,41,46,0.11)"/>
<text x="751.80" y="1893.00" font-family='"Liberation Sans", sans-serif' font-size="14" font-weight="400" fill="#3d4248" text-anchor="middle">09:00</text>
<rect x="892.90" y="1645.2" width="1" height="226.5" fill="rgba(36,41,46,0.11)"/>
<text x="893.40" y="1893.00" font-family='"Liberation Sans", sans-serif' font-size="14" font-weight="400" fill="#3d4248" text-anchor="middle">10:00</text>
<path d="M175.70 1825.30 L205.80 1825.30 L207.00 1854.10 L216.50 1854.10 L218.00 1868.00 L219.50 1865.60 L274.50 1865.60 L276.00 1862.30 L335.70 1862.30 L337.00 1848.50 L406.60 1848.50 L408.00 1866.40 L435.20 1866.40 L437.00 1868.00 L456.30 1868.00 L458.00 1870.00 L473.00 1870.00 L474.50 1867.40 L541.30 1867.40 L543.00 1869.00 L609.00 1869.00 L610.00 1715.00 L680.40 1715.00 L681.50 1865.40 L711.50 1865.40 L713.00 1871.00 L719.50 1871.00 L721.00 1867.00 L792.30 1867.00 L801.00 1867.50 L802.00 1862.50 L869.70 1862.50 L871.50 1867.00 L876.00 1867.00 L877.50 1865.00 L902.30 1865.00 L903.50 1692.30 L975.50 1692.30 L976.50 1868.60 L1018.40 1868.60 L1020.00 1870.30 L1025.30 1870.30 L1025.30 1871.70 L175.70 1871.70 Z" fill="rgba(234,184,57,0.1)" stroke="none"/>
<path d="M175.70 1825.30 L205.80 1825.30 L207.00 1854.10 L216.50 1854.10 L218.00 1868.00 L219.50 1865.60 L274.50 1865.60 L276.00 1862.30 L335.70 1862.30 L337.00 1848.50 L406.60 1848.50 L408.00 1866.40 L435.20 1866.40 L437.00 1868.00 L456.30 1868.00 L458.00 1870.00 L473.00 1870.00 L474.50 1867.40 L541.30 1867.40 L543.00 1869.00 L609.00 1869.00 L610.00 1715.00 L680.40 1715.00 L681.50 1865.40 L711.50 1865.40 L713.00 1871.00 L719.50 1871.00 L721.00 1867.00 L792.30 1867.00 L801.00 1867.50 L802.00 1862.50 L869.70 1862.50 L871.50 1867.00 L876.00 1867.00 L877.50 1865.00 L902.30 1865.00 L903.50 1692.30 L975.50 1692.30 L976.50 1868.60 L1018.40 1868.60 L1020.00 1870.30 L1025.30 1870.30" fill="none" stroke="#eab839" stroke-width="1.3" stroke-linejoin="round"/>
<path d="M175.70 1871.20 L1025.30 1871.20" fill="none" stroke="#7eb26d" stroke-width="1.3" stroke-linejoin="round"/>
<rect x="112.0" y="1916.2" width="16.5" height="5" rx="1.2" fill="#7eb26d"/>
<text x="138.20" y="1921.90" font-family='"Liberation Sans", sans-serif' font-size="14.8" font-weight="400" fill="#3d4248" text-anchor="start">node-exporter: min gc time (avg)</text>
<rect x="364.0" y="1916.2" width="16.5" height="5" rx="1.2" fill="#eab839"/>
<text x="390.00" y="1921.90" font-family='"Liberation Sans", sans-serif' font-size="14.8" font-weight="400" fill="#3d4248" text-anchor="start">node-exporter: max gc time (avg)</text>
<rect x="1064.5" y="1585.5" width="965" height="354" rx="2.5" fill="#fff" stroke="#e0e2e5" stroke-width="1"/>
<text x="1547.00" y="1610.80" font-family='"Liberation Sans", sans-serif' font-size="16.7" font-weight="400" fill="#24292e" text-anchor="middle" stroke="#24292e" stroke-width="0.45">Next GC, Bytes</text>
<rect x="1072.90" y="1590.70" width="2.9" height="2.3" fill="#4a4f55"/>
<path d="M1072.00 1594.20 H1075.30 V1599.20 H1076.60 V1600.80 H1071.80 V1599.20 H1073.20 V1595.60 H1072.00 Z" fill="#4a4f55"/>
<rect x="1115.4" y="1644.50" width="884.5" height="1" fill="rgba(36,41,46,0.11)"/>
<text x="1108.10" y="1649.10" font-family='"Liberation Sans", sans-serif' font-size="14" font-weight="400" fill="#3d4248" text-anchor="end">8 MB</text>
<rect x="1115.4" y="1701.30" width="884.5" height="1" fill="rgba(36,41,46,0.11)"/>
<text x="1108.10" y="1705.90" font-family='"Liberation Sans", sans-serif' font-size="14" font-weight="400" fill="#3d4248" text-anchor="end">7 MB</text>
<rect x="1115.4" y="1757.70" width="884.5" height="1" fill="rgba(36,41,46,0.11)"/>
<text x="1108.10" y="1762.30" font-family='"Liberation Sans", sans-serif' font-size="14" font-weight="400" fill="#3d4248" text-anchor="end">6 MB</text>
<rect x="1115.4" y="1814.70" width="884.5" height="1" fill="rgba(36,41,46,0.11)"/>
<text x="1108.10" y="1819.30" font-family='"Liberation Sans", sans-serif' font-size="14" font-weight="400" fill="#3d4248" text-anchor="end">5 MB</text>
<rect x="1115.4" y="1871.50" width="884.5" height="1" fill="rgba(36,41,46,0.11)"/>
<text x="1108.10" y="1876.10" font-family='"Liberation Sans", sans-serif' font-size="14" font-weight="400" fill="#3d4248" text-anchor="end">4 MB</text>
<rect x="1125.70" y="1645.0" width="1" height="227.0" fill="rgba(36,41,46,0.11)"/>
<text x="1126.20" y="1893.00" font-family='"Liberation Sans", sans-serif' font-size="14" font-weight="400" fill="#3d4248" text-anchor="middle">05:00</text>
<rect x="1273.30" y="1645.0" width="1" height="227.0" fill="rgba(36,41,46,0.11)"/>
<text x="1273.80" y="1893.00" font-family='"Liberation Sans", sans-serif' font-size="14" font-weight="400" fill="#3d4248" text-anchor="middle">06:00</text>
<rect x="1420.90" y="1645.0" width="1" height="227.0" fill="rgba(36,41,46,0.11)"/>
<text x="1421.40" y="1893.00" font-family='"Liberation Sans", sans-serif' font-size="14" font-weight="400" fill="#3d4248" text-anchor="middle">07:00</text>
<rect x="1568.50" y="1645.0" width="1" height="227.0" fill="rgba(36,41,46,0.11)"/>
<text x="1569.00" y="1893.00" font-family='"Liberation Sans", sans-serif' font-size="14" font-weight="400" fill="#3d4248" text-anchor="middle">08:00</text>
<rect x="1716.10" y="1645.0" width="1" height="227.0" fill="rgba(36,41,46,0.11)"/>
<text x="1716.60" y="1893.00" font-family='"Liberation Sans", sans-serif' font-size="14" font-weight="400" fill="#3d4248" text-anchor="middle">09:00</text>
<rect x="1863.70" y="1645.0" width="1" height="227.0" fill="rgba(36,41,46,0.11)"/>
<text x="1864.20" y="1893.00" font-family='"Liberation Sans", sans-serif' font-size="14" font-weight="400" fill="#3d4248" text-anchor="middle">10:00</text>
<path d="M1116.00 1814.00 L1115.82 1813.88 L1117.35 1811.59 L1119.95 1813.88 L1121.48 1764.90 L1122.55 1764.14 L1124.54 1753.88 L1126.53 1821.54 L1128.37 1816.95 L1129.90 1816.18 L1131.74 1810.82 L1134.49 1861.34 L1136.02 1804.70 L1137.25 1803.94 L1139.39 1754.19 L1141.38 1828.43 L1143.98 1676.89 L1145.97 1769.49 L1149.03 1752.66 L1151.33 1810.82 L1154.08 1754.19 L1156.69 1754.19 L1158.68 1761.84 L1160.82 1754.19 L1162.81 1813.88 L1166.33 1821.54 L1168.93 1714.39 L1170.92 1745.00 L1171.99 1745.00 L1173.98 1817.71 L1176.13 1807.76 L1178.88 1807.76 L1181.64 1813.88 L1183.17 1861.34 L1186.53 1861.34 L1188.07 1763.68 L1190.82 1754.19 L1192.66 1761.84 L1195.72 1753.88 L1198.47 1861.34 L1201.08 1814.65 L1203.07 1774.85 L1205.21 1797.81 L1207.96 1775.31 L1210.26 1820.01 L1212.86 1826.13 L1214.85 1814.65 L1217.91 1809.29 L1220.21 1823.83 L1222.96 1834.55 L1225.11 1808.53 L1227.56 1753.88 L1229.70 1795.52 L1231.69 1833.78 L1235.21 1836.08 L1236.74 1754.19 L1240.11 1754.19 L1242.40 1764.14 L1244.70 1812.35 L1247.00 1766.43 L1249.60 1813.88 L1251.59 1754.19 L1255.42 1754.19 L1257.25 1809.29 L1259.24 1800.87 L1261.84 1820.01 L1264.60 1796.28 L1266.90 1816.18 L1269.50 1806.23 L1271.49 1812.35 L1274.09 1783.27 L1276.54 1806.23 L1278.68 1787.86 L1280.67 1793.99 L1282.20 1794.75 L1284.19 1819.24 L1286.79 1815.42 L1289.09 1808.53 L1291.39 1816.18 L1293.38 1754.95 L1296.74 1753.42 L1299.50 1754.95 L1301.34 1829.19 L1304.09 1805.47 L1306.69 1813.12 L1308.68 1808.53 L1311.29 1816.18 L1313.28 1793.99 L1315.88 1820.01 L1318.17 1814.65 L1320.93 1841.44 L1322.77 1755.72 L1326.13 1754.49 L1329.65 1754.49 L1330.42 1815.11 L1336.54 1816.95 L1338.38 1754.19 L1340.37 1821.54 L1342.97 1764.60 L1345.73 1805.47 L1348.02 1861.34 L1350.62 1775.62 L1353.07 1812.35 L1355.68 1799.34 L1357.97 1833.02 L1360.27 1782.51 L1362.56 1800.87 L1365.32 1799.34 L1367.92 1792.46 L1370.22 1811.59 L1372.97 1826.90 L1375.57 1820.77 L1377.56 1794.75 L1380.17 1811.59 L1382.46 1861.34 L1385.22 1819.24 L1387.36 1793.22 L1389.81 1813.88 L1392.41 1861.34 L1394.40 1813.12 L1396.55 1814.65 L1399.30 1806.23 L1402.36 1810.82 L1404.66 1753.88 L1406.95 1826.13 L1410.02 1764.14 L1411.89 1726.64 L1414.18 1826.13 L1416.94 1787.10 L1419.24 1753.88 L1421.84 1826.13 L1424.90 1817.71 L1426.43 1754.19 L1429.49 1752.35 L1431.79 1767.96 L1433.78 1803.17 L1436.84 1804.70 L1438.98 1753.88 L1440.97 1813.88 L1443.57 1751.13 L1446.02 1753.42 L1449.08 1750.36 L1450.92 1818.48 L1453.22 1813.88 L1456.28 1813.58 L1458.88 1817.71 L1461.33 1836.08 L1463.47 1798.58 L1465.92 1753.42 L1470.82 1754.19 L1473.57 1815.11 L1475.72 1764.90 L1478.17 1753.88 L1480.77 1744.24 L1483.37 1861.34 L1485.36 1752.66 L1488.42 1753.42 L1490.72 1861.34 L1493.01 1753.42 L1496.54 1767.96 L1497.61 1813.12 L1501.13 1814.65 L1502.96 1793.22 L1505.26 1754.19 L1507.25 1808.53 L1510.31 1818.48 L1512.91 1754.19 L1515.21 1797.81 L1517.51 1809.29 L1520.57 1812.35 L1525.16 1816.95 L1527.46 1754.19 L1530.21 1818.48 L1532.05 1777.91 L1534.80 1816.18 L1536.95 1809.29 L1539.70 1761.84 L1542.00 1735.82 L1544.29 1798.58 L1547.66 1813.12 L1549.65 1861.34 L1551.95 1796.28 L1554.70 1809.29 L1556.84 1712.86 L1559.29 1753.88 L1561.90 1775.31 L1564.50 1753.88 L1567.25 1770.26 L1570.31 1815.42 L1574.14 1817.71 L1579.19 1834.55 L1581.34 1776.38 L1583.78 1779.44 L1585.62 1754.19 L1594.04 1753.88 L1597.10 1753.42 L1598.17 1816.95 L1601.69 1818.48 L1603.68 1802.40 L1606.29 1720.51 L1608.58 1822.30 L1610.88 1753.88 L1613.17 1771.03 L1615.93 1755.72 L1618.07 1828.43 L1621.13 1816.95 L1622.66 1753.42 L1626.18 1753.88 L1628.17 1825.37 L1630.78 1753.88 L1633.38 1803.17 L1635.83 1825.37 L1637.97 1770.26 L1640.73 1861.34 L1643.02 1815.42 L1645.62 1818.48 L1648.38 1816.95 L1650.68 1750.36 L1653.28 1761.84 L1655.27 1810.06 L1657.26 1798.58 L1660.32 1754.19 L1662.46 1818.48 L1665.52 1821.54 L1667.05 1753.88 L1674.40 1752.66 L1677.16 1767.96 L1680.22 1753.42 L1682.36 1861.34 L1684.35 1801.64 L1687.41 1803.17 L1689.71 1723.57 L1692.00 1753.42 L1697.36 1753.88 L1699.66 1792.46 L1701.95 1825.37 L1704.25 1754.19 L1707.35 1754.19 L1708.88 1807.00 L1712.25 1813.12 L1714.08 1754.19 L1716.84 1753.88 L1720.21 1761.84 L1721.43 1833.78 L1724.18 1817.71 L1726.33 1836.85 L1729.08 1816.18 L1731.38 1834.55 L1734.44 1827.66 L1736.74 1817.25 L1739.03 1828.89 L1741.33 1808.53 L1743.62 1754.19 L1745.92 1806.23 L1748.68 1826.13 L1751.28 1809.29 L1753.57 1749.60 L1755.87 1807.76 L1758.47 1826.13 L1760.92 1754.19 L1763.52 1831.49 L1765.82 1782.51 L1768.12 1803.94 L1771.94 1820.77 L1773.47 1861.34 L1775.77 1754.19 L1778.07 1774.85 L1781.13 1769.49 L1783.42 1754.19 L1785.72 1799.34 L1788.01 1833.02 L1791.08 1800.11 L1793.37 1800.11 L1794.90 1753.88 L1797.96 1754.19 L1800.26 1774.85 L1802.56 1789.39 L1804.85 1807.00 L1807.91 1813.58 L1810.21 1810.82 L1813.27 1810.82 L1815.11 1753.88 L1817.10 1774.85 L1820.16 1822.30 L1822.46 1753.88 L1824.75 1764.14 L1827.81 1754.19 L1830.11 1810.06 L1831.95 1834.55 L1834.70 1806.23 L1837.00 1687.60 L1839.60 1753.42 L1841.59 1802.40 L1844.65 1833.02 L1846.95 1712.86 L1849.24 1801.64 L1851.84 1776.38 L1854.29 1830.42 L1857.66 1815.42 L1859.50 1753.42 L1861.95 1816.18 L1864.09 1753.42 L1866.54 1861.34 L1869.14 1763.68 L1871.44 1819.24 L1874.19 1829.19 L1876.79 1810.82 L1879.09 1825.37 L1881.39 1861.34 L1883.68 1815.42 L1885.98 1818.48 L1889.04 1789.39 L1892.10 1807.00 L1893.63 1861.34 L1896.69 1823.07 L1898.68 1753.42 L1900.83 1826.13 L1903.28 1753.42 L1905.88 1804.70 L1908.17 1753.42 L1910.93 1810.82 L1913.53 1855.98 L1915.83 1753.42 L1918.12 1821.54 L1920.42 1753.88 L1923.48 1810.06 L1925.78 1861.34 L1928.38 1754.19 L1930.37 1830.42 L1933.43 1828.89 L1935.73 1861.34 L1938.02 1823.07 L1940.62 1753.42 L1943.38 1830.42 L1945.68 1833.02 L1947.67 1813.12 L1949.81 1753.42 L1953.33 1753.88 L1955.32 1763.37 L1957.92 1825.37 L1959.45 1753.88 L1963.28 1754.19 L1964.81 1790.92 L1967.11 1817.25 L1970.17 1810.82 L1973.23 1817.71 L1974.76 1753.88 L1980.12 1752.66 L1982.41 1861.34 L1984.71 1752.66 L1987.46 1820.01 L1989.30 1861.34 L1992.06 1753.88 L1993.89 1817.71 L1996.95 1787.10 L1999.25 1770.26 L1999.25 1872.00 L1116.00 1872.00 Z" fill="rgba(126,178,109,0.1)" stroke="none"/>
<path d="M1116.00 1814.00 L1115.82 1813.88 L1117.35 1811.59 L1119.95 1813.88 L1121.48 1764.90 L1122.55 1764.14 L1124.54 1753.88 L1126.53 1821.54 L1128.37 1816.95 L1129.90 1816.18 L1131.74 1810.82 L1134.49 1861.34 L1136.02 1804.70 L1137.25 1803.94 L1139.39 1754.19 L1141.38 1828.43 L1143.98 1676.89 L1145.97 1769.49 L1149.03 1752.66 L1151.33 1810.82 L1154.08 1754.19 L1156.69 1754.19 L1158.68 1761.84 L1160.82 1754.19 L1162.81 1813.88 L1166.33 1821.54 L1168.93 1714.39 L1170.92 1745.00 L1171.99 1745.00 L1173.98 1817.71 L1176.13 1807.76 L1178.88 1807.76 L1181.64 1813.88 L1183.17 1861.34 L1186.53 1861.34 L1188.07 1763.68 L1190.82 1754.19 L1192.66 1761.84 L1195.72 1753.88 L1198.47 1861.34 L1201.08 1814.65 L1203.07 1774.85 L1205.21 1797.81 L1207.96 1775.31 L1210.26 1820.01 L1212.86 1826.13 L1214.85 1814.65 L1217.91 1809.29 L1220.21 1823.83 L1222.96 1834.55 L1225.11 1808.53 L1227.56 1753.88 L1229.70 1795.52 L1231.69 1833.78 L1235.21 1836.08 L1236.74 1754.19 L1240.11 1754.19 L1242.40 1764.14 L1244.70 1812.35 L1247.00 1766.43 L1249.60 1813.88 L1251.59 1754.19 L1255.42 1754.19 L1257.25 1809.29 L1259.24 1800.87 L1261.84 1820.01 L1264.60 1796.28 L1266.90 1816.18 L1269.50 1806.23 L1271.49 1812.35 L1274.09 1783.27 L1276.54 1806.23 L1278.68 1787.86 L1280.67 1793.99 L1282.20 1794.75 L1284.19 1819.24 L1286.79 1815.42 L1289.09 1808.53 L1291.39 1816.18 L1293.38 1754.95 L1296.74 1753.42 L1299.50 1754.95 L1301.34 1829.19 L1304.09 1805.47 L1306.69 1813.12 L1308.68 1808.53 L1311.29 1816.18 L1313.28 1793.99 L1315.88 1820.01 L1318.17 1814.65 L1320.93 1841.44 L1322.77 1755.72 L1326.13 1754.49 L1329.65 1754.49 L1330.42 1815.11 L1336.54 1816.95 L1338.38 1754.19 L1340.37 1821.54 L1342.97 1764.60 L1345.73 1805.47 L1348.02 1861.34 L1350.62 1775.62 L1353.07 1812.35 L1355.68 1799.34 L1357.97 1833.02 L1360.27 1782.51 L1362.56 1800.87 L1365.32 1799.34 L1367.92 1792.46 L1370.22 1811.59 L1372.97 1826.90 L1375.57 1820.77 L1377.56 1794.75 L1380.17 1811.59 L1382.46 1861.34 L1385.22 1819.24 L1387.36 1793.22 L1389.81 1813.88 L1392.41 1861.34 L1394.40 1813.12 L1396.55 1814.65 L1399.30 1806.23 L1402.36 1810.82 L1404.66 1753.88 L1406.95 1826.13 L1410.02 1764.14 L1411.89 1726.64 L1414.18 1826.13 L1416.94 1787.10 L1419.24 1753.88 L1421.84 1826.13 L1424.90 1817.71 L1426.43 1754.19 L1429.49 1752.35 L1431.79 1767.96 L1433.78 1803.17 L1436.84 1804.70 L1438.98 1753.88 L1440.97 1813.88 L1443.57 1751.13 L1446.02 1753.42 L1449.08 1750.36 L1450.92 1818.48 L1453.22 1813.88 L1456.28 1813.58 L1458.88 1817.71 L1461.33 1836.08 L1463.47 1798.58 L1465.92 1753.42 L1470.82 1754.19 L1473.57 1815.11 L1475.72 1764.90 L1478.17 1753.88 L1480.77 1744.24 L1483.37 1861.34 L1485.36 1752.66 L1488.42 1753.42 L1490.72 1861.34 L1493.01 1753.42 L1496.54 1767.96 L1497.61 1813.12 L1501.13 1814.65 L1502.96 1793.22 L1505.26 1754.19 L1507.25 1808.53 L1510.31 1818.48 L1512.91 1754.19 L1515.21 1797.81 L1517.51 1809.29 L1520.57 1812.35 L1525.16 1816.95 L1527.46 1754.19 L1530.21 1818.48 L1532.05 1777.91 L1534.80 1816.18 L1536.95 1809.29 L1539.70 1761.84 L1542.00 1735.82 L1544.29 1798.58 L1547.66 1813.12 L1549.65 1861.34 L1551.95 1796.28 L1554.70 1809.29 L1556.84 1712.86 L1559.29 1753.88 L1561.90 1775.31 L1564.50 1753.88 L1567.25 1770.26 L1570.31 1815.42 L1574.14 1817.71 L1579.19 1834.55 L1581.34 1776.38 L1583.78 1779.44 L1585.62 1754.19 L1594.04 1753.88 L1597.10 1753.42 L1598.17 1816.95 L1601.69 1818.48 L1603.68 1802.40 L1606.29 1720.51 L1608.58 1822.30 L1610.88 1753.88 L1613.17 1771.03 L1615.93 1755.72 L1618.07 1828.43 L1621.13 1816.95 L1622.66 1753.42 L1626.18 1753.88 L1628.17 1825.37 L1630.78 1753.88 L1633.38 1803.17 L1635.83 1825.37 L1637.97 1770.26 L1640.73 1861.34 L1643.02 1815.42 L1645.62 1818.48 L1648.38 1816.95 L1650.68 1750.36 L1653.28 1761.84 L1655.27 1810.06 L1657.26 1798.58 L1660.32 1754.19 L1662.46 1818.48 L1665.52 1821.54 L1667.05 1753.88 L1674.40 1752.66 L1677.16 1767.96 L1680.22 1753.42 L1682.36 1861.34 L1684.35 1801.64 L1687.41 1803.17 L1689.71 1723.57 L1692.00 1753.42 L1697.36 1753.88 L1699.66 1792.46 L1701.95 1825.37 L1704.25 1754.19 L1707.35 1754.19 L1708.88 1807.00 L1712.25 1813.12 L1714.08 1754.19 L1716.84 1753.88 L1720.21 1761.84 L1721.43 1833.78 L1724.18 1817.71 L1726.33 1836.85 L1729.08 1816.18 L1731.38 1834.55 L1734.44 1827.66 L1736.74 1817.25 L1739.03 1828.89 L1741.33 1808.53 L1743.62 1754.19 L1745.92 1806.23 L1748.68 1826.13 L1751.28 1809.29 L1753.57 1749.60 L1755.87 1807.76 L1758.47 1826.13 L1760.92 1754.19 L1763.52 1831.49 L1765.82 1782.51 L1768.12 1803.94 L1771.94 1820.77 L1773.47 1861.34 L1775.77 1754.19 L1778.07 1774.85 L1781.13 1769.49 L1783.42 1754.19 L1785.72 1799.34 L1788.01 1833.02 L1791.08 1800.11 L1793.37 1800.11 L1794.90 1753.88 L1797.96 1754.19 L1800.26 1774.85 L1802.56 1789.39 L1804.85 1807.00 L1807.91 1813.58 L1810.21 1810.82 L1813.27 1810.82 L1815.11 1753.88 L1817.10 1774.85 L1820.16 1822.30 L1822.46 1753.88 L1824.75 1764.14 L1827.81 1754.19 L1830.11 1810.06 L1831.95 1834.55 L1834.70 1806.23 L1837.00 1687.60 L1839.60 1753.42 L1841.59 1802.40 L1844.65 1833.02 L1846.95 1712.86 L1849.24 1801.64 L1851.84 1776.38 L1854.29 1830.42 L1857.66 1815.42 L1859.50 1753.42 L1861.95 1816.18 L1864.09 1753.42 L1866.54 1861.34 L1869.14 1763.68 L1871.44 1819.24 L1874.19 1829.19 L1876.79 1810.82 L1879.09 1825.37 L1881.39 1861.34 L1883.68 1815.42 L1885.98 1818.48 L1889.04 1789.39 L1892.10 1807.00 L1893.63 1861.34 L1896.69 1823.07 L1898.68 1753.42 L1900.83 1826.13 L1903.28 1753.42 L1905.88 1804.70 L1908.17 1753.42 L1910.93 1810.82 L1913.53 1855.98 L1915.83 1753.42 L1918.12 1821.54 L1920.42 1753.88 L1923.48 1810.06 L1925.78 1861.34 L1928.38 1754.19 L1930.37 1830.42 L1933.43 1828.89 L1935.73 1861.34 L1938.02 1823.07 L1940.62 1753.42 L1943.38 1830.42 L1945.68 1833.02 L1947.67 1813.12 L1949.81 1753.42 L1953.33 1753.88 L1955.32 1763.37 L1957.92 1825.37 L1959.45 1753.88 L1963.28 1754.19 L1964.81 1790.92 L1967.11 1817.25 L1970.17 1810.82 L1973.23 1817.71 L1974.76 1753.88 L1980.12 1752.66 L1982.41 1861.34 L1984.71 1752.66 L1987.46 1820.01 L1989.30 1861.34 L1992.06 1753.88 L1993.89 1817.71 L1996.95 1787.10 L1999.25 1770.26" fill="none" stroke="#7eb26d" stroke-width="1.2" stroke-linejoin="round"/>
<rect x="1087.3" y="1916.3" width="16.5" height="5" rx="1.2" fill="#7eb26d"/>
<text x="1113.00" y="1922.00" font-family='"Liberation Sans", sans-serif' font-size="14.8" font-weight="400" fill="#3d4248" text-anchor="start">node-exporter next gc bytes (avg)</text>
<rect x="0" y="0" width="2049" height="1" fill="#b4b4b4"/>
<rect x="2047" y="0" width="1" height="1968" fill="#ffffff"/>
<rect x="0" y="1966" width="2049" height="1" fill="#ffffff"/>
<rect x="0" y="0" width="1" height="1968" fill="#6e6e6e"/>
<rect x="2048" y="0" width="1" height="1968" fill="#6e6e6e"/>
<rect x="0" y="1967" width="2049" height="1" fill="#6e6e6e"/>
</svg></body></html>
